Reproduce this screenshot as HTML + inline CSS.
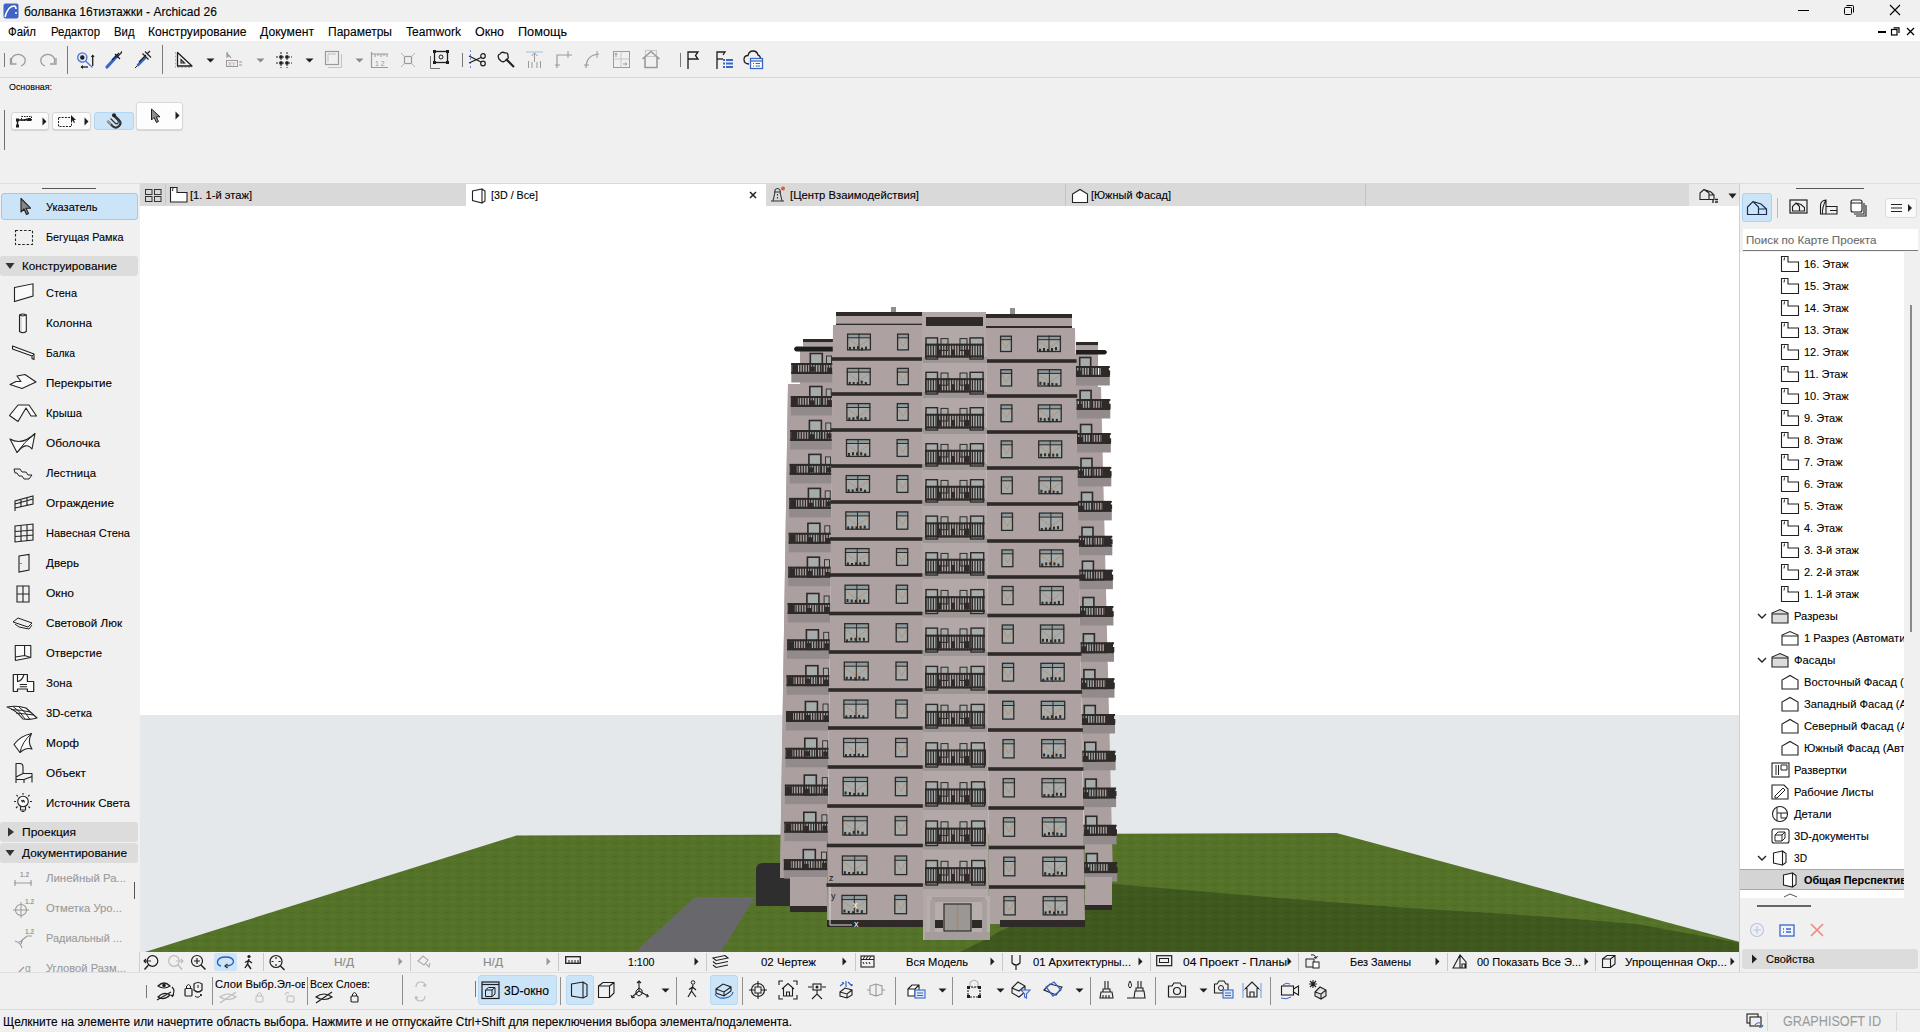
<!DOCTYPE html>
<html><head><meta charset="utf-8"><title>Archicad</title>
<style>
*{margin:0;padding:0;box-sizing:border-box}
html,body{width:1920px;height:1032px;overflow:hidden;background:#f0f0f0;font-family:"Liberation Sans",sans-serif;color:#000}
.a{position:absolute}
.t{position:absolute;white-space:nowrap;line-height:1;-webkit-text-stroke:0.1px currentColor}
svg{position:absolute;overflow:visible}
</style></head><body>
<div class="a" style="left:0px;top:0px;width:1920px;height:22px;background:#f0f0f0;"></div>
<svg class="a" style="left:3px;top:3px;" width="16" height="16" viewBox="0 0 16 16"><rect x="0.5" y="0.5" width="15" height="15" rx="2" fill="#3f63c6"/><path d="M2 14 Q5 3 11 3 Q13 3 13 6" stroke="#fff" stroke-width="1.6" fill="none"/><circle cx="13" cy="10" r="1" fill="#fff"/></svg>
<div class="t" style="left:24px;top:5.84px;font-size:12px;color:#000;">болванка 16тиэтажки - Archicad 26</div>
<div class="a" style="left:1798px;top:10px;width:11px;height:1px;background:#000;"></div>
<svg class="a" style="left:1843px;top:4px;" width="12" height="12" viewBox="0 0 12 12"><rect x="1.5" y="3.5" width="7" height="7" rx="1" fill="none" stroke="#000"/><path d="M3.5 1.5 H9.5 Q10.5 1.5 10.5 2.5 V8.5" fill="none" stroke="#000"/></svg>
<svg class="a" style="left:1889px;top:4px;" width="12" height="12" viewBox="0 0 12 12"><path d="M1 1 L11 11 M11 1 L1 11" stroke="#000" stroke-width="1.1"/></svg>
<div class="a" style="left:0px;top:22px;width:1920px;height:19px;background:#ffffff;"></div>
<div class="t" style="left:7.5px;top:26.34px;font-size:12px;color:#000;transform:scaleX(0.9491);transform-origin:0 0;">Файл</div>
<div class="t" style="left:50.5px;top:26.34px;font-size:12px;color:#000;transform:scaleX(0.9485);transform-origin:0 0;">Редактор</div>
<div class="t" style="left:114px;top:26.34px;font-size:12px;color:#000;transform:scaleX(0.9443);transform-origin:0 0;">Вид</div>
<div class="t" style="left:148px;top:26.34px;font-size:12px;color:#000;transform:scaleX(1.0124);transform-origin:0 0;">Конструирование</div>
<div class="t" style="left:260px;top:26.34px;font-size:12px;color:#000;transform:scaleX(1.0144);transform-origin:0 0;">Документ</div>
<div class="t" style="left:328px;top:26.34px;font-size:12px;color:#000;transform:scaleX(1.0005);transform-origin:0 0;">Параметры</div>
<div class="t" style="left:406px;top:26.34px;font-size:12px;color:#000;transform:scaleX(1.0058);transform-origin:0 0;">Teamwork</div>
<div class="t" style="left:475px;top:26.34px;font-size:12px;color:#000;transform:scaleX(1.0400);transform-origin:0 0;">Окно</div>
<div class="t" style="left:518px;top:26.34px;font-size:12px;color:#000;transform:scaleX(1.0572);transform-origin:0 0;">Помощь</div>
<div class="a" style="left:1878px;top:31px;width:8px;height:1.5px;background:#000;"></div>
<svg class="a" style="left:1891px;top:27px;" width="9" height="9" viewBox="0 0 9 9"><rect x="0.5" y="2.5" width="5.5" height="5.5" fill="none" stroke="#000" stroke-width="1.2"/><path d="M2.5 0.8 H8 V6" fill="none" stroke="#000" stroke-width="1.2"/></svg>
<svg class="a" style="left:1906px;top:27px;" width="9" height="9" viewBox="0 0 9 9"><path d="M1 1 L8 8 M8 1 L1 8" stroke="#000" stroke-width="1.3"/></svg>
<div class="a" style="left:0px;top:41px;width:1920px;height:36px;background:#f0f0f0;"></div>
<div class="a" style="left:0px;top:77px;width:1920px;height:1px;background:#d9d9d9;"></div>
<div class="a" style="left:4px;top:53px;width:1px;height:14px;background:#7a7a7a;"></div>
<svg class="a" style="left:9px;top:52px;" width="20" height="16" viewBox="0 0 20 16"><path d="M3 11 A7 6 0 1 1 12 14" stroke="#9a9a9a" stroke-width="1.3" fill="none"/><path d="M1.5 6 V12 H7.5" stroke="#9a9a9a" stroke-width="1.3" fill="none"/></svg>
<svg class="a" style="left:38px;top:52px;" width="20" height="16" viewBox="0 0 20 16"><path d="M16 11 A7 6 0 1 0 7 14" stroke="#9a9a9a" stroke-width="1.3" fill="none"/><path d="M18 6 V12 H12" stroke="#9a9a9a" stroke-width="1.3" fill="none"/></svg>
<div class="a" style="left:67px;top:46px;width:1px;height:28px;background:#7a7a7a;"></div>
<svg class="a" style="left:76px;top:50px;" width="20" height="20" viewBox="0 0 20 20"><circle cx="6.3" cy="7.5" r="4.6" stroke="#4d74d0" stroke-width="1.3" fill="#dfe7f7"/><circle cx="6.3" cy="7.5" r="2.2" fill="#1e1e1e"/><path d="M9.5 11 L16.5 17.5" stroke="#4d74d0" stroke-width="1.2"/><path d="M16.7 16 V5" stroke="#1e1e1e" stroke-width="1.3"/><path d="M14.8 7 L16.7 4.5 L18.6 7" fill="#1e1e1e"/><path d="M5 17 H12" stroke="#1e1e1e" stroke-width="1.3"/><path d="M7 15 L4.5 17 L7 19" fill="#1e1e1e"/></svg>
<svg class="a" style="left:104px;top:50px;" width="20" height="20" viewBox="0 0 20 20"><path d="M3 17 L13 6" stroke="#3a66c9" stroke-width="3.2" stroke-linecap="round"/><path d="M11 4 L16 9 M12.5 7.5 L17 3 Q18 2 17 1.5" stroke="#1e1e1e" stroke-width="1.2" fill="none"/><path d="M8 10 L15 3" stroke="#1e1e1e" stroke-width="1.1"/></svg>
<svg class="a" style="left:133px;top:50px;" width="20" height="20" viewBox="0 0 20 20"><path d="M2 18 L5 15" stroke="#1e1e1e" stroke-width="1"/><path d="M5 15 L12 8" stroke="#3a66c9" stroke-width="2.6" stroke-linecap="round"/><path d="M6 12 L13 5 M9.5 3.5 L15.5 9.5 M12 1.5 L18 7.5 M14 4 L17 1" stroke="#1e1e1e" stroke-width="1.1" fill="none"/></svg>
<div class="a" style="left:162px;top:45px;width:1px;height:29px;background:#7a7a7a;"></div>
<svg class="a" style="left:174px;top:50px;" width="20" height="20" viewBox="0 0 20 20"><path d="M1.5 2 V17.5 H18" stroke="#f0a060" stroke-width="1" stroke-dasharray="2 1.5" fill="none"/><path d="M3.5 2.5 V16 H18 Z" stroke="#1e1e1e" stroke-width="1.3" fill="none" stroke-linejoin="round"/><path d="M7 9.5 V13 H10.5 Z" stroke="#1e1e1e" stroke-width="1.1" fill="none"/></svg>
<svg class="a" style="left:206px;top:58px;" width="9" height="5" viewBox="0 0 9 5"><path d="M0.5 0.5 H8.5 L4.5 4.5 Z" fill="#1e1e1e"/></svg>
<svg class="a" style="left:225px;top:51px;" width="20" height="18" viewBox="0 0 20 18"><path d="M2 1 L2 6 L4 4.5 L6 7" stroke="#9a9a9a" stroke-width="1.2" fill="#9a9a9a"/><rect x="1.5" y="9.5" width="11" height="6" stroke="#9a9a9a" fill="none"/><text x="3" y="15" font-family="Liberation Sans" font-size="5.5" fill="#9a9a9a">XY</text><path d="M14 11 H17 M14 14 H17" stroke="#9a9a9a"/></svg>
<svg class="a" style="left:256px;top:58px;" width="9" height="5" viewBox="0 0 9 5"><path d="M0.5 0.5 H8.5 L4.5 4.5 Z" fill="#8a8a8a"/></svg>
<svg class="a" style="left:275px;top:51px;" width="20" height="18" viewBox="0 0 20 18"><path d="M6 1 V17 M12 1 V17 M1 6 H17 M1 12 H17" stroke="#1e1e1e" stroke-width="1" stroke-dasharray="2 1"/><rect x="4.5" y="4.5" width="3" height="3" fill="#1e1e1e"/><rect x="10.5" y="4.5" width="3" height="3" fill="#1e1e1e"/><rect x="4.5" y="10.5" width="3" height="3" fill="#1e1e1e"/><rect x="10.5" y="10.5" width="3" height="3" fill="#1e1e1e"/></svg>
<svg class="a" style="left:305px;top:58px;" width="9" height="5" viewBox="0 0 9 5"><path d="M0.5 0.5 H8.5 L4.5 4.5 Z" fill="#1e1e1e"/></svg>
<svg class="a" style="left:324px;top:50px;" width="20" height="20" viewBox="0 0 20 20"><rect x="1.5" y="1.5" width="13" height="13" stroke="#9a9a9a" fill="none" stroke-width="1.2"/><path d="M4 17.5 H17.5 V4" stroke="#b8c4d8" fill="none"/><path d="M4 12 V4 H12" stroke="#c0c0c0" fill="none"/></svg>
<svg class="a" style="left:355px;top:58px;" width="9" height="5" viewBox="0 0 9 5"><path d="M0.5 0.5 H8.5 L4.5 4.5 Z" fill="#8a8a8a"/></svg>
<svg class="a" style="left:370px;top:51px;" width="20" height="18" viewBox="0 0 20 18"><path d="M1.5 1 V16.5 H18" stroke="#9a9a9a" fill="none" stroke-width="1.2"/><path d="M1.5 3 H18 M5 3 V6 M8 3 V5 M11 3 V6 M14 3 V5 M17 3 V6" stroke="#9a9a9a" fill="none"/><text x="5" y="14.5" font-family="Liberation Sans" font-size="7" fill="#9a9a9a">1 2</text></svg>
<svg class="a" style="left:400px;top:51px;" width="16" height="18" viewBox="0 0 16 18"><rect x="4.5" y="5.5" width="7" height="7" stroke="#9a9a9a" fill="none" stroke-width="1.2"/><path d="M1 2 L5 6 M15 2 L11 6 M1 16 L5 12 M15 16 L11 12" stroke="#b5b5b5"/></svg>
<svg class="a" style="left:429px;top:50px;" width="20" height="20" viewBox="0 0 20 20"><path d="M1.5 6 V18.5 H11" stroke="#555" fill="none" stroke-width="0.8"/><rect x="5.5" y="1.5" width="13" height="11" stroke="#1e1e1e" stroke-width="1.3" fill="none"/><rect x="4" y="0" width="3" height="3" fill="#1e1e1e"/><rect x="17" y="0" width="3" height="3" fill="#1e1e1e"/><rect x="4" y="11" width="3" height="3" fill="#1e1e1e"/><rect x="17" y="11" width="3" height="3" fill="#1e1e1e"/><circle cx="12" cy="7" r="2" stroke="#1e1e1e" fill="none"/></svg>
<div class="a" style="left:462px;top:53px;width:1px;height:14px;background:#7a7a7a;"></div>
<svg class="a" style="left:466px;top:49px;" width="22" height="22" viewBox="0 0 22 22"><path d="M4.5 1 V20" stroke="#6a8fd8" stroke-dasharray="2 2"/><circle cx="17" cy="7" r="2.3" stroke="#1e1e1e" fill="none" stroke-width="1.2"/><circle cx="17" cy="14.5" r="2.3" stroke="#1e1e1e" fill="none" stroke-width="1.2"/><path d="M3 7 L15 13 M3 14 L15 8.5" stroke="#1e1e1e" stroke-width="1.2"/></svg>
<svg class="a" style="left:496px;top:50px;" width="20" height="20" viewBox="0 0 20 20"><path d="M10 9 L18 17" stroke="#1e1e1e" stroke-width="2"/><path d="M3 9 Q1 5 4 4 Q6 1 9 3 Q12 2 12 6 Q13 9 10 10 Q8 13 5 11 Z" stroke="#1e1e1e" stroke-width="1.3" fill="none"/></svg>
<svg class="a" style="left:525px;top:50px;" width="20" height="20" viewBox="0 0 20 20"><path d="M1 2 H18" stroke="#9fc0e8"/><path d="M9.5 3 V12 M6.5 6 L9.5 3 L12.5 6 M3.5 11 V18 M7 12 V18 M12 12 V18 M15.5 11 V18" stroke="#9a9a9a" fill="none"/></svg>
<svg class="a" style="left:554px;top:50px;" width="20" height="20" viewBox="0 0 20 20"><path d="M3 18 V5 H18" stroke="#9a9a9a" fill="none" stroke-width="1.2"/><path d="M14 1 V8 M1 15 H6" stroke="#9a9a9a" fill="none"/></svg>
<svg class="a" style="left:583px;top:50px;" width="20" height="20" viewBox="0 0 20 20"><path d="M3 18 Q3 5 16 4" stroke="#9a9a9a" fill="none" stroke-width="1.2"/><path d="M14 1 V8 M1 15 H6" stroke="#9a9a9a" fill="none"/></svg>
<svg class="a" style="left:612px;top:50px;" width="20" height="20" viewBox="0 0 20 20"><rect x="1.5" y="1.5" width="16" height="16" stroke="#9a9a9a" fill="none"/><path d="M9 1.5 V17.5 M1.5 9 H17.5" stroke="#c5c5c5"/><path d="M4 7 V3 M2.5 4.5 L4 3 L5.5 4.5 M11 14 H15 M13.5 12.5 L15 14 L13.5 15.5" stroke="#9a9a9a" fill="none"/></svg>
<svg class="a" style="left:641px;top:49px;" width="20" height="21" viewBox="0 0 20 21"><rect x="4.5" y="1.5" width="11" height="6" stroke="#c8c8c8" fill="none"/><path d="M1.5 10 L10 2.5 L18.5 10 M4 8 V18.5 H16 V8" stroke="#9a9a9a" stroke-width="1.6" fill="none"/></svg>
<div class="a" style="left:680px;top:53px;width:1px;height:14px;background:#7a7a7a;"></div>
<svg class="a" style="left:686px;top:50px;" width="16" height="20" viewBox="0 0 16 20"><path d="M2 19 V2 H12 L9.5 5.5 L12 9 H2" stroke="#1e1e1e" stroke-width="1.3" fill="none"/></svg>
<svg class="a" style="left:715px;top:50px;" width="20" height="20" viewBox="0 0 20 20"><path d="M2 19 V2 H10 L8 5" stroke="#1e1e1e" stroke-width="1.3" fill="none"/><path d="M2 9 H8" stroke="#1e1e1e" stroke-width="1.3"/><rect x="8" y="9" width="2" height="2" fill="#3a66c9"/><rect x="11" y="9" width="7" height="2" fill="#3a66c9"/><rect x="8" y="12.5" width="2" height="2" fill="#3a66c9"/><rect x="11" y="12.5" width="7" height="2" fill="#3a66c9"/><rect x="8" y="16" width="2" height="2" fill="#3a66c9"/><rect x="11" y="16" width="7" height="2" fill="#3a66c9"/></svg>
<svg class="a" style="left:742px;top:49px;" width="22" height="22" viewBox="0 0 22 22"><path d="M7 15 Q2 15 2 10.5 Q2 6.5 6 6.5 Q7 2 11 2 Q15 2 16 6 Q18 6.5 18.5 9" stroke="#1e1e1e" stroke-width="1.3" fill="none"/><rect x="8.5" y="9.5" width="12" height="10" fill="#fff" stroke="#3a66c9" stroke-width="1.3"/><path d="M8.5 12 H20.5" stroke="#3a66c9" stroke-width="1.3"/><path d="M11 14.5 H12 M13.5 14.5 H18 M11 17 H12 M13.5 17 H18" stroke="#3a66c9"/></svg>
<div class="t" style="left:9px;top:82.46px;font-size:9.5px;color:#000;transform:scaleX(0.9342);transform-origin:0 0;">Основная:</div>
<div class="a" style="left:4px;top:110px;width:1px;height:40px;background:#6e6e6e;"></div>
<div class="a" style="left:11px;top:112px;width:38px;height:18px;background:#fbfbfb;border:1px solid #d6d6d6;border-radius:3px;box-shadow:0 1px 1px rgba(0,0,0,0.12);"></div>
<svg class="a" style="left:16px;top:114px;" width="20" height="14" viewBox="0 0 20 14"><rect x="5.5" y="2.5" width="10" height="4" stroke="#1e1e1e" stroke-dasharray="1.5 1" fill="none"/><path d="M1.5 12 V6 H8 L12 5" stroke="#1e1e1e" stroke-width="1.4" fill="none"/><rect x="0" y="4.5" width="3" height="3" fill="#1e1e1e"/><rect x="0" y="10.5" width="3" height="3" fill="#1e1e1e"/><rect x="12" y="4" width="3" height="3" fill="#1e1e1e"/></svg>
<svg class="a" style="left:42px;top:117px;" width="5" height="9" viewBox="0 0 5 9"><path d="M0.5 0.5 V8.5 L4.5 4.5 Z" fill="#1e1e1e"/></svg>
<div class="a" style="left:52px;top:112px;width:39px;height:18px;background:#fbfbfb;border:1px solid #d6d6d6;border-radius:3px;box-shadow:0 1px 1px rgba(0,0,0,0.12);"></div>
<svg class="a" style="left:57px;top:114px;" width="22" height="14" viewBox="0 0 22 14"><rect x="1.5" y="3.5" width="13" height="9" stroke="#1e1e1e" stroke-dasharray="2 1.2" fill="none"/><path d="M14 1 L14 8 L15.6 6.5 L17 9 L18 8.5 L16.8 6 L19 6 Z" fill="#1e1e1e"/></svg>
<svg class="a" style="left:84px;top:117px;" width="5" height="9" viewBox="0 0 5 9"><path d="M0.5 0.5 V8.5 L4.5 4.5 Z" fill="#1e1e1e"/></svg>
<div class="a" style="left:94px;top:112px;width:40px;height:18px;background:#cce4f7;border:1px solid #b2d6f2;border-radius:3px;"></div>
<svg class="a" style="left:104px;top:112px;" width="20" height="19" viewBox="0 0 20 19"><path d="M3.5 9 L9 14.5 Q12 17 15 14 Q18 11 15 8 L10 3" stroke="#333" stroke-width="2.2" fill="none"/><path d="M3.5 9 L7 12.5" stroke="#999" stroke-width="2.4"/><path d="M6.5 6.5 L11 11 Q12.5 12.5 14 11 Q15 9.5 13.5 8 L9 3.5" stroke="#333" stroke-width="1.2" fill="none"/><circle cx="10" cy="3.2" r="2" fill="#222"/></svg>
<div class="a" style="left:136px;top:102px;width:47px;height:28px;background:#fdfdfd;border:1px solid #d9d9d9;border-radius:3px;box-shadow:0 1px 1px rgba(0,0,0,0.12);"></div>
<svg class="a" style="left:150px;top:108px;" width="14" height="16" viewBox="0 0 14 16"><path d="M1.5 1 V12 L4 9.5 L6.5 14.5 L8.5 13.5 L6.3 8.8 L10 8.8 Z" fill="#8d8d8d" stroke="#1e1e1e" stroke-width="1"/></svg>
<svg class="a" style="left:175px;top:111px;" width="5" height="9" viewBox="0 0 5 9"><path d="M0.5 0.5 V8.5 L4.5 4.5 Z" fill="#1e1e1e"/></svg>
<div class="a" style="left:0px;top:183px;width:1920px;height:1px;background:#dedede;"></div>
<div class="a" style="left:0px;top:184px;width:139px;height:788px;background:#f0f0f0;"></div>
<div class="a" style="left:42px;top:188px;width:54px;height:1px;background:#555;"></div>
<div class="a" style="left:1px;top:193px;width:137px;height:27px;background:#cce4f7;border:1px solid #9ccbee;border-radius:3px;"></div>
<svg class="a" style="left:13px;top:197px;" width="22" height="21" viewBox="0 0 22 21"><path d="M8 1.5 V15 L11 12 L13.5 17.5 L15.5 16.5 L13 11.2 L17.5 11.2 Z" fill="#888" stroke="#222" stroke-width="1.1" stroke-linejoin="round"/></svg>
<div class="t" style="left:46px;top:201.69px;font-size:11px;color:#000;transform:scaleX(1.0043);transform-origin:0 0;">Указатель</div>
<svg class="a" style="left:13px;top:227px;" width="22" height="21" viewBox="0 0 22 21"><rect x="2.5" y="3.5" width="17" height="14" fill="none" stroke="#222" stroke-dasharray="2.5 1.8" stroke-width="1.1"/></svg>
<div class="t" style="left:46px;top:231.69px;font-size:11px;color:#000;transform:scaleX(0.9828);transform-origin:0 0;">Бегущая Рамка</div>
<div class="a" style="left:0px;top:256px;width:138px;height:20px;background:#dcdcdc;border-radius:3px;"></div>
<svg class="a" style="left:5px;top:262px;" width="10" height="8" viewBox="0 0 10 8"><path d="M0.5 1 H9.5 L5 7 Z" fill="#333"/></svg>
<div class="t" style="left:22px;top:260.69px;font-size:11px;color:#000;transform:scaleX(1.0652);transform-origin:0 0;">Конструирование</div>
<svg class="a" style="left:12px;top:283px;" width="22" height="21" viewBox="0 0 22 21"><path d="M2.5 4.5 L21 0.8 V13 L2.5 18.5 Z" fill="#fafafa" stroke="#222" stroke-width="1.1"/></svg>
<div class="t" style="left:46px;top:287.69px;font-size:11px;color:#000;transform:scaleX(0.9946);transform-origin:0 0;">Стена</div>
<svg class="a" style="left:12px;top:313px;" width="22" height="21" viewBox="0 0 22 21"><path d="M7.5 2 Q11 0 14.3 2 V18.5 Q11 21 7.5 18.5 Z" fill="#fafafa" stroke="#222" stroke-width="1.1"/><path d="M7.5 2 Q11 4 14.3 2" fill="none" stroke="#222"/><path d="M9 3 V18" stroke="#bbb"/></svg>
<div class="t" style="left:46px;top:317.69px;font-size:11px;color:#000;transform:scaleX(1.0645);transform-origin:0 0;">Колонна</div>
<svg class="a" style="left:12px;top:343px;" width="22" height="21" viewBox="0 0 22 21"><path d="M0.5 3 L22 11 V16.5 L20 15.5 V13 L0.5 6 Z" fill="#fafafa" stroke="#222" stroke-width="1.1" stroke-linejoin="round"/><path d="M20 13 L22 11" stroke="#222"/></svg>
<div class="t" style="left:46px;top:347.69px;font-size:11px;color:#000;transform:scaleX(0.9377);transform-origin:0 0;">Балка</div>
<svg class="a" style="left:12px;top:373px;" width="22" height="21" viewBox="0 0 22 21"><path d="M5 3 L13 1.5 L24 9 L10 15.5 L-2 11.5 L4 8.5 H9 Z" fill="#fafafa" stroke="#222" stroke-width="1.1" stroke-linejoin="round"/></svg>
<div class="t" style="left:46px;top:377.69px;font-size:11px;color:#000;transform:scaleX(1.0577);transform-origin:0 0;">Перекрытие</div>
<svg class="a" style="left:12px;top:403px;" width="22" height="21" viewBox="0 0 22 21"><path d="M-2.5 12.5 L6 2 H17 L24.5 13 H19 L14 5 L6 18.5 Z M14 5 L6 18.5" fill="#fafafa" stroke="#222" stroke-width="1.1" stroke-linejoin="round"/></svg>
<div class="t" style="left:46px;top:407.69px;font-size:11px;color:#000;transform:scaleX(1.0177);transform-origin:0 0;">Крыша</div>
<svg class="a" style="left:12px;top:433px;" width="22" height="21" viewBox="0 0 22 21"><path d="M-2 6 Q10 13 23 0.5 L20 16 Q14 8 5 19.5 Z" fill="#fafafa" stroke="#222" stroke-width="1.1" stroke-linejoin="round"/><path d="M5 19.5 Q12 9 23 0.5" fill="none" stroke="#222"/></svg>
<div class="t" style="left:46px;top:437.69px;font-size:11px;color:#000;transform:scaleX(1.0788);transform-origin:0 0;">Оболочка</div>
<svg class="a" style="left:12px;top:463px;" width="22" height="21" viewBox="0 0 22 21"><path d="M2 6 H8 L10 9 H14 L16 12 H20 L17 16 H12 L10 13 H7 L5 10 H3 Z" fill="none" stroke="#222" stroke-width="1"/></svg>
<div class="t" style="left:46px;top:467.69px;font-size:11px;color:#000;transform:scaleX(1.0307);transform-origin:0 0;">Лестница</div>
<svg class="a" style="left:12px;top:493px;" width="22" height="21" viewBox="0 0 22 21"><path d="M3 18 V8 L21 3 V11 L3 15 M3 11 L21 6 M9 7 V14 M15 5 V12" fill="none" stroke="#222" stroke-width="1.1"/></svg>
<div class="t" style="left:46px;top:497.69px;font-size:11px;color:#000;transform:scaleX(1.0787);transform-origin:0 0;">Ограждение</div>
<svg class="a" style="left:12px;top:523px;" width="22" height="21" viewBox="0 0 22 21"><path d="M3 3 L21 1 V17 L3 19 Z M3 8.5 L21 7 M3 13.5 L21 12 M9 2.5 V18.5 M15 2 V18" fill="none" stroke="#222" stroke-width="1.1"/></svg>
<div class="t" style="left:46px;top:527.69px;font-size:11px;color:#000;transform:scaleX(1.0027);transform-origin:0 0;">Навесная Стена</div>
<svg class="a" style="left:12px;top:553px;" width="22" height="21" viewBox="0 0 22 21"><path d="M7 3 L17 1.5 V17 L7 19 Z" fill="none" stroke="#222" stroke-width="1.1"/><path d="M9 10 V11" stroke="#222"/></svg>
<div class="t" style="left:46px;top:557.69px;font-size:11px;color:#000;transform:scaleX(1.0598);transform-origin:0 0;">Дверь</div>
<svg class="a" style="left:12px;top:583px;" width="22" height="21" viewBox="0 0 22 21"><path d="M5 3 H17 V19 H5 Z M11 3 V19 M5 11 H17" fill="none" stroke="#222" stroke-width="1.1"/></svg>
<div class="t" style="left:46px;top:587.69px;font-size:11px;color:#000;transform:scaleX(1.0954);transform-origin:0 0;">Окно</div>
<svg class="a" style="left:12px;top:613px;" width="22" height="21" viewBox="0 0 22 21"><path d="M1 9 L6 5 L20 10 L16 14 Z M3 11 L7 14 L17 16 L20 12" fill="none" stroke="#222" stroke-width="1"/></svg>
<div class="t" style="left:46px;top:617.69px;font-size:11px;color:#000;transform:scaleX(1.0590);transform-origin:0 0;">Световой Люк</div>
<svg class="a" style="left:12px;top:643px;" width="22" height="21" viewBox="0 0 22 21"><path d="M3.2 2.5 H18.8 V14.5 L3.4 17.5 Z" fill="#fafafa" stroke="#222" stroke-width="1.1" stroke-linejoin="round"/><path d="M12.6 2.5 V12.5 M3.4 14 L12.6 12.5 L18.8 14.5" fill="none" stroke="#222" stroke-width="1.1"/></svg>
<div class="t" style="left:46px;top:647.69px;font-size:11px;color:#000;transform:scaleX(1.0303);transform-origin:0 0;">Отверстие</div>
<svg class="a" style="left:12px;top:673px;" width="22" height="21" viewBox="0 0 22 21"><path d="M1.3 1.5 H15.4 V8.5 H21.7 V18.5 H15.4 V16 H5.5 V18.5 H1.3 Z" fill="#fafafa" stroke="#222" stroke-width="1.2" stroke-linejoin="round"/><path d="M5.5 1.5 V8.5 Q10 8 12 1.5 M7.7 11.5 H15 M7.7 13.8 H15" fill="none" stroke="#222" stroke-width="1.1"/></svg>
<div class="t" style="left:46px;top:677.69px;font-size:11px;color:#000;transform:scaleX(1.0419);transform-origin:0 0;">Зона</div>
<svg class="a" style="left:12px;top:703px;" width="22" height="21" viewBox="0 0 22 21"><path d="M-5 4 Q5 2 14 5 L25 15 Q18 17 11 16 Q4 7 -5 4 Z" fill="#fafafa" stroke="#222" stroke-width="1.1" stroke-linejoin="round"/><path d="M1 3.5 Q8 8 13 16 M7 4 Q13 8 18 16.5 M-1 6.5 Q10 7 18 9 M4 10 Q14 11 21.5 12" fill="none" stroke="#222"/></svg>
<div class="t" style="left:46px;top:707.69px;font-size:11px;color:#000;transform:scaleX(1.0180);transform-origin:0 0;">3D-сетка</div>
<svg class="a" style="left:12px;top:733px;" width="22" height="21" viewBox="0 0 22 21"><path d="M19.5 0.5 Q8 3 2 11.5 L8 19.5 Q14 14 20 16 Q15 9 19.5 0.5 Z" fill="#fafafa" stroke="#222" stroke-width="1.1" stroke-linejoin="round"/><path d="M19.5 0.5 Q10 9 8 19.5" fill="none" stroke="#222"/></svg>
<div class="t" style="left:46px;top:737.69px;font-size:11px;color:#000;transform:scaleX(1.0794);transform-origin:0 0;">Морф</div>
<svg class="a" style="left:12px;top:763px;" width="22" height="21" viewBox="0 0 22 21"><path d="M4 20 V0.5 H8 Q11 0.5 11 4 V10.5 M4 14 L11 10.5 H20 V13.5 L12 16.5 H4 M20 13.5 V19.5 M12 16.5 V20 M11 10.5 L4 14" fill="none" stroke="#222" stroke-width="1.1" stroke-linejoin="round"/></svg>
<div class="t" style="left:46px;top:767.69px;font-size:11px;color:#000;transform:scaleX(1.0679);transform-origin:0 0;">Объект</div>
<svg class="a" style="left:12px;top:793px;" width="22" height="21" viewBox="0 0 22 21"><circle cx="11" cy="8.5" r="5.3" fill="#fafafa" stroke="#222" stroke-width="1.1"/><path d="M8.5 13.5 V17 H13.5 V13.5 M9.5 18.5 H12.5 M11 0 V1.8 M2 8.5 H4 M18 8.5 H20 M4.5 2 L5.8 3.3 M17.5 2 L16.2 3.3 M4 15 L5.5 13.5 M18 15 L16.5 13.5 M9.5 7 Q10.5 10 11 8 Q11.5 6 12.5 9.5" fill="none" stroke="#222" stroke-width="1.1"/></svg>
<div class="t" style="left:46px;top:797.69px;font-size:11px;color:#000;transform:scaleX(1.0439);transform-origin:0 0;">Источник Света</div>
<div class="a" style="left:0px;top:822px;width:138px;height:20px;background:#dcdcdc;border-radius:3px;"></div>
<svg class="a" style="left:7px;top:827px;" width="8" height="10" viewBox="0 0 8 10"><path d="M1 0.5 V9.5 L7 5 Z" fill="#333"/></svg>
<div class="t" style="left:22px;top:826.69px;font-size:11px;color:#000;transform:scaleX(1.0915);transform-origin:0 0;">Проекция</div>
<div class="a" style="left:0px;top:843px;width:138px;height:20px;background:#dcdcdc;border-radius:3px;"></div>
<svg class="a" style="left:5px;top:849px;" width="10" height="8" viewBox="0 0 10 8"><path d="M0.5 1 H9.5 L5 7 Z" fill="#333"/></svg>
<div class="t" style="left:22px;top:847.69px;font-size:11px;color:#000;transform:scaleX(1.0785);transform-origin:0 0;">Документирование</div>
<svg class="a" style="left:12px;top:868px;" width="22" height="21" viewBox="0 0 22 21"><path d="M2 15 H20 M3 12 V18 M19 12 V18" stroke="#999" fill="none" stroke-width="1.1"/><text x="8" y="9" font-family="Liberation Sans" font-size="6.5" fill="#999" font-weight="bold">1.2</text></svg>
<div class="t" style="left:46px;top:872.69px;font-size:11px;color:#9a9a9a;transform:scaleX(1.0371);transform-origin:0 0;">Линейный Ра...</div>
<svg class="a" style="left:12px;top:898px;" width="22" height="21" viewBox="0 0 22 21"><circle cx="9" cy="12" r="5.5" stroke="#999" fill="none" stroke-width="1.1"/><path d="M9 4 V20 M1 12 H17" stroke="#999"/><text x="13" y="6" font-family="Liberation Sans" font-size="6.5" fill="#999" font-weight="bold">1.2</text></svg>
<div class="t" style="left:46px;top:902.69px;font-size:11px;color:#9a9a9a;transform:scaleX(1.0260);transform-origin:0 0;">Отметка Уро...</div>
<svg class="a" style="left:12px;top:928px;" width="22" height="21" viewBox="0 0 22 21"><path d="M3 13 Q9 15 10 20 M9 13 L15 8 H20 M7 14 L10 13 L9 16" stroke="#999" fill="none" stroke-width="1.1"/><text x="13" y="6" font-family="Liberation Sans" font-size="6.5" fill="#999" font-weight="bold">1.2</text></svg>
<div class="t" style="left:46px;top:932.69px;font-size:11px;color:#9a9a9a;transform:scaleX(0.9965);transform-origin:0 0;">Радиальный ...</div>
<svg class="a" style="left:12px;top:958px;" width="22" height="21" viewBox="0 0 22 21"><path d="M1 20 L12 9 M5 16 Q8 16 9 20 M7 14 L9 15" stroke="#999" fill="none" stroke-width="1.1"/><text x="13" y="14" font-family="Liberation Sans" font-size="10" fill="#999">α</text></svg>
<div class="t" style="left:46px;top:962.69px;font-size:11px;color:#9a9a9a;transform:scaleX(1.0165);transform-origin:0 0;">Угловой Разм...</div>
<div class="a" style="left:134px;top:882px;width:1px;height:17px;background:#555;"></div>
<div class="a" style="left:139px;top:183px;width:1600px;height:23px;background:#d9d9d9;"></div>
<div class="a" style="left:139px;top:183px;width:1px;height:23px;background:#e8e8e8;"></div>
<svg class="a" style="left:144px;top:188px;" width="20" height="16" viewBox="0 0 20 16"><rect x="1.5" y="1.5" width="6.5" height="5" stroke="#333" fill="none"/><rect x="10.5" y="1.5" width="6.5" height="5" stroke="#333" fill="none"/><rect x="1.5" y="8.5" width="6.5" height="5" stroke="#333" fill="none"/><rect x="10.5" y="8.5" width="6.5" height="5" stroke="#333" fill="none"/></svg>
<div class="a" style="left:165px;top:184px;width:1px;height:21px;background:#c8c8c8;"></div>
<svg class="a" style="left:170px;top:187px;" width="20" height="16" viewBox="0 0 20 16"><path d="M0.5 0.5 H7 V5.5 H17 V15 H0.5 Z" fill="#fff" stroke="#222" stroke-width="1.1"/><path d="M3 1 L2.5 4" stroke="#222"/></svg>
<div class="t" style="left:190px;top:189.69px;font-size:11px;color:#000;transform:scaleX(1.0150);transform-origin:0 0;">[1. 1-й этаж]</div>
<div class="a" style="left:466px;top:184px;width:300px;height:22px;background:#ffffff;"></div>
<svg class="a" style="left:471px;top:188px;" width="20" height="16" viewBox="0 0 20 16"><path d="M1.5 3 L11 1 V15 L1.5 12.5 Z M11 1 L14 3 V13 L11 15" fill="#fff" stroke="#222" stroke-width="1.1"/></svg>
<div class="t" style="left:490.5px;top:189.69px;font-size:11px;color:#000;transform:scaleX(0.9731);transform-origin:0 0;">[3D / Все]</div>
<svg class="a" style="left:749px;top:191px;" width="8" height="8" viewBox="0 0 8 8"><path d="M1 1 L7 7 M7 1 L1 7" stroke="#222" stroke-width="1.5"/></svg>
<svg class="a" style="left:770px;top:186px;" width="20" height="16" viewBox="0 0 20 16"><path d="M5 4 Q7.5 1 10 4 V6 H5 Z M4 6 H11 M5 6 L3 15 M10 6 L12 15 M1 15 H14 M7.5 8 V9.5 M7.5 11 V12.5" fill="none" stroke="#333" stroke-width="1.1"/><circle cx="13" cy="2.5" r="2" fill="#e05a3a"/></svg>
<div class="t" style="left:790px;top:189.69px;font-size:11px;color:#000;transform:scaleX(1.0246);transform-origin:0 0;">[Центр Взаимодействия]</div>
<div class="a" style="left:1065px;top:184px;width:1px;height:22px;background:#c4c4c4;"></div>
<svg class="a" style="left:1071px;top:188px;" width="20" height="16" viewBox="0 0 20 16"><path d="M1.5 14.5 V6 L9 1.5 L16.5 6 V14.5 Z" fill="#fff" stroke="#222" stroke-width="1.1"/></svg>
<div class="t" style="left:1090.5px;top:189.69px;font-size:11px;color:#000;transform:scaleX(0.9965);transform-origin:0 0;">[Южный Фасад]</div>
<div class="a" style="left:1365px;top:184px;width:1px;height:22px;background:#c4c4c4;"></div>
<div class="a" style="left:1689px;top:184px;width:50px;height:22px;background:#e9e9e9;"></div>
<svg class="a" style="left:1699px;top:188px;" width="20" height="16" viewBox="0 0 20 16"><path d="M1 11.5 V5 L5 1.5 L10 5 V11.5 Z M5 1.5 L12 4 L15 7 V11.5 H10 M10 7 H15" fill="none" stroke="#222" stroke-width="1.1"/><path d="M14 11 V15 M16 11.5 H19 M16 14 H19" stroke="#222" stroke-width="1.3"/></svg>
<svg class="a" style="left:1728px;top:193px;" width="9" height="6" viewBox="0 0 9 6"><path d="M0.5 0.5 H8.5 L4.5 5.5 Z" fill="#222"/></svg>
<div class="a" style="left:140px;top:206px;width:1599px;height:746px;background:#ffffff;"></div>
<div class="a" style="left:140px;top:715px;width:1599px;height:237px;background:#e4e8eb;"></div>
<svg class="a" style="left:0;top:0" width="1920" height="1032" viewBox="0 0 1920 1032"><defs><pattern id="grass" width="12" height="7" patternUnits="userSpaceOnUse"><rect width="12" height="7" fill="#557229"/><rect x="0" y="2" width="6" height="1.5" fill="#4f6b25"/><rect x="6" y="5" width="6" height="1.5" fill="#59772c"/></pattern><pattern id="shadow" width="12" height="7" patternUnits="userSpaceOnUse"><rect width="12" height="7" fill="#3f581e"/><rect x="0" y="2" width="6" height="1.5" fill="#3a521b"/><rect x="6" y="5" width="6" height="1.5" fill="#435d21"/></pattern></defs><polygon points="145,952 516.5,835.5 1336.5,833 1740,942 1740,952" fill="url(#grass)"/><path d="M990 937 L1000 931 L1113 884 L1268 897 L1402 907.5 L1537 916 L1637 924 L1740 943 V952 H960 Z" fill="url(#shadow)"/><polygon points="695,897 755,897 721,952 635,952" fill="#68686c"/><path d="M756 870 Q756 863 763 863 H790 V906 H756 Z" fill="#2e2e2e"/><polygon points="800,351 833,351 833,384 788,384 788,384 780,878 827,878 827,384 833,384" fill="#ab9f9f"/><polygon points="788,384 833,384 827,878 780,878" fill="#ab9f9f"/><rect x="800.0" y="351.0" width="33.0" height="34.0" fill="#ab9f9f" /><rect x="803.0" y="339.0" width="30.0" height="3.5" fill="#2d2a28" /><rect x="803.0" y="342.5" width="30.0" height="4.0" fill="#aea1a1" /><path d="M796 346.5 H833 V351.5 H796 Q792 349 796 346.5 Z" fill="#1f1d1c"/><rect x="810.3" y="353.5" width="12.0" height="20.0" fill="#a6abac" stroke="#2d2a28" stroke-width="1.6"/><rect x="826.5" y="356.0" width="5.0" height="8.0" fill="#a9a9a9" stroke="#2d2a28" stroke-width="0.9"/><rect x="791.3" y="374.0" width="41.2" height="8.5" fill="#938b8b" /><rect x="791.3" y="363.0" width="41.2" height="2.0" fill="#2d2a28" /><rect x="791.3" y="371.8" width="41.2" height="2.2" fill="#2d2a28" /><rect x="791.3" y="363.0" width="1.2" height="11.0" fill="#2d2a28" /><rect x="793.9" y="363.0" width="1.2" height="11.0" fill="#2d2a28" /><rect x="796.5" y="363.0" width="1.2" height="11.0" fill="#2d2a28" /><rect x="799.1" y="363.0" width="1.2" height="11.0" fill="#2d2a28" /><rect x="801.7" y="363.0" width="1.2" height="11.0" fill="#2d2a28" /><rect x="804.3" y="363.0" width="1.2" height="11.0" fill="#2d2a28" /><rect x="806.9" y="363.0" width="1.2" height="11.0" fill="#2d2a28" /><rect x="809.5" y="363.0" width="1.2" height="11.0" fill="#2d2a28" /><rect x="812.1" y="363.0" width="1.2" height="11.0" fill="#2d2a28" /><rect x="814.7" y="363.0" width="1.2" height="11.0" fill="#2d2a28" /><rect x="817.3" y="363.0" width="1.2" height="11.0" fill="#2d2a28" /><rect x="819.9" y="363.0" width="1.2" height="11.0" fill="#2d2a28" /><rect x="822.5" y="363.0" width="1.2" height="11.0" fill="#2d2a28" /><rect x="825.1" y="363.0" width="1.2" height="11.0" fill="#2d2a28" /><rect x="827.7" y="363.0" width="1.2" height="11.0" fill="#2d2a28" /><rect x="830.3" y="363.0" width="1.2" height="11.0" fill="#2d2a28" /><rect x="792.6" y="367.0" width="5.0" height="5.0" fill="#2d2a28" /><rect x="809.9" y="366.6" width="5.0" height="5.0" fill="#2d2a28" /><rect x="827.2" y="367.6" width="5.0" height="5.0" fill="#2d2a28" /><rect x="792.3" y="365.0" width="6.0" height="7.0" fill="#2d2a28" /><rect x="809.8" y="386.5" width="12.0" height="20.0" fill="#a6abac" stroke="#2d2a28" stroke-width="1.6"/><rect x="826.2" y="389.0" width="5.0" height="8.0" fill="#a9a9a9" stroke="#2d2a28" stroke-width="0.9"/><rect x="790.8" y="407.0" width="41.4" height="8.5" fill="#938b8b" /><rect x="790.8" y="396.0" width="41.4" height="2.0" fill="#2d2a28" /><rect x="790.8" y="404.8" width="41.4" height="2.2" fill="#2d2a28" /><rect x="790.8" y="396.0" width="1.2" height="11.0" fill="#2d2a28" /><rect x="793.4" y="396.0" width="1.2" height="11.0" fill="#2d2a28" /><rect x="796.0" y="396.0" width="1.2" height="11.0" fill="#2d2a28" /><rect x="798.6" y="396.0" width="1.2" height="11.0" fill="#2d2a28" /><rect x="801.2" y="396.0" width="1.2" height="11.0" fill="#2d2a28" /><rect x="803.8" y="396.0" width="1.2" height="11.0" fill="#2d2a28" /><rect x="806.4" y="396.0" width="1.2" height="11.0" fill="#2d2a28" /><rect x="809.0" y="396.0" width="1.2" height="11.0" fill="#2d2a28" /><rect x="811.6" y="396.0" width="1.2" height="11.0" fill="#2d2a28" /><rect x="814.2" y="396.0" width="1.2" height="11.0" fill="#2d2a28" /><rect x="816.8" y="396.0" width="1.2" height="11.0" fill="#2d2a28" /><rect x="819.4" y="396.0" width="1.2" height="11.0" fill="#2d2a28" /><rect x="822.0" y="396.0" width="1.2" height="11.0" fill="#2d2a28" /><rect x="824.6" y="396.0" width="1.2" height="11.0" fill="#2d2a28" /><rect x="827.2" y="396.0" width="1.2" height="11.0" fill="#2d2a28" /><rect x="829.8" y="396.0" width="1.2" height="11.0" fill="#2d2a28" /><rect x="792.1" y="399.5" width="5.0" height="5.0" fill="#2d2a28" /><rect x="809.5" y="400.4" width="5.0" height="5.0" fill="#2d2a28" /><rect x="826.9" y="400.1" width="5.0" height="5.0" fill="#2d2a28" /><rect x="791.8" y="398.0" width="6.0" height="7.0" fill="#2d2a28" /><rect x="809.4" y="420.5" width="12.0" height="20.0" fill="#a6abac" stroke="#2d2a28" stroke-width="1.6"/><rect x="825.8" y="423.0" width="5.0" height="8.0" fill="#a9a9a9" stroke="#2d2a28" stroke-width="0.9"/><rect x="790.3" y="441.0" width="41.6" height="8.5" fill="#938b8b" /><rect x="790.3" y="430.0" width="41.6" height="2.0" fill="#2d2a28" /><rect x="790.3" y="438.8" width="41.6" height="2.2" fill="#2d2a28" /><rect x="790.3" y="430.0" width="1.2" height="11.0" fill="#2d2a28" /><rect x="792.9" y="430.0" width="1.2" height="11.0" fill="#2d2a28" /><rect x="795.5" y="430.0" width="1.2" height="11.0" fill="#2d2a28" /><rect x="798.1" y="430.0" width="1.2" height="11.0" fill="#2d2a28" /><rect x="800.7" y="430.0" width="1.2" height="11.0" fill="#2d2a28" /><rect x="803.3" y="430.0" width="1.2" height="11.0" fill="#2d2a28" /><rect x="805.9" y="430.0" width="1.2" height="11.0" fill="#2d2a28" /><rect x="808.5" y="430.0" width="1.2" height="11.0" fill="#2d2a28" /><rect x="811.1" y="430.0" width="1.2" height="11.0" fill="#2d2a28" /><rect x="813.7" y="430.0" width="1.2" height="11.0" fill="#2d2a28" /><rect x="816.3" y="430.0" width="1.2" height="11.0" fill="#2d2a28" /><rect x="818.9" y="430.0" width="1.2" height="11.0" fill="#2d2a28" /><rect x="821.5" y="430.0" width="1.2" height="11.0" fill="#2d2a28" /><rect x="824.1" y="430.0" width="1.2" height="11.0" fill="#2d2a28" /><rect x="826.7" y="430.0" width="1.2" height="11.0" fill="#2d2a28" /><rect x="829.3" y="430.0" width="1.2" height="11.0" fill="#2d2a28" /><rect x="791.6" y="433.4" width="5.0" height="5.0" fill="#2d2a28" /><rect x="809.0" y="434.3" width="5.0" height="5.0" fill="#2d2a28" /><rect x="826.5" y="433.4" width="5.0" height="5.0" fill="#2d2a28" /><rect x="791.3" y="432.0" width="6.0" height="7.0" fill="#2d2a28" /><rect x="808.9" y="454.4" width="12.0" height="20.0" fill="#a6abac" stroke="#2d2a28" stroke-width="1.6"/><rect x="825.5" y="456.9" width="5.0" height="8.0" fill="#a9a9a9" stroke="#2d2a28" stroke-width="0.9"/><rect x="789.7" y="474.9" width="41.8" height="8.5" fill="#938b8b" /><rect x="789.7" y="463.9" width="41.8" height="2.0" fill="#2d2a28" /><rect x="789.7" y="472.7" width="41.8" height="2.2" fill="#2d2a28" /><rect x="789.7" y="463.9" width="1.2" height="11.0" fill="#2d2a28" /><rect x="792.3" y="463.9" width="1.2" height="11.0" fill="#2d2a28" /><rect x="794.9" y="463.9" width="1.2" height="11.0" fill="#2d2a28" /><rect x="797.5" y="463.9" width="1.2" height="11.0" fill="#2d2a28" /><rect x="800.1" y="463.9" width="1.2" height="11.0" fill="#2d2a28" /><rect x="802.7" y="463.9" width="1.2" height="11.0" fill="#2d2a28" /><rect x="805.3" y="463.9" width="1.2" height="11.0" fill="#2d2a28" /><rect x="807.9" y="463.9" width="1.2" height="11.0" fill="#2d2a28" /><rect x="810.5" y="463.9" width="1.2" height="11.0" fill="#2d2a28" /><rect x="813.1" y="463.9" width="1.2" height="11.0" fill="#2d2a28" /><rect x="815.7" y="463.9" width="1.2" height="11.0" fill="#2d2a28" /><rect x="818.3" y="463.9" width="1.2" height="11.0" fill="#2d2a28" /><rect x="820.9" y="463.9" width="1.2" height="11.0" fill="#2d2a28" /><rect x="823.5" y="463.9" width="1.2" height="11.0" fill="#2d2a28" /><rect x="826.1" y="463.9" width="1.2" height="11.0" fill="#2d2a28" /><rect x="828.7" y="463.9" width="1.2" height="11.0" fill="#2d2a28" /><rect x="791.1" y="468.1" width="5.0" height="5.0" fill="#2d2a28" /><rect x="808.6" y="467.4" width="5.0" height="5.0" fill="#2d2a28" /><rect x="826.2" y="467.4" width="5.0" height="5.0" fill="#2d2a28" /><rect x="790.7" y="465.9" width="6.0" height="7.0" fill="#2d2a28" /><rect x="808.4" y="488.4" width="12.0" height="20.0" fill="#a6abac" stroke="#2d2a28" stroke-width="1.6"/><rect x="825.2" y="490.9" width="5.0" height="8.0" fill="#a9a9a9" stroke="#2d2a28" stroke-width="0.9"/><rect x="789.2" y="508.9" width="41.9" height="8.5" fill="#938b8b" /><rect x="789.2" y="497.9" width="41.9" height="2.0" fill="#2d2a28" /><rect x="789.2" y="506.7" width="41.9" height="2.2" fill="#2d2a28" /><rect x="789.2" y="497.9" width="1.2" height="11.0" fill="#2d2a28" /><rect x="791.8" y="497.9" width="1.2" height="11.0" fill="#2d2a28" /><rect x="794.4" y="497.9" width="1.2" height="11.0" fill="#2d2a28" /><rect x="797.0" y="497.9" width="1.2" height="11.0" fill="#2d2a28" /><rect x="799.6" y="497.9" width="1.2" height="11.0" fill="#2d2a28" /><rect x="802.2" y="497.9" width="1.2" height="11.0" fill="#2d2a28" /><rect x="804.8" y="497.9" width="1.2" height="11.0" fill="#2d2a28" /><rect x="807.4" y="497.9" width="1.2" height="11.0" fill="#2d2a28" /><rect x="810.0" y="497.9" width="1.2" height="11.0" fill="#2d2a28" /><rect x="812.6" y="497.9" width="1.2" height="11.0" fill="#2d2a28" /><rect x="815.2" y="497.9" width="1.2" height="11.0" fill="#2d2a28" /><rect x="817.8" y="497.9" width="1.2" height="11.0" fill="#2d2a28" /><rect x="820.4" y="497.9" width="1.2" height="11.0" fill="#2d2a28" /><rect x="823.0" y="497.9" width="1.2" height="11.0" fill="#2d2a28" /><rect x="825.6" y="497.9" width="1.2" height="11.0" fill="#2d2a28" /><rect x="828.2" y="497.9" width="1.2" height="11.0" fill="#2d2a28" /><rect x="790.6" y="502.0" width="5.0" height="5.0" fill="#2d2a28" /><rect x="808.2" y="502.8" width="5.0" height="5.0" fill="#2d2a28" /><rect x="825.8" y="501.4" width="5.0" height="5.0" fill="#2d2a28" /><rect x="790.2" y="499.9" width="6.0" height="7.0" fill="#2d2a28" /><rect x="807.9" y="523.3" width="12.0" height="20.0" fill="#a6abac" stroke="#2d2a28" stroke-width="1.6"/><rect x="824.8" y="525.8" width="5.0" height="8.0" fill="#a9a9a9" stroke="#2d2a28" stroke-width="0.9"/><rect x="788.7" y="543.8" width="42.1" height="8.5" fill="#938b8b" /><rect x="788.7" y="532.8" width="42.1" height="2.0" fill="#2d2a28" /><rect x="788.7" y="541.6" width="42.1" height="2.2" fill="#2d2a28" /><rect x="788.7" y="532.8" width="1.2" height="11.0" fill="#2d2a28" /><rect x="791.3" y="532.8" width="1.2" height="11.0" fill="#2d2a28" /><rect x="793.9" y="532.8" width="1.2" height="11.0" fill="#2d2a28" /><rect x="796.5" y="532.8" width="1.2" height="11.0" fill="#2d2a28" /><rect x="799.1" y="532.8" width="1.2" height="11.0" fill="#2d2a28" /><rect x="801.7" y="532.8" width="1.2" height="11.0" fill="#2d2a28" /><rect x="804.3" y="532.8" width="1.2" height="11.0" fill="#2d2a28" /><rect x="806.9" y="532.8" width="1.2" height="11.0" fill="#2d2a28" /><rect x="809.5" y="532.8" width="1.2" height="11.0" fill="#2d2a28" /><rect x="812.1" y="532.8" width="1.2" height="11.0" fill="#2d2a28" /><rect x="814.7" y="532.8" width="1.2" height="11.0" fill="#2d2a28" /><rect x="817.3" y="532.8" width="1.2" height="11.0" fill="#2d2a28" /><rect x="819.9" y="532.8" width="1.2" height="11.0" fill="#2d2a28" /><rect x="822.5" y="532.8" width="1.2" height="11.0" fill="#2d2a28" /><rect x="825.1" y="532.8" width="1.2" height="11.0" fill="#2d2a28" /><rect x="827.7" y="532.8" width="1.2" height="11.0" fill="#2d2a28" /><rect x="790.1" y="536.5" width="5.0" height="5.0" fill="#2d2a28" /><rect x="807.8" y="537.3" width="5.0" height="5.0" fill="#2d2a28" /><rect x="825.4" y="538.0" width="5.0" height="5.0" fill="#2d2a28" /><rect x="789.7" y="534.8" width="6.0" height="7.0" fill="#2d2a28" /><rect x="807.4" y="557.2" width="12.0" height="20.0" fill="#a6abac" stroke="#2d2a28" stroke-width="1.6"/><rect x="824.5" y="559.7" width="5.0" height="8.0" fill="#a9a9a9" stroke="#2d2a28" stroke-width="0.9"/><rect x="788.2" y="577.7" width="42.3" height="8.5" fill="#938b8b" /><rect x="788.2" y="566.7" width="42.3" height="2.0" fill="#2d2a28" /><rect x="788.2" y="575.5" width="42.3" height="2.2" fill="#2d2a28" /><rect x="788.2" y="566.7" width="1.2" height="11.0" fill="#2d2a28" /><rect x="790.8" y="566.7" width="1.2" height="11.0" fill="#2d2a28" /><rect x="793.4" y="566.7" width="1.2" height="11.0" fill="#2d2a28" /><rect x="796.0" y="566.7" width="1.2" height="11.0" fill="#2d2a28" /><rect x="798.6" y="566.7" width="1.2" height="11.0" fill="#2d2a28" /><rect x="801.2" y="566.7" width="1.2" height="11.0" fill="#2d2a28" /><rect x="803.8" y="566.7" width="1.2" height="11.0" fill="#2d2a28" /><rect x="806.4" y="566.7" width="1.2" height="11.0" fill="#2d2a28" /><rect x="809.0" y="566.7" width="1.2" height="11.0" fill="#2d2a28" /><rect x="811.6" y="566.7" width="1.2" height="11.0" fill="#2d2a28" /><rect x="814.2" y="566.7" width="1.2" height="11.0" fill="#2d2a28" /><rect x="816.8" y="566.7" width="1.2" height="11.0" fill="#2d2a28" /><rect x="819.4" y="566.7" width="1.2" height="11.0" fill="#2d2a28" /><rect x="822.0" y="566.7" width="1.2" height="11.0" fill="#2d2a28" /><rect x="824.6" y="566.7" width="1.2" height="11.0" fill="#2d2a28" /><rect x="827.2" y="566.7" width="1.2" height="11.0" fill="#2d2a28" /><rect x="829.8" y="566.7" width="1.2" height="11.0" fill="#2d2a28" /><rect x="789.6" y="571.2" width="5.0" height="5.0" fill="#2d2a28" /><rect x="807.3" y="570.8" width="5.0" height="5.0" fill="#2d2a28" /><rect x="825.1" y="572.0" width="5.0" height="5.0" fill="#2d2a28" /><rect x="789.2" y="568.7" width="6.0" height="7.0" fill="#2d2a28" /><rect x="806.9" y="593.5" width="12.0" height="20.0" fill="#a6abac" stroke="#2d2a28" stroke-width="1.6"/><rect x="824.1" y="596.0" width="5.0" height="8.0" fill="#a9a9a9" stroke="#2d2a28" stroke-width="0.9"/><rect x="787.7" y="614.0" width="42.4" height="8.5" fill="#938b8b" /><rect x="787.7" y="603.0" width="42.4" height="2.0" fill="#2d2a28" /><rect x="787.7" y="611.8" width="42.4" height="2.2" fill="#2d2a28" /><rect x="787.7" y="603.0" width="1.2" height="11.0" fill="#2d2a28" /><rect x="790.3" y="603.0" width="1.2" height="11.0" fill="#2d2a28" /><rect x="792.9" y="603.0" width="1.2" height="11.0" fill="#2d2a28" /><rect x="795.5" y="603.0" width="1.2" height="11.0" fill="#2d2a28" /><rect x="798.1" y="603.0" width="1.2" height="11.0" fill="#2d2a28" /><rect x="800.7" y="603.0" width="1.2" height="11.0" fill="#2d2a28" /><rect x="803.3" y="603.0" width="1.2" height="11.0" fill="#2d2a28" /><rect x="805.9" y="603.0" width="1.2" height="11.0" fill="#2d2a28" /><rect x="808.5" y="603.0" width="1.2" height="11.0" fill="#2d2a28" /><rect x="811.1" y="603.0" width="1.2" height="11.0" fill="#2d2a28" /><rect x="813.7" y="603.0" width="1.2" height="11.0" fill="#2d2a28" /><rect x="816.3" y="603.0" width="1.2" height="11.0" fill="#2d2a28" /><rect x="818.9" y="603.0" width="1.2" height="11.0" fill="#2d2a28" /><rect x="821.5" y="603.0" width="1.2" height="11.0" fill="#2d2a28" /><rect x="824.1" y="603.0" width="1.2" height="11.0" fill="#2d2a28" /><rect x="826.7" y="603.0" width="1.2" height="11.0" fill="#2d2a28" /><rect x="829.3" y="603.0" width="1.2" height="11.0" fill="#2d2a28" /><rect x="789.1" y="606.4" width="5.0" height="5.0" fill="#2d2a28" /><rect x="806.9" y="608.0" width="5.0" height="5.0" fill="#2d2a28" /><rect x="824.7" y="606.9" width="5.0" height="5.0" fill="#2d2a28" /><rect x="788.7" y="605.0" width="6.0" height="7.0" fill="#2d2a28" /><rect x="806.4" y="629.8" width="12.0" height="20.0" fill="#a6abac" stroke="#2d2a28" stroke-width="1.6"/><rect x="823.7" y="632.3" width="5.0" height="8.0" fill="#a9a9a9" stroke="#2d2a28" stroke-width="0.9"/><rect x="787.1" y="650.3" width="42.6" height="8.5" fill="#938b8b" /><rect x="787.1" y="639.3" width="42.6" height="2.0" fill="#2d2a28" /><rect x="787.1" y="648.1" width="42.6" height="2.2" fill="#2d2a28" /><rect x="787.1" y="639.3" width="1.2" height="11.0" fill="#2d2a28" /><rect x="789.7" y="639.3" width="1.2" height="11.0" fill="#2d2a28" /><rect x="792.3" y="639.3" width="1.2" height="11.0" fill="#2d2a28" /><rect x="794.9" y="639.3" width="1.2" height="11.0" fill="#2d2a28" /><rect x="797.5" y="639.3" width="1.2" height="11.0" fill="#2d2a28" /><rect x="800.1" y="639.3" width="1.2" height="11.0" fill="#2d2a28" /><rect x="802.7" y="639.3" width="1.2" height="11.0" fill="#2d2a28" /><rect x="805.3" y="639.3" width="1.2" height="11.0" fill="#2d2a28" /><rect x="807.9" y="639.3" width="1.2" height="11.0" fill="#2d2a28" /><rect x="810.5" y="639.3" width="1.2" height="11.0" fill="#2d2a28" /><rect x="813.1" y="639.3" width="1.2" height="11.0" fill="#2d2a28" /><rect x="815.7" y="639.3" width="1.2" height="11.0" fill="#2d2a28" /><rect x="818.3" y="639.3" width="1.2" height="11.0" fill="#2d2a28" /><rect x="820.9" y="639.3" width="1.2" height="11.0" fill="#2d2a28" /><rect x="823.5" y="639.3" width="1.2" height="11.0" fill="#2d2a28" /><rect x="826.1" y="639.3" width="1.2" height="11.0" fill="#2d2a28" /><rect x="828.7" y="639.3" width="1.2" height="11.0" fill="#2d2a28" /><rect x="788.5" y="642.9" width="5.0" height="5.0" fill="#2d2a28" /><rect x="806.4" y="642.9" width="5.0" height="5.0" fill="#2d2a28" /><rect x="824.3" y="643.3" width="5.0" height="5.0" fill="#2d2a28" /><rect x="788.1" y="641.3" width="6.0" height="7.0" fill="#2d2a28" /><rect x="805.9" y="665.7" width="12.0" height="20.0" fill="#a6abac" stroke="#2d2a28" stroke-width="1.6"/><rect x="823.4" y="668.2" width="5.0" height="8.0" fill="#a9a9a9" stroke="#2d2a28" stroke-width="0.9"/><rect x="786.6" y="686.2" width="42.8" height="8.5" fill="#938b8b" /><rect x="786.6" y="675.2" width="42.8" height="2.0" fill="#2d2a28" /><rect x="786.6" y="684.0" width="42.8" height="2.2" fill="#2d2a28" /><rect x="786.6" y="675.2" width="1.2" height="11.0" fill="#2d2a28" /><rect x="789.2" y="675.2" width="1.2" height="11.0" fill="#2d2a28" /><rect x="791.8" y="675.2" width="1.2" height="11.0" fill="#2d2a28" /><rect x="794.4" y="675.2" width="1.2" height="11.0" fill="#2d2a28" /><rect x="797.0" y="675.2" width="1.2" height="11.0" fill="#2d2a28" /><rect x="799.6" y="675.2" width="1.2" height="11.0" fill="#2d2a28" /><rect x="802.2" y="675.2" width="1.2" height="11.0" fill="#2d2a28" /><rect x="804.8" y="675.2" width="1.2" height="11.0" fill="#2d2a28" /><rect x="807.4" y="675.2" width="1.2" height="11.0" fill="#2d2a28" /><rect x="810.0" y="675.2" width="1.2" height="11.0" fill="#2d2a28" /><rect x="812.6" y="675.2" width="1.2" height="11.0" fill="#2d2a28" /><rect x="815.2" y="675.2" width="1.2" height="11.0" fill="#2d2a28" /><rect x="817.8" y="675.2" width="1.2" height="11.0" fill="#2d2a28" /><rect x="820.4" y="675.2" width="1.2" height="11.0" fill="#2d2a28" /><rect x="823.0" y="675.2" width="1.2" height="11.0" fill="#2d2a28" /><rect x="825.6" y="675.2" width="1.2" height="11.0" fill="#2d2a28" /><rect x="828.2" y="675.2" width="1.2" height="11.0" fill="#2d2a28" /><rect x="788.0" y="680.1" width="5.0" height="5.0" fill="#2d2a28" /><rect x="806.0" y="678.8" width="5.0" height="5.0" fill="#2d2a28" /><rect x="824.0" y="679.6" width="5.0" height="5.0" fill="#2d2a28" /><rect x="787.6" y="677.2" width="6.0" height="7.0" fill="#2d2a28" /><rect x="805.4" y="701.5" width="12.0" height="20.0" fill="#a6abac" stroke="#2d2a28" stroke-width="1.6"/><rect x="823.0" y="704.0" width="5.0" height="8.0" fill="#a9a9a9" stroke="#2d2a28" stroke-width="0.9"/><rect x="786.0" y="722.0" width="43.0" height="8.5" fill="#938b8b" /><rect x="786.0" y="711.0" width="43.0" height="2.0" fill="#2d2a28" /><rect x="786.0" y="719.8" width="43.0" height="2.2" fill="#2d2a28" /><rect x="786.0" y="711.0" width="1.2" height="11.0" fill="#2d2a28" /><rect x="788.6" y="711.0" width="1.2" height="11.0" fill="#2d2a28" /><rect x="791.2" y="711.0" width="1.2" height="11.0" fill="#2d2a28" /><rect x="793.8" y="711.0" width="1.2" height="11.0" fill="#2d2a28" /><rect x="796.4" y="711.0" width="1.2" height="11.0" fill="#2d2a28" /><rect x="799.0" y="711.0" width="1.2" height="11.0" fill="#2d2a28" /><rect x="801.6" y="711.0" width="1.2" height="11.0" fill="#2d2a28" /><rect x="804.2" y="711.0" width="1.2" height="11.0" fill="#2d2a28" /><rect x="806.8" y="711.0" width="1.2" height="11.0" fill="#2d2a28" /><rect x="809.4" y="711.0" width="1.2" height="11.0" fill="#2d2a28" /><rect x="812.0" y="711.0" width="1.2" height="11.0" fill="#2d2a28" /><rect x="814.6" y="711.0" width="1.2" height="11.0" fill="#2d2a28" /><rect x="817.2" y="711.0" width="1.2" height="11.0" fill="#2d2a28" /><rect x="819.8" y="711.0" width="1.2" height="11.0" fill="#2d2a28" /><rect x="822.4" y="711.0" width="1.2" height="11.0" fill="#2d2a28" /><rect x="825.0" y="711.0" width="1.2" height="11.0" fill="#2d2a28" /><rect x="827.6" y="711.0" width="1.2" height="11.0" fill="#2d2a28" /><rect x="787.5" y="715.6" width="5.0" height="5.0" fill="#2d2a28" /><rect x="805.5" y="715.0" width="5.0" height="5.0" fill="#2d2a28" /><rect x="823.6" y="715.4" width="5.0" height="5.0" fill="#2d2a28" /><rect x="787.0" y="713.0" width="6.0" height="7.0" fill="#2d2a28" /><rect x="804.8" y="738.3" width="12.0" height="20.0" fill="#a6abac" stroke="#2d2a28" stroke-width="1.6"/><rect x="822.7" y="740.8" width="5.0" height="8.0" fill="#a9a9a9" stroke="#2d2a28" stroke-width="0.9"/><rect x="785.5" y="758.8" width="43.2" height="8.5" fill="#938b8b" /><rect x="785.5" y="747.8" width="43.2" height="2.0" fill="#2d2a28" /><rect x="785.5" y="756.6" width="43.2" height="2.2" fill="#2d2a28" /><rect x="785.5" y="747.8" width="1.2" height="11.0" fill="#2d2a28" /><rect x="788.1" y="747.8" width="1.2" height="11.0" fill="#2d2a28" /><rect x="790.7" y="747.8" width="1.2" height="11.0" fill="#2d2a28" /><rect x="793.3" y="747.8" width="1.2" height="11.0" fill="#2d2a28" /><rect x="795.9" y="747.8" width="1.2" height="11.0" fill="#2d2a28" /><rect x="798.5" y="747.8" width="1.2" height="11.0" fill="#2d2a28" /><rect x="801.1" y="747.8" width="1.2" height="11.0" fill="#2d2a28" /><rect x="803.7" y="747.8" width="1.2" height="11.0" fill="#2d2a28" /><rect x="806.3" y="747.8" width="1.2" height="11.0" fill="#2d2a28" /><rect x="808.9" y="747.8" width="1.2" height="11.0" fill="#2d2a28" /><rect x="811.5" y="747.8" width="1.2" height="11.0" fill="#2d2a28" /><rect x="814.1" y="747.8" width="1.2" height="11.0" fill="#2d2a28" /><rect x="816.7" y="747.8" width="1.2" height="11.0" fill="#2d2a28" /><rect x="819.3" y="747.8" width="1.2" height="11.0" fill="#2d2a28" /><rect x="821.9" y="747.8" width="1.2" height="11.0" fill="#2d2a28" /><rect x="824.5" y="747.8" width="1.2" height="11.0" fill="#2d2a28" /><rect x="827.1" y="747.8" width="1.2" height="11.0" fill="#2d2a28" /><rect x="786.9" y="751.2" width="5.0" height="5.0" fill="#2d2a28" /><rect x="805.1" y="751.2" width="5.0" height="5.0" fill="#2d2a28" /><rect x="823.2" y="751.5" width="5.0" height="5.0" fill="#2d2a28" /><rect x="786.5" y="749.8" width="6.0" height="7.0" fill="#2d2a28" /><rect x="804.3" y="775.1" width="12.0" height="20.0" fill="#a6abac" stroke="#2d2a28" stroke-width="1.6"/><rect x="822.3" y="777.6" width="5.0" height="8.0" fill="#a9a9a9" stroke="#2d2a28" stroke-width="0.9"/><rect x="784.9" y="795.6" width="43.4" height="8.5" fill="#938b8b" /><rect x="784.9" y="784.6" width="43.4" height="2.0" fill="#2d2a28" /><rect x="784.9" y="793.4" width="43.4" height="2.2" fill="#2d2a28" /><rect x="784.9" y="784.6" width="1.2" height="11.0" fill="#2d2a28" /><rect x="787.5" y="784.6" width="1.2" height="11.0" fill="#2d2a28" /><rect x="790.1" y="784.6" width="1.2" height="11.0" fill="#2d2a28" /><rect x="792.7" y="784.6" width="1.2" height="11.0" fill="#2d2a28" /><rect x="795.3" y="784.6" width="1.2" height="11.0" fill="#2d2a28" /><rect x="797.9" y="784.6" width="1.2" height="11.0" fill="#2d2a28" /><rect x="800.5" y="784.6" width="1.2" height="11.0" fill="#2d2a28" /><rect x="803.1" y="784.6" width="1.2" height="11.0" fill="#2d2a28" /><rect x="805.7" y="784.6" width="1.2" height="11.0" fill="#2d2a28" /><rect x="808.3" y="784.6" width="1.2" height="11.0" fill="#2d2a28" /><rect x="810.9" y="784.6" width="1.2" height="11.0" fill="#2d2a28" /><rect x="813.5" y="784.6" width="1.2" height="11.0" fill="#2d2a28" /><rect x="816.1" y="784.6" width="1.2" height="11.0" fill="#2d2a28" /><rect x="818.7" y="784.6" width="1.2" height="11.0" fill="#2d2a28" /><rect x="821.3" y="784.6" width="1.2" height="11.0" fill="#2d2a28" /><rect x="823.9" y="784.6" width="1.2" height="11.0" fill="#2d2a28" /><rect x="826.5" y="784.6" width="1.2" height="11.0" fill="#2d2a28" /><rect x="786.4" y="789.2" width="5.0" height="5.0" fill="#2d2a28" /><rect x="804.6" y="788.7" width="5.0" height="5.0" fill="#2d2a28" /><rect x="822.8" y="788.5" width="5.0" height="5.0" fill="#2d2a28" /><rect x="785.9" y="786.6" width="6.0" height="7.0" fill="#2d2a28" /><rect x="803.8" y="812.3" width="12.0" height="20.0" fill="#a6abac" stroke="#2d2a28" stroke-width="1.6"/><rect x="821.9" y="814.8" width="5.0" height="8.0" fill="#a9a9a9" stroke="#2d2a28" stroke-width="0.9"/><rect x="784.4" y="832.8" width="43.5" height="8.5" fill="#938b8b" /><rect x="784.4" y="821.8" width="43.5" height="2.0" fill="#2d2a28" /><rect x="784.4" y="830.6" width="43.5" height="2.2" fill="#2d2a28" /><rect x="784.4" y="821.8" width="1.2" height="11.0" fill="#2d2a28" /><rect x="787.0" y="821.8" width="1.2" height="11.0" fill="#2d2a28" /><rect x="789.6" y="821.8" width="1.2" height="11.0" fill="#2d2a28" /><rect x="792.2" y="821.8" width="1.2" height="11.0" fill="#2d2a28" /><rect x="794.8" y="821.8" width="1.2" height="11.0" fill="#2d2a28" /><rect x="797.4" y="821.8" width="1.2" height="11.0" fill="#2d2a28" /><rect x="800.0" y="821.8" width="1.2" height="11.0" fill="#2d2a28" /><rect x="802.6" y="821.8" width="1.2" height="11.0" fill="#2d2a28" /><rect x="805.2" y="821.8" width="1.2" height="11.0" fill="#2d2a28" /><rect x="807.8" y="821.8" width="1.2" height="11.0" fill="#2d2a28" /><rect x="810.4" y="821.8" width="1.2" height="11.0" fill="#2d2a28" /><rect x="813.0" y="821.8" width="1.2" height="11.0" fill="#2d2a28" /><rect x="815.6" y="821.8" width="1.2" height="11.0" fill="#2d2a28" /><rect x="818.2" y="821.8" width="1.2" height="11.0" fill="#2d2a28" /><rect x="820.8" y="821.8" width="1.2" height="11.0" fill="#2d2a28" /><rect x="823.4" y="821.8" width="1.2" height="11.0" fill="#2d2a28" /><rect x="826.0" y="821.8" width="1.2" height="11.0" fill="#2d2a28" /><rect x="785.9" y="826.3" width="5.0" height="5.0" fill="#2d2a28" /><rect x="804.1" y="826.0" width="5.0" height="5.0" fill="#2d2a28" /><rect x="822.4" y="825.7" width="5.0" height="5.0" fill="#2d2a28" /><rect x="785.4" y="823.8" width="6.0" height="7.0" fill="#2d2a28" /><rect x="803.3" y="849.6" width="12.0" height="20.0" fill="#a6abac" stroke="#2d2a28" stroke-width="1.6"/><rect x="821.5" y="852.1" width="5.0" height="8.0" fill="#a9a9a9" stroke="#2d2a28" stroke-width="0.9"/><rect x="783.8" y="870.1" width="43.7" height="8.5" fill="#938b8b" /><rect x="783.8" y="859.1" width="43.7" height="2.0" fill="#2d2a28" /><rect x="783.8" y="867.9" width="43.7" height="2.2" fill="#2d2a28" /><rect x="783.8" y="859.1" width="1.2" height="11.0" fill="#2d2a28" /><rect x="786.4" y="859.1" width="1.2" height="11.0" fill="#2d2a28" /><rect x="789.0" y="859.1" width="1.2" height="11.0" fill="#2d2a28" /><rect x="791.6" y="859.1" width="1.2" height="11.0" fill="#2d2a28" /><rect x="794.2" y="859.1" width="1.2" height="11.0" fill="#2d2a28" /><rect x="796.8" y="859.1" width="1.2" height="11.0" fill="#2d2a28" /><rect x="799.4" y="859.1" width="1.2" height="11.0" fill="#2d2a28" /><rect x="802.0" y="859.1" width="1.2" height="11.0" fill="#2d2a28" /><rect x="804.6" y="859.1" width="1.2" height="11.0" fill="#2d2a28" /><rect x="807.2" y="859.1" width="1.2" height="11.0" fill="#2d2a28" /><rect x="809.8" y="859.1" width="1.2" height="11.0" fill="#2d2a28" /><rect x="812.4" y="859.1" width="1.2" height="11.0" fill="#2d2a28" /><rect x="815.0" y="859.1" width="1.2" height="11.0" fill="#2d2a28" /><rect x="817.6" y="859.1" width="1.2" height="11.0" fill="#2d2a28" /><rect x="820.2" y="859.1" width="1.2" height="11.0" fill="#2d2a28" /><rect x="822.8" y="859.1" width="1.2" height="11.0" fill="#2d2a28" /><rect x="825.4" y="859.1" width="1.2" height="11.0" fill="#2d2a28" /><rect x="785.3" y="863.9" width="5.0" height="5.0" fill="#2d2a28" /><rect x="803.7" y="863.8" width="5.0" height="5.0" fill="#2d2a28" /><rect x="822.0" y="862.8" width="5.0" height="5.0" fill="#2d2a28" /><rect x="784.8" y="861.1" width="6.0" height="7.0" fill="#2d2a28" /><rect x="790.0" y="877.0" width="37.0" height="30.0" fill="#aea1a1" /><rect x="790.0" y="906.0" width="37.0" height="6.0" fill="#2d2a28" /><rect x="1075.0" y="354.0" width="23.0" height="33.0" fill="#ab9f9f" /><polygon points="1075,387 1101,387 1113,878 1085,878" fill="#ab9f9f"/><rect x="1076.0" y="342.0" width="22.0" height="3.5" fill="#2d2a28" /><rect x="1076.0" y="345.5" width="22.0" height="4.5" fill="#aea1a1" /><path d="M1076 350 H1105 Q1109 352 1105 354.5 H1076 Z" fill="#1f1d1c"/><rect x="1079.7" y="357.5" width="11.0" height="19.0" fill="#a6abac" stroke="#2d2a28" stroke-width="1.6"/><rect x="1075.9" y="377.0" width="33.9" height="8.5" fill="#938b8b" /><rect x="1075.9" y="366.0" width="33.9" height="2.0" fill="#2d2a28" /><rect x="1075.9" y="374.8" width="33.9" height="2.2" fill="#2d2a28" /><rect x="1075.9" y="366.0" width="1.2" height="11.0" fill="#2d2a28" /><rect x="1078.5" y="366.0" width="1.2" height="11.0" fill="#2d2a28" /><rect x="1081.1" y="366.0" width="1.2" height="11.0" fill="#2d2a28" /><rect x="1083.7" y="366.0" width="1.2" height="11.0" fill="#2d2a28" /><rect x="1086.3" y="366.0" width="1.2" height="11.0" fill="#2d2a28" /><rect x="1088.9" y="366.0" width="1.2" height="11.0" fill="#2d2a28" /><rect x="1091.5" y="366.0" width="1.2" height="11.0" fill="#2d2a28" /><rect x="1094.1" y="366.0" width="1.2" height="11.0" fill="#2d2a28" /><rect x="1096.7" y="366.0" width="1.2" height="11.0" fill="#2d2a28" /><rect x="1099.3" y="366.0" width="1.2" height="11.0" fill="#2d2a28" /><rect x="1101.9" y="366.0" width="1.2" height="11.0" fill="#2d2a28" /><rect x="1104.5" y="366.0" width="1.2" height="11.0" fill="#2d2a28" /><rect x="1107.1" y="366.0" width="1.2" height="11.0" fill="#2d2a28" /><rect x="1076.6" y="370.5" width="5.0" height="5.0" fill="#2d2a28" /><rect x="1105.1" y="370.4" width="5.0" height="5.0" fill="#2d2a28" /><rect x="1100.8" y="367.0" width="8.0" height="9.0" fill="#2d2a28" /><rect x="1080.1" y="390.5" width="11.0" height="19.0" fill="#a6abac" stroke="#2d2a28" stroke-width="1.6"/><rect x="1076.4" y="410.0" width="33.9" height="8.5" fill="#938b8b" /><rect x="1076.4" y="399.0" width="33.9" height="2.0" fill="#2d2a28" /><rect x="1076.4" y="407.8" width="33.9" height="2.2" fill="#2d2a28" /><rect x="1076.4" y="399.0" width="1.2" height="11.0" fill="#2d2a28" /><rect x="1079.0" y="399.0" width="1.2" height="11.0" fill="#2d2a28" /><rect x="1081.6" y="399.0" width="1.2" height="11.0" fill="#2d2a28" /><rect x="1084.2" y="399.0" width="1.2" height="11.0" fill="#2d2a28" /><rect x="1086.8" y="399.0" width="1.2" height="11.0" fill="#2d2a28" /><rect x="1089.4" y="399.0" width="1.2" height="11.0" fill="#2d2a28" /><rect x="1092.0" y="399.0" width="1.2" height="11.0" fill="#2d2a28" /><rect x="1094.6" y="399.0" width="1.2" height="11.0" fill="#2d2a28" /><rect x="1097.2" y="399.0" width="1.2" height="11.0" fill="#2d2a28" /><rect x="1099.8" y="399.0" width="1.2" height="11.0" fill="#2d2a28" /><rect x="1102.4" y="399.0" width="1.2" height="11.0" fill="#2d2a28" /><rect x="1105.0" y="399.0" width="1.2" height="11.0" fill="#2d2a28" /><rect x="1107.6" y="399.0" width="1.2" height="11.0" fill="#2d2a28" /><rect x="1077.1" y="404.1" width="5.0" height="5.0" fill="#2d2a28" /><rect x="1105.6" y="403.8" width="5.0" height="5.0" fill="#2d2a28" /><rect x="1101.3" y="400.0" width="8.0" height="9.0" fill="#2d2a28" /><rect x="1080.6" y="424.5" width="11.0" height="19.0" fill="#a6abac" stroke="#2d2a28" stroke-width="1.6"/><rect x="1077.0" y="444.0" width="33.8" height="8.5" fill="#938b8b" /><rect x="1077.0" y="433.0" width="33.8" height="2.0" fill="#2d2a28" /><rect x="1077.0" y="441.8" width="33.8" height="2.2" fill="#2d2a28" /><rect x="1077.0" y="433.0" width="1.2" height="11.0" fill="#2d2a28" /><rect x="1079.6" y="433.0" width="1.2" height="11.0" fill="#2d2a28" /><rect x="1082.2" y="433.0" width="1.2" height="11.0" fill="#2d2a28" /><rect x="1084.8" y="433.0" width="1.2" height="11.0" fill="#2d2a28" /><rect x="1087.4" y="433.0" width="1.2" height="11.0" fill="#2d2a28" /><rect x="1090.0" y="433.0" width="1.2" height="11.0" fill="#2d2a28" /><rect x="1092.6" y="433.0" width="1.2" height="11.0" fill="#2d2a28" /><rect x="1095.2" y="433.0" width="1.2" height="11.0" fill="#2d2a28" /><rect x="1097.8" y="433.0" width="1.2" height="11.0" fill="#2d2a28" /><rect x="1100.4" y="433.0" width="1.2" height="11.0" fill="#2d2a28" /><rect x="1103.0" y="433.0" width="1.2" height="11.0" fill="#2d2a28" /><rect x="1105.6" y="433.0" width="1.2" height="11.0" fill="#2d2a28" /><rect x="1108.2" y="433.0" width="1.2" height="11.0" fill="#2d2a28" /><rect x="1077.7" y="436.9" width="5.0" height="5.0" fill="#2d2a28" /><rect x="1106.1" y="438.3" width="5.0" height="5.0" fill="#2d2a28" /><rect x="1101.8" y="434.0" width="8.0" height="9.0" fill="#2d2a28" /><rect x="1081.0" y="458.4" width="11.0" height="19.0" fill="#a6abac" stroke="#2d2a28" stroke-width="1.6"/><rect x="1077.6" y="477.9" width="33.7" height="8.5" fill="#938b8b" /><rect x="1077.6" y="466.9" width="33.7" height="2.0" fill="#2d2a28" /><rect x="1077.6" y="475.7" width="33.7" height="2.2" fill="#2d2a28" /><rect x="1077.6" y="466.9" width="1.2" height="11.0" fill="#2d2a28" /><rect x="1080.2" y="466.9" width="1.2" height="11.0" fill="#2d2a28" /><rect x="1082.8" y="466.9" width="1.2" height="11.0" fill="#2d2a28" /><rect x="1085.4" y="466.9" width="1.2" height="11.0" fill="#2d2a28" /><rect x="1088.0" y="466.9" width="1.2" height="11.0" fill="#2d2a28" /><rect x="1090.6" y="466.9" width="1.2" height="11.0" fill="#2d2a28" /><rect x="1093.2" y="466.9" width="1.2" height="11.0" fill="#2d2a28" /><rect x="1095.8" y="466.9" width="1.2" height="11.0" fill="#2d2a28" /><rect x="1098.4" y="466.9" width="1.2" height="11.0" fill="#2d2a28" /><rect x="1101.0" y="466.9" width="1.2" height="11.0" fill="#2d2a28" /><rect x="1103.6" y="466.9" width="1.2" height="11.0" fill="#2d2a28" /><rect x="1106.2" y="466.9" width="1.2" height="11.0" fill="#2d2a28" /><rect x="1108.8" y="466.9" width="1.2" height="11.0" fill="#2d2a28" /><rect x="1078.3" y="470.5" width="5.0" height="5.0" fill="#2d2a28" /><rect x="1106.6" y="471.1" width="5.0" height="5.0" fill="#2d2a28" /><rect x="1102.3" y="467.9" width="8.0" height="9.0" fill="#2d2a28" /><rect x="1081.5" y="492.4" width="11.0" height="19.0" fill="#a6abac" stroke="#2d2a28" stroke-width="1.6"/><rect x="1078.1" y="511.9" width="33.7" height="8.5" fill="#938b8b" /><rect x="1078.1" y="500.9" width="33.7" height="2.0" fill="#2d2a28" /><rect x="1078.1" y="509.7" width="33.7" height="2.2" fill="#2d2a28" /><rect x="1078.1" y="500.9" width="1.2" height="11.0" fill="#2d2a28" /><rect x="1080.7" y="500.9" width="1.2" height="11.0" fill="#2d2a28" /><rect x="1083.3" y="500.9" width="1.2" height="11.0" fill="#2d2a28" /><rect x="1085.9" y="500.9" width="1.2" height="11.0" fill="#2d2a28" /><rect x="1088.5" y="500.9" width="1.2" height="11.0" fill="#2d2a28" /><rect x="1091.1" y="500.9" width="1.2" height="11.0" fill="#2d2a28" /><rect x="1093.7" y="500.9" width="1.2" height="11.0" fill="#2d2a28" /><rect x="1096.3" y="500.9" width="1.2" height="11.0" fill="#2d2a28" /><rect x="1098.9" y="500.9" width="1.2" height="11.0" fill="#2d2a28" /><rect x="1101.5" y="500.9" width="1.2" height="11.0" fill="#2d2a28" /><rect x="1104.1" y="500.9" width="1.2" height="11.0" fill="#2d2a28" /><rect x="1106.7" y="500.9" width="1.2" height="11.0" fill="#2d2a28" /><rect x="1109.3" y="500.9" width="1.2" height="11.0" fill="#2d2a28" /><rect x="1078.8" y="505.7" width="5.0" height="5.0" fill="#2d2a28" /><rect x="1107.1" y="504.5" width="5.0" height="5.0" fill="#2d2a28" /><rect x="1102.8" y="501.9" width="8.0" height="9.0" fill="#2d2a28" /><rect x="1082.0" y="527.3" width="11.0" height="19.0" fill="#a6abac" stroke="#2d2a28" stroke-width="1.6"/><rect x="1078.7" y="546.8" width="33.6" height="8.5" fill="#938b8b" /><rect x="1078.7" y="535.8" width="33.6" height="2.0" fill="#2d2a28" /><rect x="1078.7" y="544.6" width="33.6" height="2.2" fill="#2d2a28" /><rect x="1078.7" y="535.8" width="1.2" height="11.0" fill="#2d2a28" /><rect x="1081.3" y="535.8" width="1.2" height="11.0" fill="#2d2a28" /><rect x="1083.9" y="535.8" width="1.2" height="11.0" fill="#2d2a28" /><rect x="1086.5" y="535.8" width="1.2" height="11.0" fill="#2d2a28" /><rect x="1089.1" y="535.8" width="1.2" height="11.0" fill="#2d2a28" /><rect x="1091.7" y="535.8" width="1.2" height="11.0" fill="#2d2a28" /><rect x="1094.3" y="535.8" width="1.2" height="11.0" fill="#2d2a28" /><rect x="1096.9" y="535.8" width="1.2" height="11.0" fill="#2d2a28" /><rect x="1099.5" y="535.8" width="1.2" height="11.0" fill="#2d2a28" /><rect x="1102.1" y="535.8" width="1.2" height="11.0" fill="#2d2a28" /><rect x="1104.7" y="535.8" width="1.2" height="11.0" fill="#2d2a28" /><rect x="1107.3" y="535.8" width="1.2" height="11.0" fill="#2d2a28" /><rect x="1109.9" y="535.8" width="1.2" height="11.0" fill="#2d2a28" /><rect x="1079.4" y="540.1" width="5.0" height="5.0" fill="#2d2a28" /><rect x="1107.6" y="539.2" width="5.0" height="5.0" fill="#2d2a28" /><rect x="1103.3" y="536.8" width="8.0" height="9.0" fill="#2d2a28" /><rect x="1082.4" y="561.2" width="11.0" height="19.0" fill="#a6abac" stroke="#2d2a28" stroke-width="1.6"/><rect x="1079.3" y="580.7" width="33.6" height="8.5" fill="#938b8b" /><rect x="1079.3" y="569.7" width="33.6" height="2.0" fill="#2d2a28" /><rect x="1079.3" y="578.5" width="33.6" height="2.2" fill="#2d2a28" /><rect x="1079.3" y="569.7" width="1.2" height="11.0" fill="#2d2a28" /><rect x="1081.9" y="569.7" width="1.2" height="11.0" fill="#2d2a28" /><rect x="1084.5" y="569.7" width="1.2" height="11.0" fill="#2d2a28" /><rect x="1087.1" y="569.7" width="1.2" height="11.0" fill="#2d2a28" /><rect x="1089.7" y="569.7" width="1.2" height="11.0" fill="#2d2a28" /><rect x="1092.3" y="569.7" width="1.2" height="11.0" fill="#2d2a28" /><rect x="1094.9" y="569.7" width="1.2" height="11.0" fill="#2d2a28" /><rect x="1097.5" y="569.7" width="1.2" height="11.0" fill="#2d2a28" /><rect x="1100.1" y="569.7" width="1.2" height="11.0" fill="#2d2a28" /><rect x="1102.7" y="569.7" width="1.2" height="11.0" fill="#2d2a28" /><rect x="1105.3" y="569.7" width="1.2" height="11.0" fill="#2d2a28" /><rect x="1107.9" y="569.7" width="1.2" height="11.0" fill="#2d2a28" /><rect x="1110.5" y="569.7" width="1.2" height="11.0" fill="#2d2a28" /><rect x="1080.0" y="574.4" width="5.0" height="5.0" fill="#2d2a28" /><rect x="1108.2" y="574.6" width="5.0" height="5.0" fill="#2d2a28" /><rect x="1103.8" y="570.7" width="8.0" height="9.0" fill="#2d2a28" /><rect x="1082.9" y="597.5" width="11.0" height="19.0" fill="#a6abac" stroke="#2d2a28" stroke-width="1.6"/><rect x="1079.9" y="617.0" width="33.5" height="8.5" fill="#938b8b" /><rect x="1079.9" y="606.0" width="33.5" height="2.0" fill="#2d2a28" /><rect x="1079.9" y="614.8" width="33.5" height="2.2" fill="#2d2a28" /><rect x="1079.9" y="606.0" width="1.2" height="11.0" fill="#2d2a28" /><rect x="1082.5" y="606.0" width="1.2" height="11.0" fill="#2d2a28" /><rect x="1085.1" y="606.0" width="1.2" height="11.0" fill="#2d2a28" /><rect x="1087.7" y="606.0" width="1.2" height="11.0" fill="#2d2a28" /><rect x="1090.3" y="606.0" width="1.2" height="11.0" fill="#2d2a28" /><rect x="1092.9" y="606.0" width="1.2" height="11.0" fill="#2d2a28" /><rect x="1095.5" y="606.0" width="1.2" height="11.0" fill="#2d2a28" /><rect x="1098.1" y="606.0" width="1.2" height="11.0" fill="#2d2a28" /><rect x="1100.7" y="606.0" width="1.2" height="11.0" fill="#2d2a28" /><rect x="1103.3" y="606.0" width="1.2" height="11.0" fill="#2d2a28" /><rect x="1105.9" y="606.0" width="1.2" height="11.0" fill="#2d2a28" /><rect x="1108.5" y="606.0" width="1.2" height="11.0" fill="#2d2a28" /><rect x="1111.1" y="606.0" width="1.2" height="11.0" fill="#2d2a28" /><rect x="1080.6" y="610.5" width="5.0" height="5.0" fill="#2d2a28" /><rect x="1108.7" y="611.1" width="5.0" height="5.0" fill="#2d2a28" /><rect x="1104.4" y="607.0" width="8.0" height="9.0" fill="#2d2a28" /><rect x="1083.4" y="633.8" width="11.0" height="19.0" fill="#a6abac" stroke="#2d2a28" stroke-width="1.6"/><rect x="1080.5" y="653.3" width="33.5" height="8.5" fill="#938b8b" /><rect x="1080.5" y="642.3" width="33.5" height="2.0" fill="#2d2a28" /><rect x="1080.5" y="651.1" width="33.5" height="2.2" fill="#2d2a28" /><rect x="1080.5" y="642.3" width="1.2" height="11.0" fill="#2d2a28" /><rect x="1083.1" y="642.3" width="1.2" height="11.0" fill="#2d2a28" /><rect x="1085.7" y="642.3" width="1.2" height="11.0" fill="#2d2a28" /><rect x="1088.3" y="642.3" width="1.2" height="11.0" fill="#2d2a28" /><rect x="1090.9" y="642.3" width="1.2" height="11.0" fill="#2d2a28" /><rect x="1093.5" y="642.3" width="1.2" height="11.0" fill="#2d2a28" /><rect x="1096.1" y="642.3" width="1.2" height="11.0" fill="#2d2a28" /><rect x="1098.7" y="642.3" width="1.2" height="11.0" fill="#2d2a28" /><rect x="1101.3" y="642.3" width="1.2" height="11.0" fill="#2d2a28" /><rect x="1103.9" y="642.3" width="1.2" height="11.0" fill="#2d2a28" /><rect x="1106.5" y="642.3" width="1.2" height="11.0" fill="#2d2a28" /><rect x="1109.1" y="642.3" width="1.2" height="11.0" fill="#2d2a28" /><rect x="1111.7" y="642.3" width="1.2" height="11.0" fill="#2d2a28" /><rect x="1081.2" y="646.3" width="5.0" height="5.0" fill="#2d2a28" /><rect x="1109.3" y="647.0" width="5.0" height="5.0" fill="#2d2a28" /><rect x="1104.9" y="643.3" width="8.0" height="9.0" fill="#2d2a28" /><rect x="1083.9" y="669.7" width="11.0" height="19.0" fill="#a6abac" stroke="#2d2a28" stroke-width="1.6"/><rect x="1081.1" y="689.2" width="33.4" height="8.5" fill="#938b8b" /><rect x="1081.1" y="678.2" width="33.4" height="2.0" fill="#2d2a28" /><rect x="1081.1" y="687.0" width="33.4" height="2.2" fill="#2d2a28" /><rect x="1081.1" y="678.2" width="1.2" height="11.0" fill="#2d2a28" /><rect x="1083.7" y="678.2" width="1.2" height="11.0" fill="#2d2a28" /><rect x="1086.3" y="678.2" width="1.2" height="11.0" fill="#2d2a28" /><rect x="1088.9" y="678.2" width="1.2" height="11.0" fill="#2d2a28" /><rect x="1091.5" y="678.2" width="1.2" height="11.0" fill="#2d2a28" /><rect x="1094.1" y="678.2" width="1.2" height="11.0" fill="#2d2a28" /><rect x="1096.7" y="678.2" width="1.2" height="11.0" fill="#2d2a28" /><rect x="1099.3" y="678.2" width="1.2" height="11.0" fill="#2d2a28" /><rect x="1101.9" y="678.2" width="1.2" height="11.0" fill="#2d2a28" /><rect x="1104.5" y="678.2" width="1.2" height="11.0" fill="#2d2a28" /><rect x="1107.1" y="678.2" width="1.2" height="11.0" fill="#2d2a28" /><rect x="1109.7" y="678.2" width="1.2" height="11.0" fill="#2d2a28" /><rect x="1112.3" y="678.2" width="1.2" height="11.0" fill="#2d2a28" /><rect x="1081.8" y="682.7" width="5.0" height="5.0" fill="#2d2a28" /><rect x="1109.8" y="682.6" width="5.0" height="5.0" fill="#2d2a28" /><rect x="1105.5" y="679.2" width="8.0" height="9.0" fill="#2d2a28" /><rect x="1084.3" y="705.5" width="11.0" height="19.0" fill="#a6abac" stroke="#2d2a28" stroke-width="1.6"/><rect x="1081.7" y="725.0" width="33.3" height="8.5" fill="#938b8b" /><rect x="1081.7" y="714.0" width="33.3" height="2.0" fill="#2d2a28" /><rect x="1081.7" y="722.8" width="33.3" height="2.2" fill="#2d2a28" /><rect x="1081.7" y="714.0" width="1.2" height="11.0" fill="#2d2a28" /><rect x="1084.3" y="714.0" width="1.2" height="11.0" fill="#2d2a28" /><rect x="1086.9" y="714.0" width="1.2" height="11.0" fill="#2d2a28" /><rect x="1089.5" y="714.0" width="1.2" height="11.0" fill="#2d2a28" /><rect x="1092.1" y="714.0" width="1.2" height="11.0" fill="#2d2a28" /><rect x="1094.7" y="714.0" width="1.2" height="11.0" fill="#2d2a28" /><rect x="1097.3" y="714.0" width="1.2" height="11.0" fill="#2d2a28" /><rect x="1099.9" y="714.0" width="1.2" height="11.0" fill="#2d2a28" /><rect x="1102.5" y="714.0" width="1.2" height="11.0" fill="#2d2a28" /><rect x="1105.1" y="714.0" width="1.2" height="11.0" fill="#2d2a28" /><rect x="1107.7" y="714.0" width="1.2" height="11.0" fill="#2d2a28" /><rect x="1110.3" y="714.0" width="1.2" height="11.0" fill="#2d2a28" /><rect x="1112.9" y="714.0" width="1.2" height="11.0" fill="#2d2a28" /><rect x="1082.3" y="718.2" width="5.0" height="5.0" fill="#2d2a28" /><rect x="1110.3" y="719.0" width="5.0" height="5.0" fill="#2d2a28" /><rect x="1106.0" y="715.0" width="8.0" height="9.0" fill="#2d2a28" /><rect x="1084.8" y="742.3" width="11.0" height="19.0" fill="#a6abac" stroke="#2d2a28" stroke-width="1.6"/><rect x="1082.3" y="761.8" width="33.3" height="8.5" fill="#938b8b" /><rect x="1082.3" y="750.8" width="33.3" height="2.0" fill="#2d2a28" /><rect x="1082.3" y="759.6" width="33.3" height="2.2" fill="#2d2a28" /><rect x="1082.3" y="750.8" width="1.2" height="11.0" fill="#2d2a28" /><rect x="1084.9" y="750.8" width="1.2" height="11.0" fill="#2d2a28" /><rect x="1087.5" y="750.8" width="1.2" height="11.0" fill="#2d2a28" /><rect x="1090.1" y="750.8" width="1.2" height="11.0" fill="#2d2a28" /><rect x="1092.7" y="750.8" width="1.2" height="11.0" fill="#2d2a28" /><rect x="1095.3" y="750.8" width="1.2" height="11.0" fill="#2d2a28" /><rect x="1097.9" y="750.8" width="1.2" height="11.0" fill="#2d2a28" /><rect x="1100.5" y="750.8" width="1.2" height="11.0" fill="#2d2a28" /><rect x="1103.1" y="750.8" width="1.2" height="11.0" fill="#2d2a28" /><rect x="1105.7" y="750.8" width="1.2" height="11.0" fill="#2d2a28" /><rect x="1108.3" y="750.8" width="1.2" height="11.0" fill="#2d2a28" /><rect x="1110.9" y="750.8" width="1.2" height="11.0" fill="#2d2a28" /><rect x="1113.5" y="750.8" width="1.2" height="11.0" fill="#2d2a28" /><rect x="1083.0" y="756.0" width="5.0" height="5.0" fill="#2d2a28" /><rect x="1110.9" y="755.0" width="5.0" height="5.0" fill="#2d2a28" /><rect x="1106.6" y="751.8" width="8.0" height="9.0" fill="#2d2a28" /><rect x="1085.3" y="779.1" width="11.0" height="19.0" fill="#a6abac" stroke="#2d2a28" stroke-width="1.6"/><rect x="1082.9" y="798.6" width="33.2" height="8.5" fill="#938b8b" /><rect x="1082.9" y="787.6" width="33.2" height="2.0" fill="#2d2a28" /><rect x="1082.9" y="796.4" width="33.2" height="2.2" fill="#2d2a28" /><rect x="1082.9" y="787.6" width="1.2" height="11.0" fill="#2d2a28" /><rect x="1085.5" y="787.6" width="1.2" height="11.0" fill="#2d2a28" /><rect x="1088.1" y="787.6" width="1.2" height="11.0" fill="#2d2a28" /><rect x="1090.7" y="787.6" width="1.2" height="11.0" fill="#2d2a28" /><rect x="1093.3" y="787.6" width="1.2" height="11.0" fill="#2d2a28" /><rect x="1095.9" y="787.6" width="1.2" height="11.0" fill="#2d2a28" /><rect x="1098.5" y="787.6" width="1.2" height="11.0" fill="#2d2a28" /><rect x="1101.1" y="787.6" width="1.2" height="11.0" fill="#2d2a28" /><rect x="1103.7" y="787.6" width="1.2" height="11.0" fill="#2d2a28" /><rect x="1106.3" y="787.6" width="1.2" height="11.0" fill="#2d2a28" /><rect x="1108.9" y="787.6" width="1.2" height="11.0" fill="#2d2a28" /><rect x="1111.5" y="787.6" width="1.2" height="11.0" fill="#2d2a28" /><rect x="1114.1" y="787.6" width="1.2" height="11.0" fill="#2d2a28" /><rect x="1083.6" y="792.2" width="5.0" height="5.0" fill="#2d2a28" /><rect x="1111.5" y="791.0" width="5.0" height="5.0" fill="#2d2a28" /><rect x="1107.1" y="788.6" width="8.0" height="9.0" fill="#2d2a28" /><rect x="1085.8" y="816.3" width="11.0" height="19.0" fill="#a6abac" stroke="#2d2a28" stroke-width="1.6"/><rect x="1083.5" y="835.8" width="33.1" height="8.5" fill="#938b8b" /><rect x="1083.5" y="824.8" width="33.1" height="2.0" fill="#2d2a28" /><rect x="1083.5" y="833.6" width="33.1" height="2.2" fill="#2d2a28" /><rect x="1083.5" y="824.8" width="1.2" height="11.0" fill="#2d2a28" /><rect x="1086.1" y="824.8" width="1.2" height="11.0" fill="#2d2a28" /><rect x="1088.7" y="824.8" width="1.2" height="11.0" fill="#2d2a28" /><rect x="1091.3" y="824.8" width="1.2" height="11.0" fill="#2d2a28" /><rect x="1093.9" y="824.8" width="1.2" height="11.0" fill="#2d2a28" /><rect x="1096.5" y="824.8" width="1.2" height="11.0" fill="#2d2a28" /><rect x="1099.1" y="824.8" width="1.2" height="11.0" fill="#2d2a28" /><rect x="1101.7" y="824.8" width="1.2" height="11.0" fill="#2d2a28" /><rect x="1104.3" y="824.8" width="1.2" height="11.0" fill="#2d2a28" /><rect x="1106.9" y="824.8" width="1.2" height="11.0" fill="#2d2a28" /><rect x="1109.5" y="824.8" width="1.2" height="11.0" fill="#2d2a28" /><rect x="1112.1" y="824.8" width="1.2" height="11.0" fill="#2d2a28" /><rect x="1114.7" y="824.8" width="1.2" height="11.0" fill="#2d2a28" /><rect x="1084.2" y="829.5" width="5.0" height="5.0" fill="#2d2a28" /><rect x="1112.0" y="829.4" width="5.0" height="5.0" fill="#2d2a28" /><rect x="1107.7" y="825.8" width="8.0" height="9.0" fill="#2d2a28" /><rect x="1086.3" y="853.6" width="11.0" height="19.0" fill="#a6abac" stroke="#2d2a28" stroke-width="1.6"/><rect x="1084.1" y="873.1" width="33.1" height="8.5" fill="#938b8b" /><rect x="1084.1" y="862.1" width="33.1" height="2.0" fill="#2d2a28" /><rect x="1084.1" y="870.9" width="33.1" height="2.2" fill="#2d2a28" /><rect x="1084.1" y="862.1" width="1.2" height="11.0" fill="#2d2a28" /><rect x="1086.7" y="862.1" width="1.2" height="11.0" fill="#2d2a28" /><rect x="1089.3" y="862.1" width="1.2" height="11.0" fill="#2d2a28" /><rect x="1091.9" y="862.1" width="1.2" height="11.0" fill="#2d2a28" /><rect x="1094.5" y="862.1" width="1.2" height="11.0" fill="#2d2a28" /><rect x="1097.1" y="862.1" width="1.2" height="11.0" fill="#2d2a28" /><rect x="1099.7" y="862.1" width="1.2" height="11.0" fill="#2d2a28" /><rect x="1102.3" y="862.1" width="1.2" height="11.0" fill="#2d2a28" /><rect x="1104.9" y="862.1" width="1.2" height="11.0" fill="#2d2a28" /><rect x="1107.5" y="862.1" width="1.2" height="11.0" fill="#2d2a28" /><rect x="1110.1" y="862.1" width="1.2" height="11.0" fill="#2d2a28" /><rect x="1112.7" y="862.1" width="1.2" height="11.0" fill="#2d2a28" /><rect x="1115.3" y="862.1" width="1.2" height="11.0" fill="#2d2a28" /><rect x="1084.8" y="867.3" width="5.0" height="5.0" fill="#2d2a28" /><rect x="1112.6" y="867.0" width="5.0" height="5.0" fill="#2d2a28" /><rect x="1108.2" y="863.1" width="8.0" height="9.0" fill="#2d2a28" /><rect x="1085.0" y="877.0" width="27.0" height="28.0" fill="#aea1a1" /><rect x="1085.0" y="905.0" width="27.0" height="5.0" fill="#2d2a28" /><rect x="836.0" y="312.0" width="87.0" height="4.0" fill="#2d2a28" /><rect x="836.0" y="316.0" width="87.0" height="7.5" fill="#aea1a1" /><rect x="836.0" y="323.5" width="87.0" height="2.0" fill="#2d2a28" /><polygon points="833,325 923,325 923,924 827,924" fill="#aea1a1"/><rect x="831.7" y="357.2" width="91.3" height="3.6" fill="#2d2a28" /><rect x="847.0" y="333.5" width="24.0" height="17.0" fill="#a6abac" /><path d="M849.0 339.4 L859.0 346.2 L869.0 339.4" stroke="#c8875a" stroke-width="1" fill="none" opacity="0.8"/><rect x="848.0" y="334.5" width="22.0" height="3.4" fill="#8f9a9c" /><rect x="847.6" y="334.1" width="22.8" height="15.8" fill="none" stroke="#2d2a28" stroke-width="1.3"/><path d="M847.0 337.8 H871.0" stroke="#2d2a28" stroke-width="1"/><path d="M859.0 333.5 V350.5" stroke="#2d2a28" stroke-width="1"/><rect x="849.0" y="346.9" width="2.0" height="3.0" fill="#2d2a28" /><rect x="853.0" y="346.7" width="2.0" height="3.0" fill="#2d2a28" /><rect x="857.0" y="346.2" width="2.0" height="3.0" fill="#2d2a28" /><rect x="861.0" y="347.5" width="2.0" height="3.0" fill="#2d2a28" /><rect x="865.0" y="346.6" width="2.0" height="3.0" fill="#2d2a28" /><rect x="897.0" y="333.5" width="12.0" height="17.0" fill="#a6abac" /><path d="M899.0 339.4 L903.0 346.2 L907.0 339.4" stroke="#c8875a" stroke-width="1" fill="none" opacity="0.8"/><rect x="898.0" y="334.5" width="10.0" height="3.4" fill="#8f9a9c" /><rect x="897.6" y="334.1" width="10.8" height="15.8" fill="none" stroke="#2d2a28" stroke-width="1.3"/><path d="M897.0 337.8 H909.0" stroke="#2d2a28" stroke-width="1"/><rect x="831.3" y="392.2" width="91.7" height="3.6" fill="#2d2a28" /><rect x="846.7" y="367.8" width="24.1" height="17.5" fill="#a6abac" /><path d="M848.7 373.9 L858.7 380.9 L868.8 373.9" stroke="#c8875a" stroke-width="1" fill="none" opacity="0.8"/><rect x="847.7" y="368.8" width="22.1" height="3.5" fill="#8f9a9c" /><rect x="847.3" y="368.4" width="22.9" height="16.3" fill="none" stroke="#2d2a28" stroke-width="1.3"/><path d="M846.7 372.1 H870.8" stroke="#2d2a28" stroke-width="1"/><path d="M858.7 367.8 V385.2" stroke="#2d2a28" stroke-width="1"/><rect x="848.7" y="381.9" width="2.0" height="3.0" fill="#2d2a28" /><rect x="852.7" y="382.0" width="2.0" height="3.0" fill="#2d2a28" /><rect x="856.7" y="382.1" width="2.0" height="3.0" fill="#2d2a28" /><rect x="860.7" y="380.7" width="2.0" height="3.0" fill="#2d2a28" /><rect x="864.8" y="382.0" width="2.0" height="3.0" fill="#2d2a28" /><rect x="896.8" y="367.8" width="12.1" height="17.5" fill="#a6abac" /><path d="M898.8 373.9 L902.9 380.9 L906.9 373.9" stroke="#c8875a" stroke-width="1" fill="none" opacity="0.8"/><rect x="897.8" y="368.8" width="10.1" height="3.5" fill="#8f9a9c" /><rect x="897.4" y="368.4" width="10.9" height="16.3" fill="none" stroke="#2d2a28" stroke-width="1.3"/><path d="M896.8 372.1 H908.9" stroke="#2d2a28" stroke-width="1"/><rect x="830.9" y="428.2" width="92.1" height="3.6" fill="#2d2a28" /><rect x="846.3" y="403.0" width="24.2" height="18.0" fill="#a6abac" /><path d="M848.3 409.3 L858.4 416.5 L868.5 409.3" stroke="#c8875a" stroke-width="1" fill="none" opacity="0.8"/><rect x="847.3" y="404.0" width="22.2" height="3.6" fill="#8f9a9c" /><rect x="846.9" y="403.6" width="23.0" height="16.8" fill="none" stroke="#2d2a28" stroke-width="1.3"/><path d="M846.3 407.5 H870.5" stroke="#2d2a28" stroke-width="1"/><path d="M858.4 403.0 V421.0" stroke="#2d2a28" stroke-width="1"/><rect x="848.3" y="417.5" width="2.0" height="3.0" fill="#2d2a28" /><rect x="852.4" y="417.2" width="2.0" height="3.0" fill="#2d2a28" /><rect x="856.4" y="416.3" width="2.0" height="3.0" fill="#2d2a28" /><rect x="860.4" y="417.8" width="2.0" height="3.0" fill="#2d2a28" /><rect x="864.5" y="417.1" width="2.0" height="3.0" fill="#2d2a28" /><rect x="896.7" y="403.0" width="12.1" height="18.0" fill="#a6abac" /><path d="M898.7 409.3 L902.7 416.5 L906.8 409.3" stroke="#c8875a" stroke-width="1" fill="none" opacity="0.8"/><rect x="897.7" y="404.0" width="10.1" height="3.6" fill="#8f9a9c" /><rect x="897.3" y="403.6" width="10.9" height="16.8" fill="none" stroke="#2d2a28" stroke-width="1.3"/><path d="M896.7 407.5 H908.8" stroke="#2d2a28" stroke-width="1"/><rect x="830.6" y="464.2" width="92.4" height="3.6" fill="#2d2a28" /><rect x="845.9" y="439.0" width="24.4" height="18.0" fill="#a6abac" /><path d="M847.9 445.3 L858.1 452.5 L868.3 445.3" stroke="#c8875a" stroke-width="1" fill="none" opacity="0.8"/><rect x="846.9" y="440.0" width="22.4" height="3.6" fill="#8f9a9c" /><rect x="846.5" y="439.6" width="23.2" height="16.8" fill="none" stroke="#2d2a28" stroke-width="1.3"/><path d="M845.9 443.5 H870.3" stroke="#2d2a28" stroke-width="1"/><path d="M858.1 439.0 V457.0" stroke="#2d2a28" stroke-width="1"/><rect x="847.9" y="452.9" width="2.0" height="3.0" fill="#2d2a28" /><rect x="852.0" y="452.2" width="2.0" height="3.0" fill="#2d2a28" /><rect x="856.1" y="452.4" width="2.0" height="3.0" fill="#2d2a28" /><rect x="860.2" y="452.3" width="2.0" height="3.0" fill="#2d2a28" /><rect x="864.2" y="453.4" width="2.0" height="3.0" fill="#2d2a28" /><rect x="896.5" y="439.0" width="12.2" height="18.0" fill="#a6abac" /><path d="M898.5 445.3 L902.6 452.5 L906.6 445.3" stroke="#c8875a" stroke-width="1" fill="none" opacity="0.8"/><rect x="897.5" y="440.0" width="10.2" height="3.6" fill="#8f9a9c" /><rect x="897.1" y="439.6" width="11.0" height="16.8" fill="none" stroke="#2d2a28" stroke-width="1.3"/><path d="M896.5 443.5 H908.6" stroke="#2d2a28" stroke-width="1"/><rect x="830.2" y="500.2" width="92.8" height="3.6" fill="#2d2a28" /><rect x="845.6" y="475.0" width="24.5" height="18.0" fill="#a6abac" /><path d="M847.6 481.3 L857.8 488.5 L868.1 481.3" stroke="#c8875a" stroke-width="1" fill="none" opacity="0.8"/><rect x="846.6" y="476.0" width="22.5" height="3.6" fill="#8f9a9c" /><rect x="846.2" y="475.6" width="23.3" height="16.8" fill="none" stroke="#2d2a28" stroke-width="1.3"/><path d="M845.6 479.5 H870.1" stroke="#2d2a28" stroke-width="1"/><path d="M857.8 475.0 V493.0" stroke="#2d2a28" stroke-width="1"/><rect x="847.6" y="489.2" width="2.0" height="3.0" fill="#2d2a28" /><rect x="851.7" y="489.3" width="2.0" height="3.0" fill="#2d2a28" /><rect x="855.8" y="488.2" width="2.0" height="3.0" fill="#2d2a28" /><rect x="859.9" y="488.1" width="2.0" height="3.0" fill="#2d2a28" /><rect x="864.0" y="489.7" width="2.0" height="3.0" fill="#2d2a28" /><rect x="896.3" y="475.0" width="12.2" height="18.0" fill="#a6abac" /><path d="M898.3 481.3 L902.4 488.5 L906.5 481.3" stroke="#c8875a" stroke-width="1" fill="none" opacity="0.8"/><rect x="897.3" y="476.0" width="10.2" height="3.6" fill="#8f9a9c" /><rect x="896.9" y="475.6" width="11.0" height="16.8" fill="none" stroke="#2d2a28" stroke-width="1.3"/><path d="M896.3 479.5 H908.5" stroke="#2d2a28" stroke-width="1"/><rect x="829.9" y="537.2" width="93.1" height="3.6" fill="#2d2a28" /><rect x="845.2" y="511.2" width="24.6" height="18.5" fill="#a6abac" /><path d="M847.2 517.7 L857.5 525.1 L867.8 517.7" stroke="#c8875a" stroke-width="1" fill="none" opacity="0.8"/><rect x="846.2" y="512.2" width="22.6" height="3.7" fill="#8f9a9c" /><rect x="845.8" y="511.9" width="23.4" height="17.3" fill="none" stroke="#2d2a28" stroke-width="1.3"/><path d="M845.2 515.9 H869.8" stroke="#2d2a28" stroke-width="1"/><path d="M857.5 511.2 V529.8" stroke="#2d2a28" stroke-width="1"/><rect x="847.2" y="526.4" width="2.0" height="3.0" fill="#2d2a28" /><rect x="851.3" y="526.3" width="2.0" height="3.0" fill="#2d2a28" /><rect x="855.5" y="526.3" width="2.0" height="3.0" fill="#2d2a28" /><rect x="859.6" y="525.8" width="2.0" height="3.0" fill="#2d2a28" /><rect x="863.7" y="525.6" width="2.0" height="3.0" fill="#2d2a28" /><rect x="896.1" y="511.2" width="12.3" height="18.5" fill="#a6abac" /><path d="M898.1 517.7 L902.3 525.1 L906.4 517.7" stroke="#c8875a" stroke-width="1" fill="none" opacity="0.8"/><rect x="897.1" y="512.2" width="10.3" height="3.7" fill="#8f9a9c" /><rect x="896.7" y="511.9" width="11.1" height="17.3" fill="none" stroke="#2d2a28" stroke-width="1.3"/><path d="M896.1 515.9 H908.4" stroke="#2d2a28" stroke-width="1"/><rect x="829.5" y="573.2" width="93.5" height="3.6" fill="#2d2a28" /><rect x="844.9" y="548.0" width="24.7" height="18.0" fill="#a6abac" /><path d="M846.9 554.3 L857.2 561.5 L867.6 554.3" stroke="#c8875a" stroke-width="1" fill="none" opacity="0.8"/><rect x="845.9" y="549.0" width="22.7" height="3.6" fill="#8f9a9c" /><rect x="845.5" y="548.6" width="23.5" height="16.8" fill="none" stroke="#2d2a28" stroke-width="1.3"/><path d="M844.9 552.5 H869.6" stroke="#2d2a28" stroke-width="1"/><path d="M857.2 548.0 V566.0" stroke="#2d2a28" stroke-width="1"/><rect x="846.9" y="562.5" width="2.0" height="3.0" fill="#2d2a28" /><rect x="851.0" y="563.0" width="2.0" height="3.0" fill="#2d2a28" /><rect x="855.1" y="562.2" width="2.0" height="3.0" fill="#2d2a28" /><rect x="859.3" y="562.3" width="2.0" height="3.0" fill="#2d2a28" /><rect x="863.4" y="561.9" width="2.0" height="3.0" fill="#2d2a28" /><rect x="895.9" y="548.0" width="12.4" height="18.0" fill="#a6abac" /><path d="M897.9 554.3 L902.1 561.5 L906.3 554.3" stroke="#c8875a" stroke-width="1" fill="none" opacity="0.8"/><rect x="896.9" y="549.0" width="10.4" height="3.6" fill="#8f9a9c" /><rect x="896.5" y="548.6" width="11.2" height="16.8" fill="none" stroke="#2d2a28" stroke-width="1.3"/><path d="M895.9 552.5 H908.3" stroke="#2d2a28" stroke-width="1"/><rect x="829.1" y="611.7" width="93.9" height="3.6" fill="#2d2a28" /><rect x="844.5" y="584.6" width="24.8" height="19.2" fill="#a6abac" /><path d="M846.5 591.4 L856.9 599.1 L867.3 591.4" stroke="#c8875a" stroke-width="1" fill="none" opacity="0.8"/><rect x="845.5" y="585.6" width="22.8" height="3.9" fill="#8f9a9c" /><rect x="845.1" y="585.2" width="23.6" height="18.1" fill="none" stroke="#2d2a28" stroke-width="1.3"/><path d="M844.5 589.4 H869.3" stroke="#2d2a28" stroke-width="1"/><path d="M856.9 584.6 V603.9" stroke="#2d2a28" stroke-width="1"/><rect x="846.5" y="599.0" width="2.0" height="3.0" fill="#2d2a28" /><rect x="850.7" y="599.5" width="2.0" height="3.0" fill="#2d2a28" /><rect x="854.8" y="599.8" width="2.0" height="3.0" fill="#2d2a28" /><rect x="859.0" y="599.6" width="2.0" height="3.0" fill="#2d2a28" /><rect x="863.2" y="599.5" width="2.0" height="3.0" fill="#2d2a28" /><rect x="895.7" y="584.6" width="12.4" height="19.2" fill="#a6abac" /><path d="M897.7 591.4 L902.0 599.1 L906.2 591.4" stroke="#c8875a" stroke-width="1" fill="none" opacity="0.8"/><rect x="896.7" y="585.6" width="10.4" height="3.9" fill="#8f9a9c" /><rect x="896.3" y="585.2" width="11.2" height="18.1" fill="none" stroke="#2d2a28" stroke-width="1.3"/><path d="M895.7 589.4 H908.2" stroke="#2d2a28" stroke-width="1"/><rect x="828.7" y="650.2" width="94.3" height="3.6" fill="#2d2a28" /><rect x="844.1" y="623.1" width="25.0" height="19.2" fill="#a6abac" /><path d="M846.1 629.9 L856.6 637.6 L867.1 629.9" stroke="#c8875a" stroke-width="1" fill="none" opacity="0.8"/><rect x="845.1" y="624.1" width="23.0" height="3.9" fill="#8f9a9c" /><rect x="844.7" y="623.7" width="23.8" height="18.1" fill="none" stroke="#2d2a28" stroke-width="1.3"/><path d="M844.1 627.9 H869.1" stroke="#2d2a28" stroke-width="1"/><path d="M856.6 623.1 V642.4" stroke="#2d2a28" stroke-width="1"/><rect x="846.1" y="639.3" width="2.0" height="3.0" fill="#2d2a28" /><rect x="850.3" y="637.6" width="2.0" height="3.0" fill="#2d2a28" /><rect x="854.5" y="637.8" width="2.0" height="3.0" fill="#2d2a28" /><rect x="858.7" y="637.6" width="2.0" height="3.0" fill="#2d2a28" /><rect x="862.9" y="637.8" width="2.0" height="3.0" fill="#2d2a28" /><rect x="895.6" y="623.1" width="12.5" height="19.2" fill="#a6abac" /><path d="M897.6 629.9 L901.8 637.6 L906.0 629.9" stroke="#c8875a" stroke-width="1" fill="none" opacity="0.8"/><rect x="896.6" y="624.1" width="10.5" height="3.9" fill="#8f9a9c" /><rect x="896.2" y="623.7" width="11.3" height="18.1" fill="none" stroke="#2d2a28" stroke-width="1.3"/><path d="M895.6 627.9 H908.0" stroke="#2d2a28" stroke-width="1"/><rect x="828.3" y="688.2" width="94.7" height="3.6" fill="#2d2a28" /><rect x="843.7" y="661.5" width="25.1" height="19.0" fill="#a6abac" /><path d="M845.7 668.1 L856.3 675.8 L866.8 668.1" stroke="#c8875a" stroke-width="1" fill="none" opacity="0.8"/><rect x="844.7" y="662.5" width="23.1" height="3.8" fill="#8f9a9c" /><rect x="844.3" y="662.1" width="23.9" height="17.8" fill="none" stroke="#2d2a28" stroke-width="1.3"/><path d="M843.7 666.2 H868.8" stroke="#2d2a28" stroke-width="1"/><path d="M856.3 661.5 V680.5" stroke="#2d2a28" stroke-width="1"/><rect x="845.7" y="676.7" width="2.0" height="3.0" fill="#2d2a28" /><rect x="849.9" y="676.7" width="2.0" height="3.0" fill="#2d2a28" /><rect x="854.2" y="677.3" width="2.0" height="3.0" fill="#2d2a28" /><rect x="858.4" y="676.2" width="2.0" height="3.0" fill="#2d2a28" /><rect x="862.6" y="677.4" width="2.0" height="3.0" fill="#2d2a28" /><rect x="895.4" y="661.5" width="12.5" height="19.0" fill="#a6abac" /><path d="M897.4 668.1 L901.6 675.8 L905.9 668.1" stroke="#c8875a" stroke-width="1" fill="none" opacity="0.8"/><rect x="896.4" y="662.5" width="10.5" height="3.8" fill="#8f9a9c" /><rect x="896.0" y="662.1" width="11.3" height="17.8" fill="none" stroke="#2d2a28" stroke-width="1.3"/><path d="M895.4 666.2 H907.9" stroke="#2d2a28" stroke-width="1"/><rect x="828.0" y="726.2" width="95.0" height="3.6" fill="#2d2a28" /><rect x="843.3" y="699.5" width="25.2" height="19.0" fill="#a6abac" /><path d="M845.3 706.1 L856.0 713.8 L866.6 706.1" stroke="#c8875a" stroke-width="1" fill="none" opacity="0.8"/><rect x="844.3" y="700.5" width="23.2" height="3.8" fill="#8f9a9c" /><rect x="843.9" y="700.1" width="24.0" height="17.8" fill="none" stroke="#2d2a28" stroke-width="1.3"/><path d="M843.3 704.2 H868.6" stroke="#2d2a28" stroke-width="1"/><path d="M856.0 699.5 V718.5" stroke="#2d2a28" stroke-width="1"/><rect x="845.3" y="715.4" width="2.0" height="3.0" fill="#2d2a28" /><rect x="849.6" y="715.1" width="2.0" height="3.0" fill="#2d2a28" /><rect x="853.8" y="715.2" width="2.0" height="3.0" fill="#2d2a28" /><rect x="858.1" y="714.8" width="2.0" height="3.0" fill="#2d2a28" /><rect x="862.3" y="715.4" width="2.0" height="3.0" fill="#2d2a28" /><rect x="895.2" y="699.5" width="12.6" height="19.0" fill="#a6abac" /><path d="M897.2 706.1 L901.5 713.8 L905.8 706.1" stroke="#c8875a" stroke-width="1" fill="none" opacity="0.8"/><rect x="896.2" y="700.5" width="10.6" height="3.8" fill="#8f9a9c" /><rect x="895.8" y="700.1" width="11.4" height="17.8" fill="none" stroke="#2d2a28" stroke-width="1.3"/><path d="M895.2 704.2 H907.8" stroke="#2d2a28" stroke-width="1"/><rect x="827.6" y="765.2" width="95.4" height="3.6" fill="#2d2a28" /><rect x="843.0" y="737.8" width="25.3" height="19.5" fill="#a6abac" /><path d="M845.0 744.6 L855.6 752.4 L866.3 744.6" stroke="#c8875a" stroke-width="1" fill="none" opacity="0.8"/><rect x="844.0" y="738.8" width="23.3" height="3.9" fill="#8f9a9c" /><rect x="843.6" y="738.4" width="24.1" height="18.3" fill="none" stroke="#2d2a28" stroke-width="1.3"/><path d="M843.0 742.6 H868.3" stroke="#2d2a28" stroke-width="1"/><path d="M855.6 737.8 V757.2" stroke="#2d2a28" stroke-width="1"/><rect x="845.0" y="754.2" width="2.0" height="3.0" fill="#2d2a28" /><rect x="849.2" y="753.9" width="2.0" height="3.0" fill="#2d2a28" /><rect x="853.5" y="754.0" width="2.0" height="3.0" fill="#2d2a28" /><rect x="857.8" y="753.5" width="2.0" height="3.0" fill="#2d2a28" /><rect x="862.0" y="754.2" width="2.0" height="3.0" fill="#2d2a28" /><rect x="895.0" y="737.8" width="12.7" height="19.5" fill="#a6abac" /><path d="M897.0 744.6 L901.3 752.4 L905.7 744.6" stroke="#c8875a" stroke-width="1" fill="none" opacity="0.8"/><rect x="896.0" y="738.8" width="10.7" height="3.9" fill="#8f9a9c" /><rect x="895.6" y="738.4" width="11.5" height="18.3" fill="none" stroke="#2d2a28" stroke-width="1.3"/><path d="M895.0 742.6 H907.7" stroke="#2d2a28" stroke-width="1"/><rect x="827.2" y="804.2" width="95.8" height="3.6" fill="#2d2a28" /><rect x="842.6" y="776.8" width="25.5" height="19.5" fill="#a6abac" /><path d="M844.6 783.6 L855.3 791.4 L866.0 783.6" stroke="#c8875a" stroke-width="1" fill="none" opacity="0.8"/><rect x="843.6" y="777.8" width="23.5" height="3.9" fill="#8f9a9c" /><rect x="843.2" y="777.4" width="24.3" height="18.3" fill="none" stroke="#2d2a28" stroke-width="1.3"/><path d="M842.6 781.6 H868.0" stroke="#2d2a28" stroke-width="1"/><path d="M855.3 776.8 V796.2" stroke="#2d2a28" stroke-width="1"/><rect x="844.6" y="791.5" width="2.0" height="3.0" fill="#2d2a28" /><rect x="848.9" y="792.0" width="2.0" height="3.0" fill="#2d2a28" /><rect x="853.2" y="793.0" width="2.0" height="3.0" fill="#2d2a28" /><rect x="857.5" y="792.7" width="2.0" height="3.0" fill="#2d2a28" /><rect x="861.8" y="792.6" width="2.0" height="3.0" fill="#2d2a28" /><rect x="894.8" y="776.8" width="12.7" height="19.5" fill="#a6abac" /><path d="M896.8 783.6 L901.2 791.4 L905.5 783.6" stroke="#c8875a" stroke-width="1" fill="none" opacity="0.8"/><rect x="895.8" y="777.8" width="10.7" height="3.9" fill="#8f9a9c" /><rect x="895.4" y="777.4" width="11.5" height="18.3" fill="none" stroke="#2d2a28" stroke-width="1.3"/><path d="M894.8 781.6 H907.5" stroke="#2d2a28" stroke-width="1"/><rect x="826.8" y="843.7" width="96.2" height="3.6" fill="#2d2a28" /><rect x="842.2" y="815.9" width="25.6" height="19.8" fill="#a6abac" /><path d="M844.2 822.8 L855.0 830.7 L865.8 822.8" stroke="#c8875a" stroke-width="1" fill="none" opacity="0.8"/><rect x="843.2" y="816.9" width="23.6" height="4.0" fill="#8f9a9c" /><rect x="842.8" y="816.5" width="24.4" height="18.6" fill="none" stroke="#2d2a28" stroke-width="1.3"/><path d="M842.2 820.8 H867.8" stroke="#2d2a28" stroke-width="1"/><path d="M855.0 815.9 V835.6" stroke="#2d2a28" stroke-width="1"/><rect x="844.2" y="831.9" width="2.0" height="3.0" fill="#2d2a28" /><rect x="848.5" y="832.4" width="2.0" height="3.0" fill="#2d2a28" /><rect x="852.8" y="830.9" width="2.0" height="3.0" fill="#2d2a28" /><rect x="857.1" y="830.6" width="2.0" height="3.0" fill="#2d2a28" /><rect x="861.5" y="831.7" width="2.0" height="3.0" fill="#2d2a28" /><rect x="894.6" y="815.9" width="12.8" height="19.8" fill="#a6abac" /><path d="M896.6 822.8 L901.0 830.7 L905.4 822.8" stroke="#c8875a" stroke-width="1" fill="none" opacity="0.8"/><rect x="895.6" y="816.9" width="10.8" height="4.0" fill="#8f9a9c" /><rect x="895.2" y="816.5" width="11.6" height="18.6" fill="none" stroke="#2d2a28" stroke-width="1.3"/><path d="M894.6 820.8 H907.4" stroke="#2d2a28" stroke-width="1"/><rect x="826.4" y="883.2" width="96.6" height="3.6" fill="#2d2a28" /><rect x="841.8" y="855.4" width="25.7" height="19.8" fill="#a6abac" /><path d="M843.8 862.3 L854.7 870.2 L865.5 862.3" stroke="#c8875a" stroke-width="1" fill="none" opacity="0.8"/><rect x="842.8" y="856.4" width="23.7" height="4.0" fill="#8f9a9c" /><rect x="842.4" y="856.0" width="24.5" height="18.6" fill="none" stroke="#2d2a28" stroke-width="1.3"/><path d="M841.8 860.3 H867.5" stroke="#2d2a28" stroke-width="1"/><path d="M854.7 855.4 V875.1" stroke="#2d2a28" stroke-width="1"/><rect x="843.8" y="871.2" width="2.0" height="3.0" fill="#2d2a28" /><rect x="848.1" y="872.0" width="2.0" height="3.0" fill="#2d2a28" /><rect x="852.5" y="871.9" width="2.0" height="3.0" fill="#2d2a28" /><rect x="856.8" y="871.4" width="2.0" height="3.0" fill="#2d2a28" /><rect x="861.2" y="871.6" width="2.0" height="3.0" fill="#2d2a28" /><rect x="894.4" y="855.4" width="12.9" height="19.8" fill="#a6abac" /><path d="M896.4 862.3 L900.8 870.2 L905.3 862.3" stroke="#c8875a" stroke-width="1" fill="none" opacity="0.8"/><rect x="895.4" y="856.4" width="10.9" height="4.0" fill="#8f9a9c" /><rect x="895.0" y="856.0" width="11.7" height="18.6" fill="none" stroke="#2d2a28" stroke-width="1.3"/><path d="M894.4 860.3 H907.3" stroke="#2d2a28" stroke-width="1"/><rect x="841.4" y="894.8" width="25.9" height="19.5" fill="#a6abac" /><path d="M843.4 901.6 L854.3 909.4 L865.3 901.6" stroke="#c8875a" stroke-width="1" fill="none" opacity="0.8"/><rect x="842.4" y="895.8" width="23.9" height="3.9" fill="#8f9a9c" /><rect x="842.0" y="895.4" width="24.7" height="18.3" fill="none" stroke="#2d2a28" stroke-width="1.3"/><path d="M841.4 899.6 H867.3" stroke="#2d2a28" stroke-width="1"/><path d="M854.3 894.8 V914.2" stroke="#2d2a28" stroke-width="1"/><rect x="843.4" y="909.6" width="2.0" height="3.0" fill="#2d2a28" /><rect x="847.8" y="910.9" width="2.0" height="3.0" fill="#2d2a28" /><rect x="852.1" y="911.2" width="2.0" height="3.0" fill="#2d2a28" /><rect x="856.5" y="909.3" width="2.0" height="3.0" fill="#2d2a28" /><rect x="860.9" y="910.2" width="2.0" height="3.0" fill="#2d2a28" /><rect x="894.2" y="894.8" width="12.9" height="19.5" fill="#a6abac" /><path d="M896.2 901.6 L900.7 909.4 L905.1 901.6" stroke="#c8875a" stroke-width="1" fill="none" opacity="0.8"/><rect x="895.2" y="895.8" width="10.9" height="3.9" fill="#8f9a9c" /><rect x="894.8" y="895.4" width="11.7" height="18.3" fill="none" stroke="#2d2a28" stroke-width="1.3"/><path d="M894.2 899.6 H907.1" stroke="#2d2a28" stroke-width="1"/><rect x="827.0" y="920.0" width="98.0" height="7.0" fill="#2d2a28" /><rect x="986.0" y="314.0" width="86.0" height="4.0" fill="#2d2a28" /><rect x="986.0" y="318.0" width="86.0" height="8.0" fill="#aea1a1" /><rect x="986.0" y="326.0" width="86.0" height="2.0" fill="#2d2a28" /><polygon points="986,328 1075,328 1085,924 989,924" fill="#aea1a1"/><rect x="987.0" y="359.2" width="89.6" height="3.6" fill="#2d2a28" /><rect x="1000.0" y="335.6" width="12.0" height="16.5" fill="#a6abac" /><path d="M1002.0 341.4 L1006.0 348.0 L1010.0 341.4" stroke="#c8875a" stroke-width="1" fill="none" opacity="0.8"/><rect x="1001.0" y="336.6" width="10.0" height="3.3" fill="#8f9a9c" /><rect x="1000.6" y="336.2" width="10.8" height="15.3" fill="none" stroke="#2d2a28" stroke-width="1.3"/><path d="M1000.0 339.7 H1012.0" stroke="#2d2a28" stroke-width="1"/><rect x="1037.0" y="335.6" width="24.0" height="16.5" fill="#a6abac" /><path d="M1039.0 341.4 L1049.0 348.0 L1059.0 341.4" stroke="#c8875a" stroke-width="1" fill="none" opacity="0.8"/><rect x="1038.0" y="336.6" width="22.0" height="3.3" fill="#8f9a9c" /><rect x="1037.6" y="336.2" width="22.8" height="15.3" fill="none" stroke="#2d2a28" stroke-width="1.3"/><path d="M1037.0 339.7 H1061.0" stroke="#2d2a28" stroke-width="1"/><path d="M1049.0 335.6 V352.1" stroke="#2d2a28" stroke-width="1"/><rect x="1039.0" y="348.8" width="2.0" height="3.0" fill="#2d2a28" /><rect x="1043.0" y="348.0" width="2.0" height="3.0" fill="#2d2a28" /><rect x="1047.0" y="349.0" width="2.0" height="3.0" fill="#2d2a28" /><rect x="1051.0" y="348.0" width="2.0" height="3.0" fill="#2d2a28" /><rect x="1055.0" y="347.1" width="2.0" height="3.0" fill="#2d2a28" /><rect x="987.0" y="394.2" width="90.2" height="3.6" fill="#2d2a28" /><rect x="1000.2" y="369.1" width="12.0" height="17.5" fill="#a6abac" /><path d="M1002.2 375.2 L1006.2 382.2 L1010.2 375.2" stroke="#c8875a" stroke-width="1" fill="none" opacity="0.8"/><rect x="1001.2" y="370.1" width="10.0" height="3.5" fill="#8f9a9c" /><rect x="1000.8" y="369.7" width="10.8" height="16.3" fill="none" stroke="#2d2a28" stroke-width="1.3"/><path d="M1000.2 373.4 H1012.2" stroke="#2d2a28" stroke-width="1"/><rect x="1037.4" y="369.1" width="24.1" height="17.5" fill="#a6abac" /><path d="M1039.4 375.2 L1049.4 382.2 L1059.4 375.2" stroke="#c8875a" stroke-width="1" fill="none" opacity="0.8"/><rect x="1038.4" y="370.1" width="22.1" height="3.5" fill="#8f9a9c" /><rect x="1038.0" y="369.7" width="22.9" height="16.3" fill="none" stroke="#2d2a28" stroke-width="1.3"/><path d="M1037.4 373.4 H1061.4" stroke="#2d2a28" stroke-width="1"/><path d="M1049.4 369.1 V386.6" stroke="#2d2a28" stroke-width="1"/><rect x="1039.4" y="381.8" width="2.0" height="3.0" fill="#2d2a28" /><rect x="1043.4" y="382.2" width="2.0" height="3.0" fill="#2d2a28" /><rect x="1047.4" y="383.0" width="2.0" height="3.0" fill="#2d2a28" /><rect x="1051.4" y="382.8" width="2.0" height="3.0" fill="#2d2a28" /><rect x="1055.4" y="383.2" width="2.0" height="3.0" fill="#2d2a28" /><rect x="987.0" y="430.2" width="90.8" height="3.6" fill="#2d2a28" /><rect x="1000.4" y="404.3" width="12.1" height="18.0" fill="#a6abac" /><path d="M1002.4 410.6 L1006.4 417.8 L1010.5 410.6" stroke="#c8875a" stroke-width="1" fill="none" opacity="0.8"/><rect x="1001.4" y="405.3" width="10.1" height="3.6" fill="#8f9a9c" /><rect x="1001.0" y="404.9" width="10.9" height="16.8" fill="none" stroke="#2d2a28" stroke-width="1.3"/><path d="M1000.4 408.8 H1012.5" stroke="#2d2a28" stroke-width="1"/><rect x="1037.7" y="404.3" width="24.1" height="18.0" fill="#a6abac" /><path d="M1039.7 410.6 L1049.8 417.8 L1059.8 410.6" stroke="#c8875a" stroke-width="1" fill="none" opacity="0.8"/><rect x="1038.7" y="405.3" width="22.1" height="3.6" fill="#8f9a9c" /><rect x="1038.3" y="404.9" width="22.9" height="16.8" fill="none" stroke="#2d2a28" stroke-width="1.3"/><path d="M1037.7 408.8 H1061.8" stroke="#2d2a28" stroke-width="1"/><path d="M1049.8 404.3 V422.3" stroke="#2d2a28" stroke-width="1"/><rect x="1039.7" y="417.7" width="2.0" height="3.0" fill="#2d2a28" /><rect x="1043.7" y="418.2" width="2.0" height="3.0" fill="#2d2a28" /><rect x="1047.8" y="417.7" width="2.0" height="3.0" fill="#2d2a28" /><rect x="1051.8" y="418.6" width="2.0" height="3.0" fill="#2d2a28" /><rect x="1055.8" y="418.8" width="2.0" height="3.0" fill="#2d2a28" /><rect x="987.0" y="466.2" width="91.4" height="3.6" fill="#2d2a28" /><rect x="1000.6" y="440.3" width="12.1" height="18.0" fill="#a6abac" /><path d="M1002.6 446.6 L1006.7 453.8 L1010.7 446.6" stroke="#c8875a" stroke-width="1" fill="none" opacity="0.8"/><rect x="1001.6" y="441.3" width="10.1" height="3.6" fill="#8f9a9c" /><rect x="1001.2" y="440.9" width="10.9" height="16.8" fill="none" stroke="#2d2a28" stroke-width="1.3"/><path d="M1000.6 444.8 H1012.7" stroke="#2d2a28" stroke-width="1"/><rect x="1038.1" y="440.3" width="24.2" height="18.0" fill="#a6abac" /><path d="M1040.1 446.6 L1050.2 453.8 L1060.3 446.6" stroke="#c8875a" stroke-width="1" fill="none" opacity="0.8"/><rect x="1039.1" y="441.3" width="22.2" height="3.6" fill="#8f9a9c" /><rect x="1038.7" y="440.9" width="23.0" height="16.8" fill="none" stroke="#2d2a28" stroke-width="1.3"/><path d="M1038.1 444.8 H1062.3" stroke="#2d2a28" stroke-width="1"/><path d="M1050.2 440.3 V458.3" stroke="#2d2a28" stroke-width="1"/><rect x="1040.1" y="453.7" width="2.0" height="3.0" fill="#2d2a28" /><rect x="1044.1" y="453.3" width="2.0" height="3.0" fill="#2d2a28" /><rect x="1048.1" y="453.6" width="2.0" height="3.0" fill="#2d2a28" /><rect x="1052.2" y="453.7" width="2.0" height="3.0" fill="#2d2a28" /><rect x="1056.2" y="453.6" width="2.0" height="3.0" fill="#2d2a28" /><rect x="987.0" y="502.2" width="92.0" height="3.6" fill="#2d2a28" /><rect x="1000.8" y="476.3" width="12.1" height="18.0" fill="#a6abac" /><path d="M1002.8 482.6 L1006.9 489.8 L1011.0 482.6" stroke="#c8875a" stroke-width="1" fill="none" opacity="0.8"/><rect x="1001.8" y="477.3" width="10.1" height="3.6" fill="#8f9a9c" /><rect x="1001.4" y="476.9" width="10.9" height="16.8" fill="none" stroke="#2d2a28" stroke-width="1.3"/><path d="M1000.8 480.8 H1013.0" stroke="#2d2a28" stroke-width="1"/><rect x="1038.4" y="476.3" width="24.2" height="18.0" fill="#a6abac" /><path d="M1040.4 482.6 L1050.6 489.8 L1060.7 482.6" stroke="#c8875a" stroke-width="1" fill="none" opacity="0.8"/><rect x="1039.4" y="477.3" width="22.2" height="3.6" fill="#8f9a9c" /><rect x="1039.0" y="476.9" width="23.0" height="16.8" fill="none" stroke="#2d2a28" stroke-width="1.3"/><path d="M1038.4 480.8 H1062.7" stroke="#2d2a28" stroke-width="1"/><path d="M1050.6 476.3 V494.3" stroke="#2d2a28" stroke-width="1"/><rect x="1040.4" y="489.8" width="2.0" height="3.0" fill="#2d2a28" /><rect x="1044.5" y="490.8" width="2.0" height="3.0" fill="#2d2a28" /><rect x="1048.5" y="490.2" width="2.0" height="3.0" fill="#2d2a28" /><rect x="1052.6" y="490.6" width="2.0" height="3.0" fill="#2d2a28" /><rect x="1056.6" y="491.2" width="2.0" height="3.0" fill="#2d2a28" /><rect x="987.0" y="539.2" width="92.6" height="3.6" fill="#2d2a28" /><rect x="1001.0" y="512.5" width="12.1" height="18.5" fill="#a6abac" /><path d="M1003.0 519.0 L1007.1 526.4 L1011.2 519.0" stroke="#c8875a" stroke-width="1" fill="none" opacity="0.8"/><rect x="1002.0" y="513.5" width="10.1" height="3.7" fill="#8f9a9c" /><rect x="1001.6" y="513.1" width="10.9" height="17.3" fill="none" stroke="#2d2a28" stroke-width="1.3"/><path d="M1001.0 517.1 H1013.2" stroke="#2d2a28" stroke-width="1"/><rect x="1038.8" y="512.5" width="24.3" height="18.5" fill="#a6abac" /><path d="M1040.8 519.0 L1050.9 526.4 L1061.1 519.0" stroke="#c8875a" stroke-width="1" fill="none" opacity="0.8"/><rect x="1039.8" y="513.5" width="22.3" height="3.7" fill="#8f9a9c" /><rect x="1039.4" y="513.1" width="23.1" height="17.3" fill="none" stroke="#2d2a28" stroke-width="1.3"/><path d="M1038.8 517.1 H1063.1" stroke="#2d2a28" stroke-width="1"/><path d="M1050.9 512.5 V531.0" stroke="#2d2a28" stroke-width="1"/><rect x="1040.8" y="528.0" width="2.0" height="3.0" fill="#2d2a28" /><rect x="1044.9" y="527.5" width="2.0" height="3.0" fill="#2d2a28" /><rect x="1048.9" y="527.5" width="2.0" height="3.0" fill="#2d2a28" /><rect x="1053.0" y="526.6" width="2.0" height="3.0" fill="#2d2a28" /><rect x="1057.0" y="526.1" width="2.0" height="3.0" fill="#2d2a28" /><rect x="987.0" y="575.2" width="93.2" height="3.6" fill="#2d2a28" /><rect x="1001.3" y="549.3" width="12.2" height="18.0" fill="#a6abac" /><path d="M1003.3 555.6 L1007.4 562.8 L1011.4 555.6" stroke="#c8875a" stroke-width="1" fill="none" opacity="0.8"/><rect x="1002.3" y="550.3" width="10.2" height="3.6" fill="#8f9a9c" /><rect x="1001.9" y="549.9" width="11.0" height="16.8" fill="none" stroke="#2d2a28" stroke-width="1.3"/><path d="M1001.3 553.8 H1013.4" stroke="#2d2a28" stroke-width="1"/><rect x="1039.2" y="549.3" width="24.4" height="18.0" fill="#a6abac" /><path d="M1041.2 555.6 L1051.3 562.8 L1061.5 555.6" stroke="#c8875a" stroke-width="1" fill="none" opacity="0.8"/><rect x="1040.2" y="550.3" width="22.4" height="3.6" fill="#8f9a9c" /><rect x="1039.8" y="549.9" width="23.2" height="16.8" fill="none" stroke="#2d2a28" stroke-width="1.3"/><path d="M1039.2 553.8 H1063.5" stroke="#2d2a28" stroke-width="1"/><path d="M1051.3 549.3 V567.3" stroke="#2d2a28" stroke-width="1"/><rect x="1041.2" y="563.4" width="2.0" height="3.0" fill="#2d2a28" /><rect x="1045.2" y="562.4" width="2.0" height="3.0" fill="#2d2a28" /><rect x="1049.3" y="562.3" width="2.0" height="3.0" fill="#2d2a28" /><rect x="1053.4" y="562.4" width="2.0" height="3.0" fill="#2d2a28" /><rect x="1057.5" y="563.6" width="2.0" height="3.0" fill="#2d2a28" /><rect x="987.0" y="613.7" width="93.8" height="3.6" fill="#2d2a28" /><rect x="1001.5" y="585.9" width="12.2" height="19.2" fill="#a6abac" /><path d="M1003.5 592.6 L1007.6 600.3 L1011.7 592.6" stroke="#c8875a" stroke-width="1" fill="none" opacity="0.8"/><rect x="1002.5" y="586.9" width="10.2" height="3.9" fill="#8f9a9c" /><rect x="1002.1" y="586.5" width="11.0" height="18.1" fill="none" stroke="#2d2a28" stroke-width="1.3"/><path d="M1001.5 590.7 H1013.7" stroke="#2d2a28" stroke-width="1"/><rect x="1039.5" y="585.9" width="24.4" height="19.2" fill="#a6abac" /><path d="M1041.5 592.6 L1051.7 600.3 L1061.9 592.6" stroke="#c8875a" stroke-width="1" fill="none" opacity="0.8"/><rect x="1040.5" y="586.9" width="22.4" height="3.9" fill="#8f9a9c" /><rect x="1040.1" y="586.5" width="23.2" height="18.1" fill="none" stroke="#2d2a28" stroke-width="1.3"/><path d="M1039.5 590.7 H1063.9" stroke="#2d2a28" stroke-width="1"/><path d="M1051.7 585.9 V605.1" stroke="#2d2a28" stroke-width="1"/><rect x="1041.5" y="601.7" width="2.0" height="3.0" fill="#2d2a28" /><rect x="1045.6" y="601.7" width="2.0" height="3.0" fill="#2d2a28" /><rect x="1049.7" y="601.7" width="2.0" height="3.0" fill="#2d2a28" /><rect x="1053.8" y="601.7" width="2.0" height="3.0" fill="#2d2a28" /><rect x="1057.9" y="600.9" width="2.0" height="3.0" fill="#2d2a28" /><rect x="987.0" y="652.2" width="94.5" height="3.6" fill="#2d2a28" /><rect x="1001.7" y="624.4" width="12.2" height="19.2" fill="#a6abac" /><path d="M1003.7 631.1 L1007.8 638.8 L1011.9 631.1" stroke="#c8875a" stroke-width="1" fill="none" opacity="0.8"/><rect x="1002.7" y="625.4" width="10.2" height="3.9" fill="#8f9a9c" /><rect x="1002.3" y="625.0" width="11.0" height="18.1" fill="none" stroke="#2d2a28" stroke-width="1.3"/><path d="M1001.7 629.2 H1013.9" stroke="#2d2a28" stroke-width="1"/><rect x="1039.9" y="624.4" width="24.5" height="19.2" fill="#a6abac" /><path d="M1041.9 631.1 L1052.2 638.8 L1062.4 631.1" stroke="#c8875a" stroke-width="1" fill="none" opacity="0.8"/><rect x="1040.9" y="625.4" width="22.5" height="3.9" fill="#8f9a9c" /><rect x="1040.5" y="625.0" width="23.3" height="18.1" fill="none" stroke="#2d2a28" stroke-width="1.3"/><path d="M1039.9 629.2 H1064.4" stroke="#2d2a28" stroke-width="1"/><path d="M1052.2 624.4 V643.6" stroke="#2d2a28" stroke-width="1"/><rect x="1041.9" y="638.8" width="2.0" height="3.0" fill="#2d2a28" /><rect x="1046.0" y="638.9" width="2.0" height="3.0" fill="#2d2a28" /><rect x="1050.1" y="639.6" width="2.0" height="3.0" fill="#2d2a28" /><rect x="1054.2" y="639.3" width="2.0" height="3.0" fill="#2d2a28" /><rect x="1058.3" y="639.0" width="2.0" height="3.0" fill="#2d2a28" /><rect x="987.0" y="690.2" width="95.1" height="3.6" fill="#2d2a28" /><rect x="1001.9" y="662.7" width="12.3" height="19.0" fill="#a6abac" /><path d="M1003.9 669.4 L1008.1 677.0 L1012.2 669.4" stroke="#c8875a" stroke-width="1" fill="none" opacity="0.8"/><rect x="1002.9" y="663.7" width="10.3" height="3.8" fill="#8f9a9c" /><rect x="1002.5" y="663.3" width="11.1" height="17.8" fill="none" stroke="#2d2a28" stroke-width="1.3"/><path d="M1001.9 667.5 H1014.2" stroke="#2d2a28" stroke-width="1"/><rect x="1040.3" y="662.7" width="24.5" height="19.0" fill="#a6abac" /><path d="M1042.3 669.4 L1052.6 677.0 L1062.8 669.4" stroke="#c8875a" stroke-width="1" fill="none" opacity="0.8"/><rect x="1041.3" y="663.7" width="22.5" height="3.8" fill="#8f9a9c" /><rect x="1040.9" y="663.3" width="23.3" height="17.8" fill="none" stroke="#2d2a28" stroke-width="1.3"/><path d="M1040.3 667.5 H1064.8" stroke="#2d2a28" stroke-width="1"/><path d="M1052.6 662.7 V681.7" stroke="#2d2a28" stroke-width="1"/><rect x="1042.3" y="678.6" width="2.0" height="3.0" fill="#2d2a28" /><rect x="1046.4" y="677.4" width="2.0" height="3.0" fill="#2d2a28" /><rect x="1050.5" y="676.9" width="2.0" height="3.0" fill="#2d2a28" /><rect x="1054.6" y="677.2" width="2.0" height="3.0" fill="#2d2a28" /><rect x="1058.7" y="677.2" width="2.0" height="3.0" fill="#2d2a28" /><rect x="987.0" y="728.2" width="95.8" height="3.6" fill="#2d2a28" /><rect x="1002.1" y="700.7" width="12.3" height="19.0" fill="#a6abac" /><path d="M1004.1 707.4 L1008.3 715.0 L1012.5 707.4" stroke="#c8875a" stroke-width="1" fill="none" opacity="0.8"/><rect x="1003.1" y="701.7" width="10.3" height="3.8" fill="#8f9a9c" /><rect x="1002.7" y="701.3" width="11.1" height="17.8" fill="none" stroke="#2d2a28" stroke-width="1.3"/><path d="M1002.1 705.5 H1014.5" stroke="#2d2a28" stroke-width="1"/><rect x="1040.7" y="700.7" width="24.6" height="19.0" fill="#a6abac" /><path d="M1042.7 707.4 L1053.0 715.0 L1063.3 707.4" stroke="#c8875a" stroke-width="1" fill="none" opacity="0.8"/><rect x="1041.7" y="701.7" width="22.6" height="3.8" fill="#8f9a9c" /><rect x="1041.3" y="701.3" width="23.4" height="17.8" fill="none" stroke="#2d2a28" stroke-width="1.3"/><path d="M1040.7 705.5 H1065.3" stroke="#2d2a28" stroke-width="1"/><path d="M1053.0 700.7 V719.7" stroke="#2d2a28" stroke-width="1"/><rect x="1042.7" y="715.8" width="2.0" height="3.0" fill="#2d2a28" /><rect x="1046.8" y="716.4" width="2.0" height="3.0" fill="#2d2a28" /><rect x="1050.9" y="715.2" width="2.0" height="3.0" fill="#2d2a28" /><rect x="1055.0" y="716.1" width="2.0" height="3.0" fill="#2d2a28" /><rect x="1059.2" y="715.1" width="2.0" height="3.0" fill="#2d2a28" /><rect x="987.0" y="767.2" width="96.4" height="3.6" fill="#2d2a28" /><rect x="1002.4" y="739.0" width="12.3" height="19.5" fill="#a6abac" /><path d="M1004.4 745.8 L1008.5 753.6 L1012.7 745.8" stroke="#c8875a" stroke-width="1" fill="none" opacity="0.8"/><rect x="1003.4" y="740.0" width="10.3" height="3.9" fill="#8f9a9c" /><rect x="1003.0" y="739.6" width="11.1" height="18.3" fill="none" stroke="#2d2a28" stroke-width="1.3"/><path d="M1002.4 743.8 H1014.7" stroke="#2d2a28" stroke-width="1"/><rect x="1041.1" y="739.0" width="24.7" height="19.5" fill="#a6abac" /><path d="M1043.1 745.8 L1053.4 753.6 L1063.7 745.8" stroke="#c8875a" stroke-width="1" fill="none" opacity="0.8"/><rect x="1042.1" y="740.0" width="22.7" height="3.9" fill="#8f9a9c" /><rect x="1041.7" y="739.6" width="23.5" height="18.3" fill="none" stroke="#2d2a28" stroke-width="1.3"/><path d="M1041.1 743.8 H1065.7" stroke="#2d2a28" stroke-width="1"/><path d="M1053.4 739.0 V758.5" stroke="#2d2a28" stroke-width="1"/><rect x="1043.1" y="753.5" width="2.0" height="3.0" fill="#2d2a28" /><rect x="1047.2" y="754.7" width="2.0" height="3.0" fill="#2d2a28" /><rect x="1051.3" y="754.7" width="2.0" height="3.0" fill="#2d2a28" /><rect x="1055.5" y="753.6" width="2.0" height="3.0" fill="#2d2a28" /><rect x="1059.6" y="754.0" width="2.0" height="3.0" fill="#2d2a28" /><rect x="987.0" y="806.2" width="97.1" height="3.6" fill="#2d2a28" /><rect x="1002.6" y="778.0" width="12.4" height="19.5" fill="#a6abac" /><path d="M1004.6 784.8 L1008.8 792.6 L1013.0 784.8" stroke="#c8875a" stroke-width="1" fill="none" opacity="0.8"/><rect x="1003.6" y="779.0" width="10.4" height="3.9" fill="#8f9a9c" /><rect x="1003.2" y="778.6" width="11.2" height="18.3" fill="none" stroke="#2d2a28" stroke-width="1.3"/><path d="M1002.6 782.8 H1015.0" stroke="#2d2a28" stroke-width="1"/><rect x="1041.4" y="778.0" width="24.7" height="19.5" fill="#a6abac" /><path d="M1043.4 784.8 L1053.8 792.6 L1064.2 784.8" stroke="#c8875a" stroke-width="1" fill="none" opacity="0.8"/><rect x="1042.4" y="779.0" width="22.7" height="3.9" fill="#8f9a9c" /><rect x="1042.0" y="778.6" width="23.5" height="18.3" fill="none" stroke="#2d2a28" stroke-width="1.3"/><path d="M1041.4 782.8 H1066.2" stroke="#2d2a28" stroke-width="1"/><path d="M1053.8 778.0 V797.5" stroke="#2d2a28" stroke-width="1"/><rect x="1043.4" y="794.1" width="2.0" height="3.0" fill="#2d2a28" /><rect x="1047.6" y="794.2" width="2.0" height="3.0" fill="#2d2a28" /><rect x="1051.7" y="794.2" width="2.0" height="3.0" fill="#2d2a28" /><rect x="1055.9" y="792.7" width="2.0" height="3.0" fill="#2d2a28" /><rect x="1060.0" y="792.9" width="2.0" height="3.0" fill="#2d2a28" /><rect x="987.0" y="845.7" width="97.7" height="3.6" fill="#2d2a28" /><rect x="1002.8" y="817.1" width="12.4" height="19.8" fill="#a6abac" /><path d="M1004.8 824.0 L1009.0 831.9 L1013.2 824.0" stroke="#c8875a" stroke-width="1" fill="none" opacity="0.8"/><rect x="1003.8" y="818.1" width="10.4" height="4.0" fill="#8f9a9c" /><rect x="1003.4" y="817.7" width="11.2" height="18.6" fill="none" stroke="#2d2a28" stroke-width="1.3"/><path d="M1002.8 822.0 H1015.2" stroke="#2d2a28" stroke-width="1"/><rect x="1041.8" y="817.1" width="24.8" height="19.8" fill="#a6abac" /><path d="M1043.8 824.0 L1054.2 831.9 L1064.6 824.0" stroke="#c8875a" stroke-width="1" fill="none" opacity="0.8"/><rect x="1042.8" y="818.1" width="22.8" height="4.0" fill="#8f9a9c" /><rect x="1042.4" y="817.7" width="23.6" height="18.6" fill="none" stroke="#2d2a28" stroke-width="1.3"/><path d="M1041.8 822.0 H1066.6" stroke="#2d2a28" stroke-width="1"/><path d="M1054.2 817.1 V836.8" stroke="#2d2a28" stroke-width="1"/><rect x="1043.8" y="833.5" width="2.0" height="3.0" fill="#2d2a28" /><rect x="1048.0" y="832.2" width="2.0" height="3.0" fill="#2d2a28" /><rect x="1052.2" y="831.9" width="2.0" height="3.0" fill="#2d2a28" /><rect x="1056.3" y="832.5" width="2.0" height="3.0" fill="#2d2a28" /><rect x="1060.5" y="833.1" width="2.0" height="3.0" fill="#2d2a28" /><rect x="987.0" y="885.2" width="98.4" height="3.6" fill="#2d2a28" /><rect x="1003.1" y="856.6" width="12.4" height="19.8" fill="#a6abac" /><path d="M1005.1 863.5 L1009.3 871.4 L1013.5 863.5" stroke="#c8875a" stroke-width="1" fill="none" opacity="0.8"/><rect x="1004.1" y="857.6" width="10.4" height="4.0" fill="#8f9a9c" /><rect x="1003.7" y="857.2" width="11.2" height="18.6" fill="none" stroke="#2d2a28" stroke-width="1.3"/><path d="M1003.1 861.5 H1015.5" stroke="#2d2a28" stroke-width="1"/><rect x="1042.2" y="856.6" width="24.9" height="19.8" fill="#a6abac" /><path d="M1044.2 863.5 L1054.7 871.4 L1065.1 863.5" stroke="#c8875a" stroke-width="1" fill="none" opacity="0.8"/><rect x="1043.2" y="857.6" width="22.9" height="4.0" fill="#8f9a9c" /><rect x="1042.8" y="857.2" width="23.7" height="18.6" fill="none" stroke="#2d2a28" stroke-width="1.3"/><path d="M1042.2 861.5 H1067.1" stroke="#2d2a28" stroke-width="1"/><path d="M1054.7 856.6 V876.3" stroke="#2d2a28" stroke-width="1"/><rect x="1044.2" y="872.2" width="2.0" height="3.0" fill="#2d2a28" /><rect x="1048.4" y="873.1" width="2.0" height="3.0" fill="#2d2a28" /><rect x="1052.6" y="873.3" width="2.0" height="3.0" fill="#2d2a28" /><rect x="1056.8" y="871.4" width="2.0" height="3.0" fill="#2d2a28" /><rect x="1060.9" y="872.0" width="2.0" height="3.0" fill="#2d2a28" /><rect x="1003.3" y="896.0" width="12.5" height="19.5" fill="#a6abac" /><path d="M1005.3 902.8 L1009.5 910.6 L1013.8 902.8" stroke="#c8875a" stroke-width="1" fill="none" opacity="0.8"/><rect x="1004.3" y="897.0" width="10.5" height="3.9" fill="#8f9a9c" /><rect x="1003.9" y="896.6" width="11.3" height="18.3" fill="none" stroke="#2d2a28" stroke-width="1.3"/><path d="M1003.3 900.8 H1015.8" stroke="#2d2a28" stroke-width="1"/><rect x="1042.6" y="896.0" width="24.9" height="19.5" fill="#a6abac" /><path d="M1044.6 902.8 L1055.1 910.6 L1065.6 902.8" stroke="#c8875a" stroke-width="1" fill="none" opacity="0.8"/><rect x="1043.6" y="897.0" width="22.9" height="3.9" fill="#8f9a9c" /><rect x="1043.2" y="896.6" width="23.7" height="18.3" fill="none" stroke="#2d2a28" stroke-width="1.3"/><path d="M1042.6 900.8 H1067.6" stroke="#2d2a28" stroke-width="1"/><path d="M1055.1 896.0 V915.5" stroke="#2d2a28" stroke-width="1"/><rect x="1044.6" y="911.4" width="2.0" height="3.0" fill="#2d2a28" /><rect x="1048.8" y="910.6" width="2.0" height="3.0" fill="#2d2a28" /><rect x="1053.0" y="911.6" width="2.0" height="3.0" fill="#2d2a28" /><rect x="1057.2" y="910.7" width="2.0" height="3.0" fill="#2d2a28" /><rect x="1061.4" y="910.8" width="2.0" height="3.0" fill="#2d2a28" /><rect x="1000.0" y="920.0" width="85.0" height="7.0" fill="#2d2a28" /><polygon points="922,312 986,312 989,940 923,940" fill="#b3a8a8"/><rect x="926.0" y="317.0" width="57.0" height="9.0" fill="#2d2a28" /><rect x="923.0" y="357.0" width="64.0" height="6.0" fill="#9d9494" /><rect x="926.0" y="337.9" width="11.5" height="21.1" fill="#a6abac" stroke="#2d2a28" stroke-width="1.4"/><rect x="970.0" y="337.9" width="13.0" height="21.1" fill="#a6abac" stroke="#2d2a28" stroke-width="1.4"/><rect x="941.0" y="338.6" width="7.0" height="11.9" fill="#a8aaa8" stroke="#2d2a28" stroke-width="1"/><rect x="960.0" y="338.6" width="7.0" height="11.9" fill="#a8aaa8" stroke="#2d2a28" stroke-width="1"/><rect x="925.0" y="343.7" width="59.0" height="2.0" fill="#2d2a28" /><rect x="925.0" y="355.4" width="59.0" height="2.2" fill="#2d2a28" /><rect x="925.0" y="343.7" width="1.2" height="13.9" fill="#2d2a28" /><rect x="927.6" y="343.7" width="1.2" height="13.9" fill="#2d2a28" /><rect x="930.2" y="343.7" width="1.2" height="13.9" fill="#2d2a28" /><rect x="932.8" y="343.7" width="1.2" height="13.9" fill="#2d2a28" /><rect x="935.4" y="343.7" width="1.2" height="13.9" fill="#2d2a28" /><rect x="938.0" y="343.7" width="1.2" height="13.9" fill="#2d2a28" /><rect x="940.6" y="343.7" width="1.2" height="13.9" fill="#2d2a28" /><rect x="943.2" y="343.7" width="1.2" height="13.9" fill="#2d2a28" /><rect x="945.8" y="343.7" width="1.2" height="13.9" fill="#2d2a28" /><rect x="948.4" y="343.7" width="1.2" height="13.9" fill="#2d2a28" /><rect x="951.0" y="343.7" width="1.2" height="13.9" fill="#2d2a28" /><rect x="953.6" y="343.7" width="1.2" height="13.9" fill="#2d2a28" /><rect x="956.2" y="343.7" width="1.2" height="13.9" fill="#2d2a28" /><rect x="958.8" y="343.7" width="1.2" height="13.9" fill="#2d2a28" /><rect x="961.4" y="343.7" width="1.2" height="13.9" fill="#2d2a28" /><rect x="964.0" y="343.7" width="1.2" height="13.9" fill="#2d2a28" /><rect x="966.6" y="343.7" width="1.2" height="13.9" fill="#2d2a28" /><rect x="969.2" y="343.7" width="1.2" height="13.9" fill="#2d2a28" /><rect x="971.8" y="343.7" width="1.2" height="13.9" fill="#2d2a28" /><rect x="974.4" y="343.7" width="1.2" height="13.9" fill="#2d2a28" /><rect x="977.0" y="343.7" width="1.2" height="13.9" fill="#2d2a28" /><rect x="979.6" y="343.7" width="1.2" height="13.9" fill="#2d2a28" /><rect x="982.2" y="343.7" width="1.2" height="13.9" fill="#2d2a28" /><rect x="937.0" y="349.5" width="4.0" height="6.1" fill="#2d2a28" /><rect x="951.0" y="349.5" width="4.0" height="6.1" fill="#2d2a28" /><rect x="965.0" y="349.5" width="4.0" height="6.1" fill="#2d2a28" /><rect x="923.0" y="392.0" width="64.0" height="6.0" fill="#9d9494" /><rect x="926.0" y="372.3" width="11.5" height="21.7" fill="#a6abac" stroke="#2d2a28" stroke-width="1.4"/><rect x="970.1" y="372.3" width="13.0" height="21.7" fill="#a6abac" stroke="#2d2a28" stroke-width="1.4"/><rect x="941.0" y="373.0" width="7.0" height="12.2" fill="#a8aaa8" stroke="#2d2a28" stroke-width="1"/><rect x="960.0" y="373.0" width="7.0" height="12.2" fill="#a8aaa8" stroke="#2d2a28" stroke-width="1"/><rect x="925.0" y="378.2" width="59.1" height="2.0" fill="#2d2a28" /><rect x="925.0" y="390.4" width="59.1" height="2.2" fill="#2d2a28" /><rect x="925.0" y="378.2" width="1.2" height="14.3" fill="#2d2a28" /><rect x="927.6" y="378.2" width="1.2" height="14.3" fill="#2d2a28" /><rect x="930.2" y="378.2" width="1.2" height="14.3" fill="#2d2a28" /><rect x="932.8" y="378.2" width="1.2" height="14.3" fill="#2d2a28" /><rect x="935.4" y="378.2" width="1.2" height="14.3" fill="#2d2a28" /><rect x="938.0" y="378.2" width="1.2" height="14.3" fill="#2d2a28" /><rect x="940.6" y="378.2" width="1.2" height="14.3" fill="#2d2a28" /><rect x="943.2" y="378.2" width="1.2" height="14.3" fill="#2d2a28" /><rect x="945.8" y="378.2" width="1.2" height="14.3" fill="#2d2a28" /><rect x="948.4" y="378.2" width="1.2" height="14.3" fill="#2d2a28" /><rect x="951.0" y="378.2" width="1.2" height="14.3" fill="#2d2a28" /><rect x="953.6" y="378.2" width="1.2" height="14.3" fill="#2d2a28" /><rect x="956.2" y="378.2" width="1.2" height="14.3" fill="#2d2a28" /><rect x="958.8" y="378.2" width="1.2" height="14.3" fill="#2d2a28" /><rect x="961.4" y="378.2" width="1.2" height="14.3" fill="#2d2a28" /><rect x="964.0" y="378.2" width="1.2" height="14.3" fill="#2d2a28" /><rect x="966.6" y="378.2" width="1.2" height="14.3" fill="#2d2a28" /><rect x="969.2" y="378.2" width="1.2" height="14.3" fill="#2d2a28" /><rect x="971.8" y="378.2" width="1.2" height="14.3" fill="#2d2a28" /><rect x="974.4" y="378.2" width="1.2" height="14.3" fill="#2d2a28" /><rect x="977.0" y="378.2" width="1.2" height="14.3" fill="#2d2a28" /><rect x="979.6" y="378.2" width="1.2" height="14.3" fill="#2d2a28" /><rect x="982.2" y="378.2" width="1.2" height="14.3" fill="#2d2a28" /><rect x="937.0" y="384.2" width="4.0" height="6.3" fill="#2d2a28" /><rect x="951.0" y="384.2" width="4.0" height="6.3" fill="#2d2a28" /><rect x="965.0" y="384.2" width="4.0" height="6.3" fill="#2d2a28" /><rect x="923.0" y="428.0" width="64.0" height="6.0" fill="#9d9494" /><rect x="926.0" y="407.7" width="11.5" height="22.3" fill="#a6abac" stroke="#2d2a28" stroke-width="1.4"/><rect x="970.2" y="407.7" width="13.0" height="22.3" fill="#a6abac" stroke="#2d2a28" stroke-width="1.4"/><rect x="941.0" y="408.4" width="7.0" height="12.6" fill="#a8aaa8" stroke="#2d2a28" stroke-width="1"/><rect x="960.0" y="408.4" width="7.0" height="12.6" fill="#a8aaa8" stroke="#2d2a28" stroke-width="1"/><rect x="925.0" y="413.8" width="59.2" height="2.0" fill="#2d2a28" /><rect x="925.0" y="426.4" width="59.2" height="2.2" fill="#2d2a28" /><rect x="925.0" y="413.8" width="1.2" height="14.8" fill="#2d2a28" /><rect x="927.6" y="413.8" width="1.2" height="14.8" fill="#2d2a28" /><rect x="930.2" y="413.8" width="1.2" height="14.8" fill="#2d2a28" /><rect x="932.8" y="413.8" width="1.2" height="14.8" fill="#2d2a28" /><rect x="935.4" y="413.8" width="1.2" height="14.8" fill="#2d2a28" /><rect x="938.0" y="413.8" width="1.2" height="14.8" fill="#2d2a28" /><rect x="940.6" y="413.8" width="1.2" height="14.8" fill="#2d2a28" /><rect x="943.2" y="413.8" width="1.2" height="14.8" fill="#2d2a28" /><rect x="945.8" y="413.8" width="1.2" height="14.8" fill="#2d2a28" /><rect x="948.4" y="413.8" width="1.2" height="14.8" fill="#2d2a28" /><rect x="951.0" y="413.8" width="1.2" height="14.8" fill="#2d2a28" /><rect x="953.6" y="413.8" width="1.2" height="14.8" fill="#2d2a28" /><rect x="956.2" y="413.8" width="1.2" height="14.8" fill="#2d2a28" /><rect x="958.8" y="413.8" width="1.2" height="14.8" fill="#2d2a28" /><rect x="961.4" y="413.8" width="1.2" height="14.8" fill="#2d2a28" /><rect x="964.0" y="413.8" width="1.2" height="14.8" fill="#2d2a28" /><rect x="966.6" y="413.8" width="1.2" height="14.8" fill="#2d2a28" /><rect x="969.2" y="413.8" width="1.2" height="14.8" fill="#2d2a28" /><rect x="971.8" y="413.8" width="1.2" height="14.8" fill="#2d2a28" /><rect x="974.4" y="413.8" width="1.2" height="14.8" fill="#2d2a28" /><rect x="977.0" y="413.8" width="1.2" height="14.8" fill="#2d2a28" /><rect x="979.6" y="413.8" width="1.2" height="14.8" fill="#2d2a28" /><rect x="982.2" y="413.8" width="1.2" height="14.8" fill="#2d2a28" /><rect x="937.0" y="419.9" width="4.0" height="6.5" fill="#2d2a28" /><rect x="951.0" y="419.9" width="4.0" height="6.5" fill="#2d2a28" /><rect x="965.0" y="419.9" width="4.0" height="6.5" fill="#2d2a28" /><rect x="923.0" y="464.0" width="64.0" height="6.0" fill="#9d9494" /><rect x="926.0" y="443.7" width="11.5" height="22.3" fill="#a6abac" stroke="#2d2a28" stroke-width="1.4"/><rect x="970.4" y="443.7" width="13.0" height="22.3" fill="#a6abac" stroke="#2d2a28" stroke-width="1.4"/><rect x="941.0" y="444.4" width="7.0" height="12.6" fill="#a8aaa8" stroke="#2d2a28" stroke-width="1"/><rect x="960.0" y="444.4" width="7.0" height="12.6" fill="#a8aaa8" stroke="#2d2a28" stroke-width="1"/><rect x="925.0" y="449.8" width="59.4" height="2.0" fill="#2d2a28" /><rect x="925.0" y="462.4" width="59.4" height="2.2" fill="#2d2a28" /><rect x="925.0" y="449.8" width="1.2" height="14.8" fill="#2d2a28" /><rect x="927.6" y="449.8" width="1.2" height="14.8" fill="#2d2a28" /><rect x="930.2" y="449.8" width="1.2" height="14.8" fill="#2d2a28" /><rect x="932.8" y="449.8" width="1.2" height="14.8" fill="#2d2a28" /><rect x="935.4" y="449.8" width="1.2" height="14.8" fill="#2d2a28" /><rect x="938.0" y="449.8" width="1.2" height="14.8" fill="#2d2a28" /><rect x="940.6" y="449.8" width="1.2" height="14.8" fill="#2d2a28" /><rect x="943.2" y="449.8" width="1.2" height="14.8" fill="#2d2a28" /><rect x="945.8" y="449.8" width="1.2" height="14.8" fill="#2d2a28" /><rect x="948.4" y="449.8" width="1.2" height="14.8" fill="#2d2a28" /><rect x="951.0" y="449.8" width="1.2" height="14.8" fill="#2d2a28" /><rect x="953.6" y="449.8" width="1.2" height="14.8" fill="#2d2a28" /><rect x="956.2" y="449.8" width="1.2" height="14.8" fill="#2d2a28" /><rect x="958.8" y="449.8" width="1.2" height="14.8" fill="#2d2a28" /><rect x="961.4" y="449.8" width="1.2" height="14.8" fill="#2d2a28" /><rect x="964.0" y="449.8" width="1.2" height="14.8" fill="#2d2a28" /><rect x="966.6" y="449.8" width="1.2" height="14.8" fill="#2d2a28" /><rect x="969.2" y="449.8" width="1.2" height="14.8" fill="#2d2a28" /><rect x="971.8" y="449.8" width="1.2" height="14.8" fill="#2d2a28" /><rect x="974.4" y="449.8" width="1.2" height="14.8" fill="#2d2a28" /><rect x="977.0" y="449.8" width="1.2" height="14.8" fill="#2d2a28" /><rect x="979.6" y="449.8" width="1.2" height="14.8" fill="#2d2a28" /><rect x="982.2" y="449.8" width="1.2" height="14.8" fill="#2d2a28" /><rect x="937.0" y="455.9" width="4.0" height="6.5" fill="#2d2a28" /><rect x="951.0" y="455.9" width="4.0" height="6.5" fill="#2d2a28" /><rect x="965.0" y="455.9" width="4.0" height="6.5" fill="#2d2a28" /><rect x="923.0" y="500.0" width="64.0" height="6.0" fill="#9d9494" /><rect x="926.0" y="479.7" width="11.5" height="22.3" fill="#a6abac" stroke="#2d2a28" stroke-width="1.4"/><rect x="970.5" y="479.7" width="13.0" height="22.3" fill="#a6abac" stroke="#2d2a28" stroke-width="1.4"/><rect x="941.0" y="480.4" width="7.0" height="12.6" fill="#a8aaa8" stroke="#2d2a28" stroke-width="1"/><rect x="960.0" y="480.4" width="7.0" height="12.6" fill="#a8aaa8" stroke="#2d2a28" stroke-width="1"/><rect x="925.0" y="485.8" width="59.5" height="2.0" fill="#2d2a28" /><rect x="925.0" y="498.4" width="59.5" height="2.2" fill="#2d2a28" /><rect x="925.0" y="485.8" width="1.2" height="14.8" fill="#2d2a28" /><rect x="927.6" y="485.8" width="1.2" height="14.8" fill="#2d2a28" /><rect x="930.2" y="485.8" width="1.2" height="14.8" fill="#2d2a28" /><rect x="932.8" y="485.8" width="1.2" height="14.8" fill="#2d2a28" /><rect x="935.4" y="485.8" width="1.2" height="14.8" fill="#2d2a28" /><rect x="938.0" y="485.8" width="1.2" height="14.8" fill="#2d2a28" /><rect x="940.6" y="485.8" width="1.2" height="14.8" fill="#2d2a28" /><rect x="943.2" y="485.8" width="1.2" height="14.8" fill="#2d2a28" /><rect x="945.8" y="485.8" width="1.2" height="14.8" fill="#2d2a28" /><rect x="948.4" y="485.8" width="1.2" height="14.8" fill="#2d2a28" /><rect x="951.0" y="485.8" width="1.2" height="14.8" fill="#2d2a28" /><rect x="953.6" y="485.8" width="1.2" height="14.8" fill="#2d2a28" /><rect x="956.2" y="485.8" width="1.2" height="14.8" fill="#2d2a28" /><rect x="958.8" y="485.8" width="1.2" height="14.8" fill="#2d2a28" /><rect x="961.4" y="485.8" width="1.2" height="14.8" fill="#2d2a28" /><rect x="964.0" y="485.8" width="1.2" height="14.8" fill="#2d2a28" /><rect x="966.6" y="485.8" width="1.2" height="14.8" fill="#2d2a28" /><rect x="969.2" y="485.8" width="1.2" height="14.8" fill="#2d2a28" /><rect x="971.8" y="485.8" width="1.2" height="14.8" fill="#2d2a28" /><rect x="974.4" y="485.8" width="1.2" height="14.8" fill="#2d2a28" /><rect x="977.0" y="485.8" width="1.2" height="14.8" fill="#2d2a28" /><rect x="979.6" y="485.8" width="1.2" height="14.8" fill="#2d2a28" /><rect x="982.2" y="485.8" width="1.2" height="14.8" fill="#2d2a28" /><rect x="937.0" y="491.9" width="4.0" height="6.5" fill="#2d2a28" /><rect x="951.0" y="491.9" width="4.0" height="6.5" fill="#2d2a28" /><rect x="965.0" y="491.9" width="4.0" height="6.5" fill="#2d2a28" /><rect x="923.0" y="537.0" width="64.0" height="6.0" fill="#9d9494" /><rect x="926.0" y="516.1" width="11.5" height="22.9" fill="#a6abac" stroke="#2d2a28" stroke-width="1.4"/><rect x="970.6" y="516.1" width="13.0" height="22.9" fill="#a6abac" stroke="#2d2a28" stroke-width="1.4"/><rect x="941.0" y="516.8" width="7.0" height="12.9" fill="#a8aaa8" stroke="#2d2a28" stroke-width="1"/><rect x="960.0" y="516.8" width="7.0" height="12.9" fill="#a8aaa8" stroke="#2d2a28" stroke-width="1"/><rect x="925.0" y="522.4" width="59.6" height="2.0" fill="#2d2a28" /><rect x="925.0" y="535.3" width="59.6" height="2.2" fill="#2d2a28" /><rect x="925.0" y="522.4" width="1.2" height="15.2" fill="#2d2a28" /><rect x="927.6" y="522.4" width="1.2" height="15.2" fill="#2d2a28" /><rect x="930.2" y="522.4" width="1.2" height="15.2" fill="#2d2a28" /><rect x="932.8" y="522.4" width="1.2" height="15.2" fill="#2d2a28" /><rect x="935.4" y="522.4" width="1.2" height="15.2" fill="#2d2a28" /><rect x="938.0" y="522.4" width="1.2" height="15.2" fill="#2d2a28" /><rect x="940.6" y="522.4" width="1.2" height="15.2" fill="#2d2a28" /><rect x="943.2" y="522.4" width="1.2" height="15.2" fill="#2d2a28" /><rect x="945.8" y="522.4" width="1.2" height="15.2" fill="#2d2a28" /><rect x="948.4" y="522.4" width="1.2" height="15.2" fill="#2d2a28" /><rect x="951.0" y="522.4" width="1.2" height="15.2" fill="#2d2a28" /><rect x="953.6" y="522.4" width="1.2" height="15.2" fill="#2d2a28" /><rect x="956.2" y="522.4" width="1.2" height="15.2" fill="#2d2a28" /><rect x="958.8" y="522.4" width="1.2" height="15.2" fill="#2d2a28" /><rect x="961.4" y="522.4" width="1.2" height="15.2" fill="#2d2a28" /><rect x="964.0" y="522.4" width="1.2" height="15.2" fill="#2d2a28" /><rect x="966.6" y="522.4" width="1.2" height="15.2" fill="#2d2a28" /><rect x="969.2" y="522.4" width="1.2" height="15.2" fill="#2d2a28" /><rect x="971.8" y="522.4" width="1.2" height="15.2" fill="#2d2a28" /><rect x="974.4" y="522.4" width="1.2" height="15.2" fill="#2d2a28" /><rect x="977.0" y="522.4" width="1.2" height="15.2" fill="#2d2a28" /><rect x="979.6" y="522.4" width="1.2" height="15.2" fill="#2d2a28" /><rect x="982.2" y="522.4" width="1.2" height="15.2" fill="#2d2a28" /><rect x="937.0" y="528.6" width="4.0" height="6.7" fill="#2d2a28" /><rect x="951.0" y="528.6" width="4.0" height="6.7" fill="#2d2a28" /><rect x="965.0" y="528.6" width="4.0" height="6.7" fill="#2d2a28" /><rect x="923.0" y="573.0" width="64.0" height="6.0" fill="#9d9494" /><rect x="926.0" y="552.7" width="11.5" height="22.3" fill="#a6abac" stroke="#2d2a28" stroke-width="1.4"/><rect x="970.7" y="552.7" width="13.0" height="22.3" fill="#a6abac" stroke="#2d2a28" stroke-width="1.4"/><rect x="941.0" y="553.4" width="7.0" height="12.6" fill="#a8aaa8" stroke="#2d2a28" stroke-width="1"/><rect x="960.0" y="553.4" width="7.0" height="12.6" fill="#a8aaa8" stroke="#2d2a28" stroke-width="1"/><rect x="925.0" y="558.8" width="59.7" height="2.0" fill="#2d2a28" /><rect x="925.0" y="571.4" width="59.7" height="2.2" fill="#2d2a28" /><rect x="925.0" y="558.8" width="1.2" height="14.8" fill="#2d2a28" /><rect x="927.6" y="558.8" width="1.2" height="14.8" fill="#2d2a28" /><rect x="930.2" y="558.8" width="1.2" height="14.8" fill="#2d2a28" /><rect x="932.8" y="558.8" width="1.2" height="14.8" fill="#2d2a28" /><rect x="935.4" y="558.8" width="1.2" height="14.8" fill="#2d2a28" /><rect x="938.0" y="558.8" width="1.2" height="14.8" fill="#2d2a28" /><rect x="940.6" y="558.8" width="1.2" height="14.8" fill="#2d2a28" /><rect x="943.2" y="558.8" width="1.2" height="14.8" fill="#2d2a28" /><rect x="945.8" y="558.8" width="1.2" height="14.8" fill="#2d2a28" /><rect x="948.4" y="558.8" width="1.2" height="14.8" fill="#2d2a28" /><rect x="951.0" y="558.8" width="1.2" height="14.8" fill="#2d2a28" /><rect x="953.6" y="558.8" width="1.2" height="14.8" fill="#2d2a28" /><rect x="956.2" y="558.8" width="1.2" height="14.8" fill="#2d2a28" /><rect x="958.8" y="558.8" width="1.2" height="14.8" fill="#2d2a28" /><rect x="961.4" y="558.8" width="1.2" height="14.8" fill="#2d2a28" /><rect x="964.0" y="558.8" width="1.2" height="14.8" fill="#2d2a28" /><rect x="966.6" y="558.8" width="1.2" height="14.8" fill="#2d2a28" /><rect x="969.2" y="558.8" width="1.2" height="14.8" fill="#2d2a28" /><rect x="971.8" y="558.8" width="1.2" height="14.8" fill="#2d2a28" /><rect x="974.4" y="558.8" width="1.2" height="14.8" fill="#2d2a28" /><rect x="977.0" y="558.8" width="1.2" height="14.8" fill="#2d2a28" /><rect x="979.6" y="558.8" width="1.2" height="14.8" fill="#2d2a28" /><rect x="982.2" y="558.8" width="1.2" height="14.8" fill="#2d2a28" /><rect x="937.0" y="564.9" width="4.0" height="6.5" fill="#2d2a28" /><rect x="951.0" y="564.9" width="4.0" height="6.5" fill="#2d2a28" /><rect x="965.0" y="564.9" width="4.0" height="6.5" fill="#2d2a28" /><rect x="923.0" y="611.5" width="64.0" height="6.0" fill="#9d9494" /><rect x="926.0" y="589.6" width="11.5" height="23.9" fill="#a6abac" stroke="#2d2a28" stroke-width="1.4"/><rect x="970.8" y="589.6" width="13.0" height="23.9" fill="#a6abac" stroke="#2d2a28" stroke-width="1.4"/><rect x="941.0" y="590.4" width="7.0" height="13.5" fill="#a8aaa8" stroke="#2d2a28" stroke-width="1"/><rect x="960.0" y="590.4" width="7.0" height="13.5" fill="#a8aaa8" stroke="#2d2a28" stroke-width="1"/><rect x="925.0" y="596.2" width="59.8" height="2.0" fill="#2d2a28" /><rect x="925.0" y="609.8" width="59.8" height="2.2" fill="#2d2a28" /><rect x="925.0" y="596.2" width="1.2" height="15.8" fill="#2d2a28" /><rect x="927.6" y="596.2" width="1.2" height="15.8" fill="#2d2a28" /><rect x="930.2" y="596.2" width="1.2" height="15.8" fill="#2d2a28" /><rect x="932.8" y="596.2" width="1.2" height="15.8" fill="#2d2a28" /><rect x="935.4" y="596.2" width="1.2" height="15.8" fill="#2d2a28" /><rect x="938.0" y="596.2" width="1.2" height="15.8" fill="#2d2a28" /><rect x="940.6" y="596.2" width="1.2" height="15.8" fill="#2d2a28" /><rect x="943.2" y="596.2" width="1.2" height="15.8" fill="#2d2a28" /><rect x="945.8" y="596.2" width="1.2" height="15.8" fill="#2d2a28" /><rect x="948.4" y="596.2" width="1.2" height="15.8" fill="#2d2a28" /><rect x="951.0" y="596.2" width="1.2" height="15.8" fill="#2d2a28" /><rect x="953.6" y="596.2" width="1.2" height="15.8" fill="#2d2a28" /><rect x="956.2" y="596.2" width="1.2" height="15.8" fill="#2d2a28" /><rect x="958.8" y="596.2" width="1.2" height="15.8" fill="#2d2a28" /><rect x="961.4" y="596.2" width="1.2" height="15.8" fill="#2d2a28" /><rect x="964.0" y="596.2" width="1.2" height="15.8" fill="#2d2a28" /><rect x="966.6" y="596.2" width="1.2" height="15.8" fill="#2d2a28" /><rect x="969.2" y="596.2" width="1.2" height="15.8" fill="#2d2a28" /><rect x="971.8" y="596.2" width="1.2" height="15.8" fill="#2d2a28" /><rect x="974.4" y="596.2" width="1.2" height="15.8" fill="#2d2a28" /><rect x="977.0" y="596.2" width="1.2" height="15.8" fill="#2d2a28" /><rect x="979.6" y="596.2" width="1.2" height="15.8" fill="#2d2a28" /><rect x="982.2" y="596.2" width="1.2" height="15.8" fill="#2d2a28" /><rect x="937.0" y="602.7" width="4.0" height="6.9" fill="#2d2a28" /><rect x="951.0" y="602.7" width="4.0" height="6.9" fill="#2d2a28" /><rect x="965.0" y="602.7" width="4.0" height="6.9" fill="#2d2a28" /><rect x="923.0" y="650.0" width="64.0" height="6.0" fill="#9d9494" /><rect x="926.0" y="628.1" width="11.5" height="23.9" fill="#a6abac" stroke="#2d2a28" stroke-width="1.4"/><rect x="971.0" y="628.1" width="13.0" height="23.9" fill="#a6abac" stroke="#2d2a28" stroke-width="1.4"/><rect x="941.0" y="628.9" width="7.0" height="13.5" fill="#a8aaa8" stroke="#2d2a28" stroke-width="1"/><rect x="960.0" y="628.9" width="7.0" height="13.5" fill="#a8aaa8" stroke="#2d2a28" stroke-width="1"/><rect x="925.0" y="634.7" width="60.0" height="2.0" fill="#2d2a28" /><rect x="925.0" y="648.3" width="60.0" height="2.2" fill="#2d2a28" /><rect x="925.0" y="634.7" width="1.2" height="15.8" fill="#2d2a28" /><rect x="927.6" y="634.7" width="1.2" height="15.8" fill="#2d2a28" /><rect x="930.2" y="634.7" width="1.2" height="15.8" fill="#2d2a28" /><rect x="932.8" y="634.7" width="1.2" height="15.8" fill="#2d2a28" /><rect x="935.4" y="634.7" width="1.2" height="15.8" fill="#2d2a28" /><rect x="938.0" y="634.7" width="1.2" height="15.8" fill="#2d2a28" /><rect x="940.6" y="634.7" width="1.2" height="15.8" fill="#2d2a28" /><rect x="943.2" y="634.7" width="1.2" height="15.8" fill="#2d2a28" /><rect x="945.8" y="634.7" width="1.2" height="15.8" fill="#2d2a28" /><rect x="948.4" y="634.7" width="1.2" height="15.8" fill="#2d2a28" /><rect x="951.0" y="634.7" width="1.2" height="15.8" fill="#2d2a28" /><rect x="953.6" y="634.7" width="1.2" height="15.8" fill="#2d2a28" /><rect x="956.2" y="634.7" width="1.2" height="15.8" fill="#2d2a28" /><rect x="958.8" y="634.7" width="1.2" height="15.8" fill="#2d2a28" /><rect x="961.4" y="634.7" width="1.2" height="15.8" fill="#2d2a28" /><rect x="964.0" y="634.7" width="1.2" height="15.8" fill="#2d2a28" /><rect x="966.6" y="634.7" width="1.2" height="15.8" fill="#2d2a28" /><rect x="969.2" y="634.7" width="1.2" height="15.8" fill="#2d2a28" /><rect x="971.8" y="634.7" width="1.2" height="15.8" fill="#2d2a28" /><rect x="974.4" y="634.7" width="1.2" height="15.8" fill="#2d2a28" /><rect x="977.0" y="634.7" width="1.2" height="15.8" fill="#2d2a28" /><rect x="979.6" y="634.7" width="1.2" height="15.8" fill="#2d2a28" /><rect x="982.2" y="634.7" width="1.2" height="15.8" fill="#2d2a28" /><rect x="937.0" y="641.2" width="4.0" height="6.9" fill="#2d2a28" /><rect x="951.0" y="641.2" width="4.0" height="6.9" fill="#2d2a28" /><rect x="965.0" y="641.2" width="4.0" height="6.9" fill="#2d2a28" /><rect x="923.0" y="688.0" width="64.0" height="6.0" fill="#9d9494" /><rect x="926.0" y="666.4" width="11.5" height="23.6" fill="#a6abac" stroke="#2d2a28" stroke-width="1.4"/><rect x="971.1" y="666.4" width="13.0" height="23.6" fill="#a6abac" stroke="#2d2a28" stroke-width="1.4"/><rect x="941.0" y="667.2" width="7.0" height="13.3" fill="#a8aaa8" stroke="#2d2a28" stroke-width="1"/><rect x="960.0" y="667.2" width="7.0" height="13.3" fill="#a8aaa8" stroke="#2d2a28" stroke-width="1"/><rect x="925.0" y="672.9" width="60.1" height="2.0" fill="#2d2a28" /><rect x="925.0" y="686.3" width="60.1" height="2.2" fill="#2d2a28" /><rect x="925.0" y="672.9" width="1.2" height="15.6" fill="#2d2a28" /><rect x="927.6" y="672.9" width="1.2" height="15.6" fill="#2d2a28" /><rect x="930.2" y="672.9" width="1.2" height="15.6" fill="#2d2a28" /><rect x="932.8" y="672.9" width="1.2" height="15.6" fill="#2d2a28" /><rect x="935.4" y="672.9" width="1.2" height="15.6" fill="#2d2a28" /><rect x="938.0" y="672.9" width="1.2" height="15.6" fill="#2d2a28" /><rect x="940.6" y="672.9" width="1.2" height="15.6" fill="#2d2a28" /><rect x="943.2" y="672.9" width="1.2" height="15.6" fill="#2d2a28" /><rect x="945.8" y="672.9" width="1.2" height="15.6" fill="#2d2a28" /><rect x="948.4" y="672.9" width="1.2" height="15.6" fill="#2d2a28" /><rect x="951.0" y="672.9" width="1.2" height="15.6" fill="#2d2a28" /><rect x="953.6" y="672.9" width="1.2" height="15.6" fill="#2d2a28" /><rect x="956.2" y="672.9" width="1.2" height="15.6" fill="#2d2a28" /><rect x="958.8" y="672.9" width="1.2" height="15.6" fill="#2d2a28" /><rect x="961.4" y="672.9" width="1.2" height="15.6" fill="#2d2a28" /><rect x="964.0" y="672.9" width="1.2" height="15.6" fill="#2d2a28" /><rect x="966.6" y="672.9" width="1.2" height="15.6" fill="#2d2a28" /><rect x="969.2" y="672.9" width="1.2" height="15.6" fill="#2d2a28" /><rect x="971.8" y="672.9" width="1.2" height="15.6" fill="#2d2a28" /><rect x="974.4" y="672.9" width="1.2" height="15.6" fill="#2d2a28" /><rect x="977.0" y="672.9" width="1.2" height="15.6" fill="#2d2a28" /><rect x="979.6" y="672.9" width="1.2" height="15.6" fill="#2d2a28" /><rect x="982.2" y="672.9" width="1.2" height="15.6" fill="#2d2a28" /><rect x="937.0" y="679.4" width="4.0" height="6.8" fill="#2d2a28" /><rect x="951.0" y="679.4" width="4.0" height="6.8" fill="#2d2a28" /><rect x="965.0" y="679.4" width="4.0" height="6.8" fill="#2d2a28" /><rect x="923.0" y="726.0" width="64.0" height="6.0" fill="#9d9494" /><rect x="926.0" y="704.4" width="11.5" height="23.6" fill="#a6abac" stroke="#2d2a28" stroke-width="1.4"/><rect x="971.2" y="704.4" width="13.0" height="23.6" fill="#a6abac" stroke="#2d2a28" stroke-width="1.4"/><rect x="941.0" y="705.2" width="7.0" height="13.3" fill="#a8aaa8" stroke="#2d2a28" stroke-width="1"/><rect x="960.0" y="705.2" width="7.0" height="13.3" fill="#a8aaa8" stroke="#2d2a28" stroke-width="1"/><rect x="925.0" y="710.9" width="60.2" height="2.0" fill="#2d2a28" /><rect x="925.0" y="724.3" width="60.2" height="2.2" fill="#2d2a28" /><rect x="925.0" y="710.9" width="1.2" height="15.6" fill="#2d2a28" /><rect x="927.6" y="710.9" width="1.2" height="15.6" fill="#2d2a28" /><rect x="930.2" y="710.9" width="1.2" height="15.6" fill="#2d2a28" /><rect x="932.8" y="710.9" width="1.2" height="15.6" fill="#2d2a28" /><rect x="935.4" y="710.9" width="1.2" height="15.6" fill="#2d2a28" /><rect x="938.0" y="710.9" width="1.2" height="15.6" fill="#2d2a28" /><rect x="940.6" y="710.9" width="1.2" height="15.6" fill="#2d2a28" /><rect x="943.2" y="710.9" width="1.2" height="15.6" fill="#2d2a28" /><rect x="945.8" y="710.9" width="1.2" height="15.6" fill="#2d2a28" /><rect x="948.4" y="710.9" width="1.2" height="15.6" fill="#2d2a28" /><rect x="951.0" y="710.9" width="1.2" height="15.6" fill="#2d2a28" /><rect x="953.6" y="710.9" width="1.2" height="15.6" fill="#2d2a28" /><rect x="956.2" y="710.9" width="1.2" height="15.6" fill="#2d2a28" /><rect x="958.8" y="710.9" width="1.2" height="15.6" fill="#2d2a28" /><rect x="961.4" y="710.9" width="1.2" height="15.6" fill="#2d2a28" /><rect x="964.0" y="710.9" width="1.2" height="15.6" fill="#2d2a28" /><rect x="966.6" y="710.9" width="1.2" height="15.6" fill="#2d2a28" /><rect x="969.2" y="710.9" width="1.2" height="15.6" fill="#2d2a28" /><rect x="971.8" y="710.9" width="1.2" height="15.6" fill="#2d2a28" /><rect x="974.4" y="710.9" width="1.2" height="15.6" fill="#2d2a28" /><rect x="977.0" y="710.9" width="1.2" height="15.6" fill="#2d2a28" /><rect x="979.6" y="710.9" width="1.2" height="15.6" fill="#2d2a28" /><rect x="982.2" y="710.9" width="1.2" height="15.6" fill="#2d2a28" /><rect x="937.0" y="717.4" width="4.0" height="6.8" fill="#2d2a28" /><rect x="951.0" y="717.4" width="4.0" height="6.8" fill="#2d2a28" /><rect x="965.0" y="717.4" width="4.0" height="6.8" fill="#2d2a28" /><rect x="923.0" y="765.0" width="64.0" height="6.0" fill="#9d9494" /><rect x="926.0" y="742.8" width="11.5" height="24.2" fill="#a6abac" stroke="#2d2a28" stroke-width="1.4"/><rect x="971.3" y="742.8" width="13.0" height="24.2" fill="#a6abac" stroke="#2d2a28" stroke-width="1.4"/><rect x="941.0" y="743.6" width="7.0" height="13.6" fill="#a8aaa8" stroke="#2d2a28" stroke-width="1"/><rect x="960.0" y="743.6" width="7.0" height="13.6" fill="#a8aaa8" stroke="#2d2a28" stroke-width="1"/><rect x="925.0" y="749.5" width="60.3" height="2.0" fill="#2d2a28" /><rect x="925.0" y="763.2" width="60.3" height="2.2" fill="#2d2a28" /><rect x="925.0" y="749.5" width="1.2" height="16.0" fill="#2d2a28" /><rect x="927.6" y="749.5" width="1.2" height="16.0" fill="#2d2a28" /><rect x="930.2" y="749.5" width="1.2" height="16.0" fill="#2d2a28" /><rect x="932.8" y="749.5" width="1.2" height="16.0" fill="#2d2a28" /><rect x="935.4" y="749.5" width="1.2" height="16.0" fill="#2d2a28" /><rect x="938.0" y="749.5" width="1.2" height="16.0" fill="#2d2a28" /><rect x="940.6" y="749.5" width="1.2" height="16.0" fill="#2d2a28" /><rect x="943.2" y="749.5" width="1.2" height="16.0" fill="#2d2a28" /><rect x="945.8" y="749.5" width="1.2" height="16.0" fill="#2d2a28" /><rect x="948.4" y="749.5" width="1.2" height="16.0" fill="#2d2a28" /><rect x="951.0" y="749.5" width="1.2" height="16.0" fill="#2d2a28" /><rect x="953.6" y="749.5" width="1.2" height="16.0" fill="#2d2a28" /><rect x="956.2" y="749.5" width="1.2" height="16.0" fill="#2d2a28" /><rect x="958.8" y="749.5" width="1.2" height="16.0" fill="#2d2a28" /><rect x="961.4" y="749.5" width="1.2" height="16.0" fill="#2d2a28" /><rect x="964.0" y="749.5" width="1.2" height="16.0" fill="#2d2a28" /><rect x="966.6" y="749.5" width="1.2" height="16.0" fill="#2d2a28" /><rect x="969.2" y="749.5" width="1.2" height="16.0" fill="#2d2a28" /><rect x="971.8" y="749.5" width="1.2" height="16.0" fill="#2d2a28" /><rect x="974.4" y="749.5" width="1.2" height="16.0" fill="#2d2a28" /><rect x="977.0" y="749.5" width="1.2" height="16.0" fill="#2d2a28" /><rect x="979.6" y="749.5" width="1.2" height="16.0" fill="#2d2a28" /><rect x="982.2" y="749.5" width="1.2" height="16.0" fill="#2d2a28" /><rect x="984.8" y="749.5" width="1.2" height="16.0" fill="#2d2a28" /><rect x="937.0" y="756.1" width="4.0" height="7.0" fill="#2d2a28" /><rect x="951.0" y="756.1" width="4.0" height="7.0" fill="#2d2a28" /><rect x="965.0" y="756.1" width="4.0" height="7.0" fill="#2d2a28" /><rect x="923.0" y="804.0" width="64.0" height="6.0" fill="#9d9494" /><rect x="926.0" y="781.8" width="11.5" height="24.2" fill="#a6abac" stroke="#2d2a28" stroke-width="1.4"/><rect x="971.5" y="781.8" width="13.0" height="24.2" fill="#a6abac" stroke="#2d2a28" stroke-width="1.4"/><rect x="941.0" y="782.6" width="7.0" height="13.6" fill="#a8aaa8" stroke="#2d2a28" stroke-width="1"/><rect x="960.0" y="782.6" width="7.0" height="13.6" fill="#a8aaa8" stroke="#2d2a28" stroke-width="1"/><rect x="925.0" y="788.5" width="60.5" height="2.0" fill="#2d2a28" /><rect x="925.0" y="802.2" width="60.5" height="2.2" fill="#2d2a28" /><rect x="925.0" y="788.5" width="1.2" height="16.0" fill="#2d2a28" /><rect x="927.6" y="788.5" width="1.2" height="16.0" fill="#2d2a28" /><rect x="930.2" y="788.5" width="1.2" height="16.0" fill="#2d2a28" /><rect x="932.8" y="788.5" width="1.2" height="16.0" fill="#2d2a28" /><rect x="935.4" y="788.5" width="1.2" height="16.0" fill="#2d2a28" /><rect x="938.0" y="788.5" width="1.2" height="16.0" fill="#2d2a28" /><rect x="940.6" y="788.5" width="1.2" height="16.0" fill="#2d2a28" /><rect x="943.2" y="788.5" width="1.2" height="16.0" fill="#2d2a28" /><rect x="945.8" y="788.5" width="1.2" height="16.0" fill="#2d2a28" /><rect x="948.4" y="788.5" width="1.2" height="16.0" fill="#2d2a28" /><rect x="951.0" y="788.5" width="1.2" height="16.0" fill="#2d2a28" /><rect x="953.6" y="788.5" width="1.2" height="16.0" fill="#2d2a28" /><rect x="956.2" y="788.5" width="1.2" height="16.0" fill="#2d2a28" /><rect x="958.8" y="788.5" width="1.2" height="16.0" fill="#2d2a28" /><rect x="961.4" y="788.5" width="1.2" height="16.0" fill="#2d2a28" /><rect x="964.0" y="788.5" width="1.2" height="16.0" fill="#2d2a28" /><rect x="966.6" y="788.5" width="1.2" height="16.0" fill="#2d2a28" /><rect x="969.2" y="788.5" width="1.2" height="16.0" fill="#2d2a28" /><rect x="971.8" y="788.5" width="1.2" height="16.0" fill="#2d2a28" /><rect x="974.4" y="788.5" width="1.2" height="16.0" fill="#2d2a28" /><rect x="977.0" y="788.5" width="1.2" height="16.0" fill="#2d2a28" /><rect x="979.6" y="788.5" width="1.2" height="16.0" fill="#2d2a28" /><rect x="982.2" y="788.5" width="1.2" height="16.0" fill="#2d2a28" /><rect x="984.8" y="788.5" width="1.2" height="16.0" fill="#2d2a28" /><rect x="937.0" y="795.1" width="4.0" height="7.0" fill="#2d2a28" /><rect x="951.0" y="795.1" width="4.0" height="7.0" fill="#2d2a28" /><rect x="965.0" y="795.1" width="4.0" height="7.0" fill="#2d2a28" /><rect x="923.0" y="843.5" width="64.0" height="6.0" fill="#9d9494" /><rect x="926.0" y="821.0" width="11.5" height="24.5" fill="#a6abac" stroke="#2d2a28" stroke-width="1.4"/><rect x="971.6" y="821.0" width="13.0" height="24.5" fill="#a6abac" stroke="#2d2a28" stroke-width="1.4"/><rect x="941.0" y="821.8" width="7.0" height="13.8" fill="#a8aaa8" stroke="#2d2a28" stroke-width="1"/><rect x="960.0" y="821.8" width="7.0" height="13.8" fill="#a8aaa8" stroke="#2d2a28" stroke-width="1"/><rect x="925.0" y="827.7" width="60.6" height="2.0" fill="#2d2a28" /><rect x="925.0" y="841.7" width="60.6" height="2.2" fill="#2d2a28" /><rect x="925.0" y="827.7" width="1.2" height="16.2" fill="#2d2a28" /><rect x="927.6" y="827.7" width="1.2" height="16.2" fill="#2d2a28" /><rect x="930.2" y="827.7" width="1.2" height="16.2" fill="#2d2a28" /><rect x="932.8" y="827.7" width="1.2" height="16.2" fill="#2d2a28" /><rect x="935.4" y="827.7" width="1.2" height="16.2" fill="#2d2a28" /><rect x="938.0" y="827.7" width="1.2" height="16.2" fill="#2d2a28" /><rect x="940.6" y="827.7" width="1.2" height="16.2" fill="#2d2a28" /><rect x="943.2" y="827.7" width="1.2" height="16.2" fill="#2d2a28" /><rect x="945.8" y="827.7" width="1.2" height="16.2" fill="#2d2a28" /><rect x="948.4" y="827.7" width="1.2" height="16.2" fill="#2d2a28" /><rect x="951.0" y="827.7" width="1.2" height="16.2" fill="#2d2a28" /><rect x="953.6" y="827.7" width="1.2" height="16.2" fill="#2d2a28" /><rect x="956.2" y="827.7" width="1.2" height="16.2" fill="#2d2a28" /><rect x="958.8" y="827.7" width="1.2" height="16.2" fill="#2d2a28" /><rect x="961.4" y="827.7" width="1.2" height="16.2" fill="#2d2a28" /><rect x="964.0" y="827.7" width="1.2" height="16.2" fill="#2d2a28" /><rect x="966.6" y="827.7" width="1.2" height="16.2" fill="#2d2a28" /><rect x="969.2" y="827.7" width="1.2" height="16.2" fill="#2d2a28" /><rect x="971.8" y="827.7" width="1.2" height="16.2" fill="#2d2a28" /><rect x="974.4" y="827.7" width="1.2" height="16.2" fill="#2d2a28" /><rect x="977.0" y="827.7" width="1.2" height="16.2" fill="#2d2a28" /><rect x="979.6" y="827.7" width="1.2" height="16.2" fill="#2d2a28" /><rect x="982.2" y="827.7" width="1.2" height="16.2" fill="#2d2a28" /><rect x="984.8" y="827.7" width="1.2" height="16.2" fill="#2d2a28" /><rect x="937.0" y="834.4" width="4.0" height="7.1" fill="#2d2a28" /><rect x="951.0" y="834.4" width="4.0" height="7.1" fill="#2d2a28" /><rect x="965.0" y="834.4" width="4.0" height="7.1" fill="#2d2a28" /><rect x="923.0" y="883.0" width="64.0" height="6.0" fill="#9d9494" /><rect x="926.0" y="860.5" width="11.5" height="24.5" fill="#a6abac" stroke="#2d2a28" stroke-width="1.4"/><rect x="971.7" y="860.5" width="13.0" height="24.5" fill="#a6abac" stroke="#2d2a28" stroke-width="1.4"/><rect x="941.0" y="861.3" width="7.0" height="13.8" fill="#a8aaa8" stroke="#2d2a28" stroke-width="1"/><rect x="960.0" y="861.3" width="7.0" height="13.8" fill="#a8aaa8" stroke="#2d2a28" stroke-width="1"/><rect x="925.0" y="867.2" width="60.7" height="2.0" fill="#2d2a28" /><rect x="925.0" y="881.2" width="60.7" height="2.2" fill="#2d2a28" /><rect x="925.0" y="867.2" width="1.2" height="16.2" fill="#2d2a28" /><rect x="927.6" y="867.2" width="1.2" height="16.2" fill="#2d2a28" /><rect x="930.2" y="867.2" width="1.2" height="16.2" fill="#2d2a28" /><rect x="932.8" y="867.2" width="1.2" height="16.2" fill="#2d2a28" /><rect x="935.4" y="867.2" width="1.2" height="16.2" fill="#2d2a28" /><rect x="938.0" y="867.2" width="1.2" height="16.2" fill="#2d2a28" /><rect x="940.6" y="867.2" width="1.2" height="16.2" fill="#2d2a28" /><rect x="943.2" y="867.2" width="1.2" height="16.2" fill="#2d2a28" /><rect x="945.8" y="867.2" width="1.2" height="16.2" fill="#2d2a28" /><rect x="948.4" y="867.2" width="1.2" height="16.2" fill="#2d2a28" /><rect x="951.0" y="867.2" width="1.2" height="16.2" fill="#2d2a28" /><rect x="953.6" y="867.2" width="1.2" height="16.2" fill="#2d2a28" /><rect x="956.2" y="867.2" width="1.2" height="16.2" fill="#2d2a28" /><rect x="958.8" y="867.2" width="1.2" height="16.2" fill="#2d2a28" /><rect x="961.4" y="867.2" width="1.2" height="16.2" fill="#2d2a28" /><rect x="964.0" y="867.2" width="1.2" height="16.2" fill="#2d2a28" /><rect x="966.6" y="867.2" width="1.2" height="16.2" fill="#2d2a28" /><rect x="969.2" y="867.2" width="1.2" height="16.2" fill="#2d2a28" /><rect x="971.8" y="867.2" width="1.2" height="16.2" fill="#2d2a28" /><rect x="974.4" y="867.2" width="1.2" height="16.2" fill="#2d2a28" /><rect x="977.0" y="867.2" width="1.2" height="16.2" fill="#2d2a28" /><rect x="979.6" y="867.2" width="1.2" height="16.2" fill="#2d2a28" /><rect x="982.2" y="867.2" width="1.2" height="16.2" fill="#2d2a28" /><rect x="984.8" y="867.2" width="1.2" height="16.2" fill="#2d2a28" /><rect x="937.0" y="873.9" width="4.0" height="7.1" fill="#2d2a28" /><rect x="951.0" y="873.9" width="4.0" height="7.1" fill="#2d2a28" /><rect x="965.0" y="873.9" width="4.0" height="7.1" fill="#2d2a28" /><rect x="927.0" y="896.0" width="63.0" height="42.0" fill="#b8adad" /><rect x="932.0" y="897.0" width="53.0" height="5.0" fill="#a39a9a" /><rect x="930.0" y="900.0" width="5.0" height="36.0" fill="#a89f9f" /><rect x="982.0" y="900.0" width="5.0" height="36.0" fill="#a89f9f" /><rect x="944.0" y="904.0" width="27.0" height="27.0" fill="#9a9795" stroke="#2d2a28" stroke-width="1.2"/><path d="M957.5 905 V930" stroke="#d27a3a" stroke-width="1.2"/><rect x="935.0" y="920.0" width="8.0" height="8.0" fill="#2d2a28" /><rect x="972.0" y="920.0" width="10.0" height="8.0" fill="#2d2a28" /><rect x="925.0" y="932.0" width="65.0" height="8.0" fill="#a59c9c" /><g font-family="Liberation Sans" font-size="9" fill="#111"><text x="829" y="881">z</text><text x="831" y="899">y</text><text x="853" y="908" fill="#fff">x</text><text x="854" y="927" fill="#fff">x</text></g><path d="M830 887 V925 H852" stroke="#d8d8d8" stroke-width="1" fill="none"/><rect x="891.0" y="307.0" width="5.0" height="5.0" fill="#8e8e8e" /><rect x="1010.0" y="308.0" width="5.0" height="6.0" fill="#8e8e8e" /></svg>
<div class="a" style="left:139px;top:952px;width:1600px;height:20px;background:#f0f0f0;"></div>
<div class="a" style="left:0px;top:972px;width:1920px;height:1px;background:#e0e0e0;"></div>
<div class="a" style="left:139px;top:952px;width:1px;height:20px;background:#cfcfcf;"></div>
<svg class="a" style="left:143px;top:954px;" width="18" height="17" viewBox="0 0 18 17"><circle cx="9.5" cy="7" r="5.3" stroke="#1e1e1e" stroke-width="1.2" fill="none"/><path d="M5.5 11 L1.5 15.5" stroke="#1e1e1e" stroke-width="1.4"/><path d="M1 7 H8 M3 5 L1 7 L3 9" stroke="#1e1e1e" fill="none" stroke-width="1.1"/></svg>
<svg class="a" style="left:166px;top:954px;" width="18" height="17" viewBox="0 0 18 17"><circle cx="8" cy="7" r="5.3" stroke="#bbb" stroke-width="1.2" fill="none"/><path d="M12 11 L16 15.5" stroke="#bbb" stroke-width="1.4"/><path d="M10 7 H17 M15 5 L17 7 L15 9" stroke="#bbb" fill="none" stroke-width="1.1"/></svg>
<svg class="a" style="left:189px;top:954px;" width="18" height="17" viewBox="0 0 18 17"><circle cx="8" cy="7" r="5.5" stroke="#1e1e1e" stroke-width="1.2" fill="none"/><path d="M12 11 L16.5 15.5" stroke="#1e1e1e" stroke-width="1.5"/><path d="M5 7 H11 M8 4 V10" stroke="#1e1e1e" stroke-width="1.2"/></svg>
<div class="a" style="left:214px;top:953px;width:23px;height:18px;background:#cce4f7;border-radius:2px;"></div>
<svg class="a" style="left:216px;top:955px;" width="19" height="14" viewBox="0 0 19 14"><path d="M5 11 Q1 10 1.5 6.5 Q2.5 2 9.5 2 Q17 2 17.5 6.5 Q17.5 10 11 11" stroke="#2a5cc4" stroke-width="1.3" fill="none"/><path d="M11.5 9 L9 11 L11.5 13" stroke="#1e1e1e" stroke-width="1.2" fill="none"/></svg>
<svg class="a" style="left:242px;top:954px;" width="14" height="17" viewBox="0 0 14 17"><circle cx="7" cy="2.5" r="1.6" fill="#1e1e1e"/><path d="M7 5 L5.5 10 L3 14 M5.5 10 L9 15 M6.5 6.5 L3 8.5 M6.5 6.5 L10 9" stroke="#1e1e1e" stroke-width="1.4" fill="none"/></svg>
<div class="a" style="left:263px;top:953px;width:1px;height:18px;background:#c8c8c8;"></div>
<svg class="a" style="left:268px;top:954px;" width="18" height="17" viewBox="0 0 18 17"><circle cx="8" cy="7.5" r="6" stroke="#1e1e1e" stroke-width="1.2" fill="none"/><path d="M12.5 12 L16.5 16" stroke="#1e1e1e" stroke-width="1.4"/><path d="M8 3 V5 M8 10 V12 M3.5 7.5 H5.5 M10.5 7.5 H12.5" stroke="#1e1e1e" stroke-width="1.2"/></svg>
<div class="t" style="left:334px;top:957.27px;font-size:11.5px;color:#888;transform:scaleX(1.0369);transform-origin:0 0;">Н/Д</div>
<svg class="a" style="left:398px;top:957px;" width="5" height="9" viewBox="0 0 5 9"><path d="M0.5 0.5 V8.5 L4.5 4.5 Z" fill="#999"/></svg>
<div class="a" style="left:410px;top:953px;width:1px;height:18px;background:#c8c8c8;"></div>
<svg class="a" style="left:416px;top:954px;" width="16" height="16" viewBox="0 0 16 16"><path d="M2 7 L7 2 L12 6 L8 11 Z M10 10 L13 13 L14 9" stroke="#aaa" fill="none" stroke-width="1.1"/></svg>
<div class="t" style="left:483px;top:957.27px;font-size:11.5px;color:#888;transform:scaleX(1.0369);transform-origin:0 0;">Н/Д</div>
<svg class="a" style="left:546px;top:957px;" width="5" height="9" viewBox="0 0 5 9"><path d="M0.5 0.5 V8.5 L4.5 4.5 Z" fill="#999"/></svg>
<div class="a" style="left:558px;top:953px;width:1px;height:18px;background:#c8c8c8;"></div>
<svg class="a" style="left:565px;top:956px;" width="16" height="9" viewBox="0 0 16 9"><rect x="0.7" y="0.7" width="14.6" height="6.6" stroke="#1e1e1e" stroke-width="1.3" fill="none"/><path d="M4 4 V7 M7 4 V7 M10 4 V7 M13 4 V7" stroke="#1e1e1e"/></svg>
<div class="t" style="left:627.5px;top:957.27px;font-size:11.5px;color:#000;transform:scaleX(0.9208);transform-origin:0 0;">1:100</div>
<svg class="a" style="left:694px;top:957px;" width="5" height="9" viewBox="0 0 5 9"><path d="M0.5 0.5 V8.5 L4.5 4.5 Z" fill="#1e1e1e"/></svg>
<div class="a" style="left:706px;top:953px;width:1px;height:18px;background:#c8c8c8;"></div>
<svg class="a" style="left:711px;top:954px;" width="18" height="16" viewBox="0 0 18 16"><path d="M2 4 L14 1.5 L17 4 L5 6.5 Z M2 7.5 L5 10 L17 7.5 M2 11 L5 13.5 L17 11" stroke="#1e1e1e" stroke-width="1.1" fill="none"/></svg>
<div class="t" style="left:760.7px;top:957.27px;font-size:11.5px;color:#000;transform:scaleX(0.9948);transform-origin:0 0;">02 Чертеж</div>
<svg class="a" style="left:842px;top:957px;" width="5" height="9" viewBox="0 0 5 9"><path d="M0.5 0.5 V8.5 L4.5 4.5 Z" fill="#1e1e1e"/></svg>
<div class="a" style="left:855px;top:953px;width:1px;height:18px;background:#c8c8c8;"></div>
<svg class="a" style="left:860px;top:955px;" width="16" height="14" viewBox="0 0 16 14"><rect x="1" y="1" width="13" height="11" stroke="#1e1e1e" stroke-width="1.1" fill="none"/><path d="M1 4.5 H14 M3 4.5 L5 1 M6 4.5 L8 1 M9 4.5 L11 1 M3 7 L4 9 M6 7 L7 9 M9 7 L10 9" stroke="#1e1e1e"/></svg>
<div class="t" style="left:906px;top:957.27px;font-size:11.5px;color:#000;transform:scaleX(0.9669);transform-origin:0 0;">Вся Модель</div>
<svg class="a" style="left:990px;top:957px;" width="5" height="9" viewBox="0 0 5 9"><path d="M0.5 0.5 V8.5 L4.5 4.5 Z" fill="#1e1e1e"/></svg>
<div class="a" style="left:1002px;top:953px;width:1px;height:18px;background:#c8c8c8;"></div>
<svg class="a" style="left:1009px;top:954px;" width="14" height="17" viewBox="0 0 14 17"><path d="M3 1 V9 Q7 13 11 9 V1 M7 11 V16" stroke="#1e1e1e" stroke-width="1.2" fill="none"/></svg>
<div class="t" style="left:1033px;top:957.27px;font-size:11.5px;color:#000;transform:scaleX(0.9760);transform-origin:0 0;">01 Архитектурны...</div>
<svg class="a" style="left:1138px;top:957px;" width="5" height="9" viewBox="0 0 5 9"><path d="M0.5 0.5 V8.5 L4.5 4.5 Z" fill="#1e1e1e"/></svg>
<div class="a" style="left:1150px;top:953px;width:1px;height:18px;background:#c8c8c8;"></div>
<svg class="a" style="left:1156px;top:955px;" width="17" height="12" viewBox="0 0 17 12"><rect x="0.7" y="0.7" width="15" height="10" stroke="#1e1e1e" stroke-width="1.2" fill="none"/><rect x="3.5" y="3.5" width="9" height="4" stroke="#1e1e1e" fill="none"/></svg>
<div class="t" style="left:1183px;top:957.27px;font-size:11.5px;color:#000;transform:scaleX(1.0392);transform-origin:0 0;">04 Проект - Планы</div>
<svg class="a" style="left:1287px;top:957px;" width="5" height="9" viewBox="0 0 5 9"><path d="M0.5 0.5 V8.5 L4.5 4.5 Z" fill="#1e1e1e"/></svg>
<div class="a" style="left:1298px;top:953px;width:1px;height:18px;background:#c8c8c8;"></div>
<svg class="a" style="left:1305px;top:954px;" width="16" height="16" viewBox="0 0 16 16"><rect x="1" y="5" width="8" height="8" stroke="#1e1e1e" fill="none"/><rect x="8" y="8" width="6" height="6" stroke="#1e1e1e" fill="#fff"/><path d="M6 1 Q10 0 11 4 M9 3 L11 4.5 L12.5 2" stroke="#1e1e1e" fill="none"/></svg>
<div class="t" style="left:1350px;top:957.27px;font-size:11.5px;color:#000;transform:scaleX(0.9469);transform-origin:0 0;">Без Замены</div>
<svg class="a" style="left:1435px;top:957px;" width="5" height="9" viewBox="0 0 5 9"><path d="M0.5 0.5 V8.5 L4.5 4.5 Z" fill="#1e1e1e"/></svg>
<div class="a" style="left:1447px;top:953px;width:1px;height:18px;background:#c8c8c8;"></div>
<svg class="a" style="left:1452px;top:953px;" width="17" height="17" viewBox="0 0 17 17"><path d="M1 15 L8 2 L14 9 V15 Z M8 2 V15 M10 15 V11 H13 V15" stroke="#1e1e1e" fill="none" stroke-width="1.1"/></svg>
<div class="t" style="left:1477px;top:957.27px;font-size:11.5px;color:#000;transform:scaleX(0.9547);transform-origin:0 0;">00 Показать Все Э...</div>
<svg class="a" style="left:1584px;top:957px;" width="5" height="9" viewBox="0 0 5 9"><path d="M0.5 0.5 V8.5 L4.5 4.5 Z" fill="#1e1e1e"/></svg>
<div class="a" style="left:1595px;top:953px;width:1px;height:18px;background:#c8c8c8;"></div>
<svg class="a" style="left:1601px;top:954px;" width="16" height="16" viewBox="0 0 16 16"><path d="M1.5 5 L6 1.5 H14 V10 L9.5 13.5 H1.5 Z M1.5 5 H9.5 V13.5 M9.5 5 L14 1.5" stroke="#1e1e1e" fill="none" stroke-width="1.1"/></svg>
<div class="t" style="left:1625px;top:957.27px;font-size:11.5px;color:#000;transform:scaleX(1.0199);transform-origin:0 0;">Упрощенная Окр...</div>
<svg class="a" style="left:1730px;top:957px;" width="5" height="9" viewBox="0 0 5 9"><path d="M0.5 0.5 V8.5 L4.5 4.5 Z" fill="#1e1e1e"/></svg>
<div class="a" style="left:0px;top:973px;width:1920px;height:36px;background:#f0f0f0;"></div>
<div class="a" style="left:0px;top:1009px;width:1920px;height:1px;background:#dadada;"></div>
<div class="a" style="left:146px;top:985px;width:1px;height:13px;background:#777;"></div>
<svg class="a" style="left:155px;top:979px;" width="21" height="22" viewBox="0 0 21 22"><path d="M3 7 Q9 1 15 7 Q9 11 3 7 Z" stroke="#1e1e1e" stroke-width="1.2" fill="none"/><circle cx="9" cy="6.5" r="1.8" fill="#1e1e1e"/><path d="M3 18 Q9 12 15 16 Q9 22 3 18 Z M2 21 L16 13" stroke="#1e1e1e" stroke-width="1.2" fill="none"/><path d="M17 8 Q21 12 17 17 M16 16 L17.5 17.5 L19 15.5" stroke="#1e1e1e" fill="none" stroke-width="1.1"/></svg>
<svg class="a" style="left:184px;top:979px;" width="22" height="22" viewBox="0 0 22 22"><rect x="1" y="9.5" width="7" height="7.5" rx="1" stroke="#1e1e1e" stroke-width="1.2" fill="none"/><path d="M2.5 9.5 V7 Q4.5 4 6.5 7 V9.5" stroke="#1e1e1e" fill="none"/><path d="M10 5 Q14 2 18 5 V11 Q14 15 10 11 Z" stroke="#1e1e1e" stroke-width="1.2" fill="none"/><path d="M14 6 V9 M11 17 Q14 20 17 16 M16 16 L17 15 L17.5 17" stroke="#1e1e1e" fill="none"/></svg>
<div class="a" style="left:212px;top:977px;width:1px;height:28px;background:#8f8f8f;"></div>
<div class="a" style="left:0;top:0;width:1920px;height:1032px;clip-path:inset(975px 1615px 41px 213px);pointer-events:none"><div class="t" style="left:215px;top:978.69px;font-size:11px;color:#000;transform:scaleX(1.0210);transform-origin:0 0;">Слои Выбр.Эл-ов</div></div>
<svg class="a" style="left:219px;top:991px;" width="18" height="13" viewBox="0 0 18 13"><path d="M1 6 Q9 0 17 6 Q9 11 1 6 Z M1 12 L17 1" stroke="#bbb" fill="none" stroke-width="1.1"/></svg>
<svg class="a" style="left:255px;top:991px;" width="10" height="12" viewBox="0 0 10 12"><rect x="1" y="5" width="7" height="6" rx="1" stroke="#bbb" fill="none"/><path d="M2.5 5 V3 Q4.5 0 6.5 3 V5" stroke="#bbb" fill="none"/></svg>
<svg class="a" style="left:284px;top:991px;" width="12" height="12" viewBox="0 0 12 12"><rect x="3" y="5" width="7" height="6" rx="1" stroke="#bbb" fill="none"/><path d="M1 4 Q2 0 5 2" stroke="#bbb" fill="none"/></svg>
<div class="a" style="left:307px;top:977px;width:1px;height:28px;background:#8f8f8f;"></div>
<div class="t" style="left:310px;top:978.69px;font-size:11px;color:#000;transform:scaleX(0.9540);transform-origin:0 0;">Всех Слоев:</div>
<svg class="a" style="left:315px;top:991px;" width="18" height="13" viewBox="0 0 18 13"><path d="M1 6 Q9 0 17 6 Q9 11 1 6 Z M1 12 L17 1" stroke="#1e1e1e" fill="none" stroke-width="1.2"/></svg>
<svg class="a" style="left:350px;top:991px;" width="10" height="12" viewBox="0 0 10 12"><rect x="1" y="5" width="7" height="6" rx="1" stroke="#1e1e1e" fill="none" stroke-width="1.1"/><path d="M2.5 5 V3 Q4.5 0 6.5 3 V5" stroke="#1e1e1e" fill="none"/></svg>
<div class="a" style="left:402px;top:975px;width:1px;height:30px;background:#8f8f8f;"></div>
<svg class="a" style="left:413px;top:977px;" width="14" height="28" viewBox="0 0 14 28"><path d="M3 10 Q3 5 8 5 Q12 5 12 9 M10 8 L12 9.5 L13 7 M12 19 Q12 24 7 24 Q3 24 3 20 M5 21 L3 19.5 L2 22" stroke="#bbb" fill="none" stroke-width="1.1"/></svg>
<div class="a" style="left:475px;top:981px;width:1px;height:16px;background:#777;"></div>
<div class="a" style="left:478px;top:975px;width:79px;height:30px;background:#cce4f7;border:1px solid #b6d8f2;border-radius:3px;"></div>
<svg class="a" style="left:481px;top:981px;" width="20" height="19" viewBox="0 0 20 19"><rect x="1" y="1" width="17" height="16.5" stroke="#1e1e1e" stroke-width="1.2" fill="none"/><path d="M1 3.5 H18" stroke="#1e1e1e" stroke-width="1.2"/><path d="M4.5 9 L7.5 6.5 H14 V13 L11 15.5 H4.5 Z M4.5 9 H11 V15.5 M11 9 L14 6.5" stroke="#1e1e1e" fill="none"/></svg>
<div class="t" style="left:504px;top:984.84px;font-size:12px;color:#000;transform:scaleX(1.0098);transform-origin:0 0;">3D-окно</div>
<div class="a" style="left:560px;top:977px;width:1px;height:28px;background:#8f8f8f;"></div>
<div class="a" style="left:566px;top:975px;width:28px;height:30px;background:#cce4f7;border:1px solid #b6d8f2;border-radius:3px;"></div>
<svg class="a" style="left:570px;top:981px;" width="19" height="18" viewBox="0 0 19 18"><path d="M1.5 3 L13 1 L17 3.5 V15 L13 17 L1.5 15 Z M13 1 V17" stroke="#1e1e1e" stroke-width="1.1" fill="none"/></svg>
<svg class="a" style="left:597px;top:981px;" width="19" height="18" viewBox="0 0 19 18"><path d="M1.5 5 L6 1.5 H17 V12 L12.5 16.5 H1.5 Z M1.5 5 H12.5 V16.5 M12.5 5 L17 1.5" stroke="#1e1e1e" stroke-width="1.1" fill="none"/></svg>
<svg class="a" style="left:629px;top:979px;" width="22" height="22" viewBox="0 0 22 22"><path d="M10 2 V12 L3 18 M10 12 L19 17 M8 4 L10 2 L12 4" stroke="#1e1e1e" stroke-width="1.1" fill="none"/><path d="M7 12 L10 9 L13 11 V15 L10 17 L7 15 Z" stroke="#1e1e1e" fill="none"/><path d="M2 16 L3 19 L6 18 M17 18 L19.5 17.5 L18 15" stroke="#1e1e1e" fill="none"/></svg>
<svg class="a" style="left:661px;top:988px;" width="9" height="5" viewBox="0 0 9 5"><path d="M0.5 0.5 H8.5 L4.5 4.5 Z" fill="#1e1e1e"/></svg>
<div class="a" style="left:676px;top:977px;width:1px;height:28px;background:#8f8f8f;"></div>
<svg class="a" style="left:685px;top:980px;" width="16" height="20" viewBox="0 0 16 20"><circle cx="8" cy="2.5" r="1.8" stroke="#1e1e1e" fill="none"/><path d="M8 5 L6.5 11 L3 17 M6.5 11 L11 17 M7.5 7 L4 9.5 M7.5 7 L11 10" stroke="#1e1e1e" stroke-width="1.2" fill="none"/></svg>
<div class="a" style="left:710px;top:975px;width:28px;height:30px;background:#cce4f7;border:1px solid #b6d8f2;border-radius:3px;"></div>
<svg class="a" style="left:713px;top:982px;" width="22" height="17" viewBox="0 0 22 17"><path d="M3 7 L10 2 L18 5 V9 L11 14 L3 11 Z M3 7 L11 10 L18 5 M11 10 V14" stroke="#1e1e1e" stroke-width="1.1" fill="none"/><path d="M2 12 Q5 17 12 16 Q19 15 20 10" stroke="#2a5cc4" stroke-width="1.2" fill="none"/></svg>
<div class="a" style="left:742px;top:977px;width:1px;height:28px;background:#8f8f8f;"></div>
<svg class="a" style="left:748px;top:980px;" width="20" height="20" viewBox="0 0 20 20"><circle cx="10" cy="10" r="6.5" stroke="#1e1e1e" stroke-width="1.2" fill="none"/><path d="M10 1 V19 M1 10 H19" stroke="#1e1e1e" stroke-width="1.1"/><rect x="7" y="7" width="6" height="6" stroke="#1e1e1e" fill="#f0f0f0"/></svg>
<svg class="a" style="left:778px;top:980px;" width="20" height="20" viewBox="0 0 20 20"><path d="M1 5 V1 H5 M15 1 H19 V5 M19 15 V19 H15 M5 19 H1 V15" stroke="#1e1e1e" fill="none" stroke-width="1.1"/><path d="M4 9 L10 3.5 L16 9 M5.5 8 V16 H14.5 V8 M8.5 16 V12 H11.5 V16" stroke="#1e1e1e" fill="none" stroke-width="1.1"/></svg>
<svg class="a" style="left:807px;top:980px;" width="20" height="20" viewBox="0 0 20 20"><rect x="6" y="4" width="8" height="6" stroke="#1e1e1e" fill="none" stroke-width="1.1"/><circle cx="10" cy="7" r="1.5" fill="#1e1e1e"/><path d="M10 10 V14 M5 19 L10 14 L15 19 M1 7 H5 M15 7 H19" stroke="#1e1e1e" fill="none" stroke-width="1.1"/></svg>
<svg class="a" style="left:836px;top:980px;" width="20" height="20" viewBox="0 0 20 20"><path d="M4 12 L9 8 L16 10 V15 L11 18 L4 16 Z M4 12 L11 14 L16 10 M11 14 V18" stroke="#1e1e1e" fill="none" stroke-width="1.1"/><path d="M4 6 L8 3 M8 3 L6 2.5 M12 2 L16 6 M16 6 L16 4 M10 1 V7" stroke="#2a5cc4" fill="none" stroke-width="1.1"/></svg>
<svg class="a" style="left:866px;top:980px;" width="20" height="20" viewBox="0 0 20 20"><path d="M4 6 L10 4 L16 6 V14 L10 16 L4 14 Z M10 4 V16" stroke="#999" fill="none" stroke-width="1.1"/><path d="M1 10 H4 M16 10 H19" stroke="#999"/></svg>
<div class="a" style="left:895px;top:977px;width:1px;height:28px;background:#8f8f8f;"></div>
<svg class="a" style="left:906px;top:980px;" width="20" height="20" viewBox="0 0 20 20"><path d="M2 9 L6 5 H13 V12 L9 16 H2 Z M2 9 H9 V16 M9 9 L13 5" stroke="#1e1e1e" fill="#fff" stroke-width="1.1"/><rect x="9" y="10" width="10" height="8" fill="#dce8fa" stroke="#3a66c9" stroke-width="1.1"/><path d="M11 13 H17 M11 15.5 H17" stroke="#3a66c9"/></svg>
<svg class="a" style="left:938px;top:988px;" width="9" height="5" viewBox="0 0 9 5"><path d="M0.5 0.5 H8.5 L4.5 4.5 Z" fill="#1e1e1e"/></svg>
<div class="a" style="left:952px;top:977px;width:1px;height:28px;background:#8f8f8f;"></div>
<svg class="a" style="left:964px;top:979px;" width="21" height="22" viewBox="0 0 21 22"><path d="M6 3 L10 1 L14 3 V7 L10 9 L6 7 Z" stroke="#aaa" fill="none"/><rect x="4" y="8" width="12" height="10" stroke="#1e1e1e" stroke-width="1.1" fill="none" stroke-dasharray="2 1"/><rect x="3" y="7" width="3" height="3" fill="#1e1e1e"/><rect x="14" y="7" width="3" height="3" fill="#1e1e1e"/><rect x="3" y="16" width="3" height="3" fill="#1e1e1e"/><rect x="14" y="16" width="3" height="3" fill="#1e1e1e"/></svg>
<svg class="a" style="left:996px;top:988px;" width="9" height="5" viewBox="0 0 9 5"><path d="M0.5 0.5 H8.5 L4.5 4.5 Z" fill="#1e1e1e"/></svg>
<svg class="a" style="left:1010px;top:979px;" width="21" height="22" viewBox="0 0 21 22"><path d="M2 9 L8 3 L15 7 V13 L9 18 L2 14 Z M2 9 L9 12 L15 7" stroke="#1e1e1e" fill="none" stroke-width="1.1"/><path d="M11 11 H20 L16.5 15 V19 L14.5 18 V15 Z" fill="#dce8fa" stroke="#3a66c9" stroke-width="1.1"/></svg>
<svg class="a" style="left:1042px;top:979px;" width="22" height="22" viewBox="0 0 22 22"><path d="M2 11 L8 5 L20 8 L14 16 Z" stroke="#1e1e1e" fill="none" stroke-width="1.1"/><path d="M4 8 L12 3 L19 11 L11 17 Z" stroke="#3a66c9" fill="none" stroke-width="1.3"/></svg>
<svg class="a" style="left:1075px;top:988px;" width="9" height="5" viewBox="0 0 9 5"><path d="M0.5 0.5 H8.5 L4.5 4.5 Z" fill="#1e1e1e"/></svg>
<div class="a" style="left:1090px;top:977px;width:1px;height:28px;background:#8f8f8f;"></div>
<svg class="a" style="left:1097px;top:979px;" width="20" height="22" viewBox="0 0 20 22"><path d="M8 2 V10 M11 2 V10 M6 10 H13 V13 H6 Z M4 13 H15 L16 19 H3 Z M6 16 V19 M9 16 V19 M12 16 V19" stroke="#1e1e1e" fill="none" stroke-width="1.1"/></svg>
<svg class="a" style="left:1126px;top:979px;" width="20" height="22" viewBox="0 0 20 22"><path d="M4 2 Q1 7 4 9 Q7 7 4 2 Z" stroke="#1e1e1e" fill="none"/><path d="M12 2 V9 M15 2 V9 M10 9 H17 V12 H10 Z M9 12 H18 L19 19 H8 Z M1 19 H8" stroke="#1e1e1e" fill="none" stroke-width="1.1"/></svg>
<div class="a" style="left:1155px;top:977px;width:1px;height:28px;background:#8f8f8f;"></div>
<svg class="a" style="left:1167px;top:980px;" width="20" height="20" viewBox="0 0 20 20"><path d="M1.5 6 H5 L7 3 H13 L15 6 H18.5 V17 H1.5 Z" stroke="#1e1e1e" fill="none" stroke-width="1.2"/><circle cx="10" cy="11" r="3.5" stroke="#1e1e1e" fill="none" stroke-width="1.2"/></svg>
<svg class="a" style="left:1199px;top:988px;" width="9" height="5" viewBox="0 0 9 5"><path d="M0.5 0.5 H8.5 L4.5 4.5 Z" fill="#1e1e1e"/></svg>
<svg class="a" style="left:1213px;top:979px;" width="22" height="22" viewBox="0 0 22 22"><path d="M1.5 5 H4 L6 2 H11 L13 5 H15 V14 H1.5 Z" stroke="#1e1e1e" fill="none" stroke-width="1.1"/><circle cx="8" cy="9" r="2.5" stroke="#1e1e1e" fill="none"/><rect x="10" y="11" width="10" height="8" fill="#dce8fa" stroke="#3a66c9" stroke-width="1.1"/><path d="M12 14 H18 M12 16.5 H18" stroke="#3a66c9"/></svg>
<svg class="a" style="left:1242px;top:979px;" width="20" height="22" viewBox="0 0 20 22"><path d="M3 10 L10 3 L17 10 M5 9 V18 H15 V9 M8 18 V13 H12 V18" stroke="#1e1e1e" fill="none" stroke-width="1.1"/><path d="M1 4 V19 M19 4 V19 M1 12 L3 10 M19 12 L17 10" stroke="#6a9be0" fill="none"/></svg>
<div class="a" style="left:1270px;top:977px;width:1px;height:28px;background:#8f8f8f;"></div>
<svg class="a" style="left:1280px;top:981px;" width="20" height="18" viewBox="0 0 20 18"><rect x="1.5" y="5" width="12" height="9" stroke="#1e1e1e" fill="none" stroke-width="1.1"/><path d="M13.5 8 L18.5 5 V14 L13.5 11" stroke="#1e1e1e" fill="none" stroke-width="1.1"/><path d="M1 17 Q6 19 11 16" stroke="#3a66c9" fill="none"/><path d="M3 4 Q6 1 10 3" stroke="#3a66c9" fill="none"/></svg>
<svg class="a" style="left:1308px;top:979px;" width="22" height="22" viewBox="0 0 22 22"><path d="M5 1 V9 M1 5 H9 M2 2 L8 8 M8 2 L2 8" stroke="#1e1e1e" stroke-width="1.1"/><path d="M7 13 L12 8 L18 11 V17 L13 20 L7 17 Z M7 13 L13 15 L18 11 M13 15 V20" stroke="#1e1e1e" fill="#ddd" stroke-width="1.1"/></svg>
<div class="a" style="left:0px;top:1010px;width:1920px;height:22px;background:#f0f0f0;"></div>
<div class="t" style="left:3px;top:1016.34px;font-size:12px;color:#000;transform:scaleX(0.9921);transform-origin:0 0;">Щелкните на элементе или начертите область выбора. Нажмите и не отпускайте Ctrl+Shift для переключения выбора элемента/подэлемента.</div>
<svg class="a" style="left:1746px;top:1013px;" width="18" height="17" viewBox="0 0 18 17"><rect x="1" y="1" width="11" height="9" stroke="#1e1e1e" fill="none" stroke-width="1.1"/><rect x="4" y="4" width="11" height="9" stroke="#1e1e1e" fill="#f0f0f0" stroke-width="1.1"/><path d="M9 12 Q11 9 14 10 M13 14 Q16 15 17 12" stroke="#3a66c9" fill="none" stroke-width="1.1"/></svg>
<div class="a" style="left:1767px;top:1012px;width:1px;height:19px;background:#d8d8d8;"></div>
<div class="t" style="left:1783px;top:1014.43px;font-size:14.5px;color:#9c9c9c;transform:scaleX(0.8709);transform-origin:0 0;">GRAPHISOFT ID</div>
<div class="a" style="left:1896px;top:1012px;width:1px;height:19px;background:#d8d8d8;"></div>
<div class="a" style="left:1739px;top:184px;width:1px;height:788px;background:#d0d0d0;"></div>
<div class="a" style="left:1740px;top:184px;width:180px;height:788px;background:#f0f0f0;"></div>
<div class="a" style="left:1796px;top:188px;width:68px;height:1px;background:#555;"></div>
<div class="a" style="left:1742px;top:193px;width:30px;height:29px;background:#cce4f7;border:1px solid #a9d3f2;border-radius:3px;"></div>
<svg class="a" style="left:1746px;top:200px;" width="22" height="16" viewBox="0 0 22 16"><path d="M1.5 14.5 V7 L7 1.5 L12.5 7 V14.5 Z M7 1.5 L15 4 L20.5 9 V14.5 H12.5 M12.5 9 H20.5" stroke="#1a2d4d" fill="none" stroke-width="1.2"/></svg>
<svg class="a" style="left:1789px;top:199px;" width="20" height="16" viewBox="0 0 20 16"><rect x="1" y="1" width="17" height="13" stroke="#1e1e1e" fill="none" stroke-width="1.2"/><path d="M3.5 12 V7.5 L7 4 L10.5 7.5 V12 Z M7 4 L12 5.5 L15.5 8.5 V12 H10.5" stroke="#1e1e1e" fill="none" stroke-width="1.1"/></svg>
<svg class="a" style="left:1819px;top:199px;" width="20" height="17" viewBox="0 0 20 17"><path d="M1.5 15 V6 Q2 1.5 7 1 V15 Z M7 1 Q3 8 3.5 15 M7 7.5 H18 V15 H1.5 M11 11.5 H18" stroke="#1e1e1e" fill="none" stroke-width="1.1"/></svg>
<svg class="a" style="left:1850px;top:199px;" width="19" height="19" viewBox="0 0 19 19"><rect x="1" y="1" width="11" height="12" rx="2" stroke="#1e1e1e" fill="#fff" stroke-width="1.1"/><path d="M1 4 H12" stroke="#1e1e1e"/><path d="M14 4 V15 H4 M16 6 V17 H6" stroke="#1e1e1e" fill="none" stroke-width="1.1"/></svg>
<div class="a" style="left:1777px;top:198px;width:1px;height:20px;background:#bbb;"></div>
<div class="a" style="left:1885px;top:198px;width:32px;height:20px;background:#fafafa;border:1px solid #dcdcdc;border-radius:3px;"></div>
<svg class="a" style="left:1890px;top:202px;" width="24" height="12" viewBox="0 0 24 12"><path d="M1 2.5 H12 M1 6 H12 M1 9.5 H12" stroke="#222" stroke-width="1.2"/><path d="M18 2 V10 L22 6 Z" fill="#222"/></svg>
<div class="a" style="left:1743px;top:229px;width:175px;height:22px;background:#ffffff;border-bottom:1px solid #7a7a7a;"></div>
<div class="t" style="left:1746px;top:234.69px;font-size:11px;color:#6b6b6b;transform:scaleX(1.0577);transform-origin:0 0;">Поиск по Карте Проекта</div>
<div class="a" style="left:1740px;top:252px;width:164px;height:646px;background:#ffffff;"></div>
<div class="a" style="left:1904px;top:252px;width:16px;height:646px;background:#f0f0f0;"></div>
<div class="a" style="left:1910px;top:305px;width:2px;height:327px;background:#8a8a8a;"></div>
<div class="a" style="left:0;top:0;width:1920px;height:1032px;clip-path:inset(252px 16px 134px 1740px);pointer-events:none"><svg class="a" style="left:1781px;top:256px;" width="19" height="17" viewBox="0 0 19 17"><path d="M0.5 0.5 H7 V6 H17.5 V15.5 H0.5 Z" fill="#fff" stroke="#222" stroke-width="1.1"/><path d="M3.5 1.5 L3 4.5" stroke="#222"/></svg><div class="t" style="left:1804px;top:258.69px;font-size:11px;color:#000;transform:scaleX(1.0000);transform-origin:0 0;">16. Этаж</div><svg class="a" style="left:1781px;top:278px;" width="19" height="17" viewBox="0 0 19 17"><path d="M0.5 0.5 H7 V6 H17.5 V15.5 H0.5 Z" fill="#fff" stroke="#222" stroke-width="1.1"/><path d="M3.5 1.5 L3 4.5" stroke="#222"/></svg><div class="t" style="left:1804px;top:280.69px;font-size:11px;color:#000;transform:scaleX(1.0000);transform-origin:0 0;">15. Этаж</div><svg class="a" style="left:1781px;top:300px;" width="19" height="17" viewBox="0 0 19 17"><path d="M0.5 0.5 H7 V6 H17.5 V15.5 H0.5 Z" fill="#fff" stroke="#222" stroke-width="1.1"/><path d="M3.5 1.5 L3 4.5" stroke="#222"/></svg><div class="t" style="left:1804px;top:302.69px;font-size:11px;color:#000;transform:scaleX(1.0000);transform-origin:0 0;">14. Этаж</div><svg class="a" style="left:1781px;top:322px;" width="19" height="17" viewBox="0 0 19 17"><path d="M0.5 0.5 H7 V6 H17.5 V15.5 H0.5 Z" fill="#fff" stroke="#222" stroke-width="1.1"/><path d="M3.5 1.5 L3 4.5" stroke="#222"/></svg><div class="t" style="left:1804px;top:324.69px;font-size:11px;color:#000;transform:scaleX(1.0000);transform-origin:0 0;">13. Этаж</div><svg class="a" style="left:1781px;top:344px;" width="19" height="17" viewBox="0 0 19 17"><path d="M0.5 0.5 H7 V6 H17.5 V15.5 H0.5 Z" fill="#fff" stroke="#222" stroke-width="1.1"/><path d="M3.5 1.5 L3 4.5" stroke="#222"/></svg><div class="t" style="left:1804px;top:346.69px;font-size:11px;color:#000;transform:scaleX(1.0000);transform-origin:0 0;">12. Этаж</div><svg class="a" style="left:1781px;top:366px;" width="19" height="17" viewBox="0 0 19 17"><path d="M0.5 0.5 H7 V6 H17.5 V15.5 H0.5 Z" fill="#fff" stroke="#222" stroke-width="1.1"/><path d="M3.5 1.5 L3 4.5" stroke="#222"/></svg><div class="t" style="left:1804px;top:368.69px;font-size:11px;color:#000;transform:scaleX(1.0000);transform-origin:0 0;">11. Этаж</div><svg class="a" style="left:1781px;top:388px;" width="19" height="17" viewBox="0 0 19 17"><path d="M0.5 0.5 H7 V6 H17.5 V15.5 H0.5 Z" fill="#fff" stroke="#222" stroke-width="1.1"/><path d="M3.5 1.5 L3 4.5" stroke="#222"/></svg><div class="t" style="left:1804px;top:390.69px;font-size:11px;color:#000;transform:scaleX(1.0000);transform-origin:0 0;">10. Этаж</div><svg class="a" style="left:1781px;top:410px;" width="19" height="17" viewBox="0 0 19 17"><path d="M0.5 0.5 H7 V6 H17.5 V15.5 H0.5 Z" fill="#fff" stroke="#222" stroke-width="1.1"/><path d="M3.5 1.5 L3 4.5" stroke="#222"/></svg><div class="t" style="left:1804px;top:412.69px;font-size:11px;color:#000;transform:scaleX(1.0000);transform-origin:0 0;">9. Этаж</div><svg class="a" style="left:1781px;top:432px;" width="19" height="17" viewBox="0 0 19 17"><path d="M0.5 0.5 H7 V6 H17.5 V15.5 H0.5 Z" fill="#fff" stroke="#222" stroke-width="1.1"/><path d="M3.5 1.5 L3 4.5" stroke="#222"/></svg><div class="t" style="left:1804px;top:434.69px;font-size:11px;color:#000;transform:scaleX(1.0000);transform-origin:0 0;">8. Этаж</div><svg class="a" style="left:1781px;top:454px;" width="19" height="17" viewBox="0 0 19 17"><path d="M0.5 0.5 H7 V6 H17.5 V15.5 H0.5 Z" fill="#fff" stroke="#222" stroke-width="1.1"/><path d="M3.5 1.5 L3 4.5" stroke="#222"/></svg><div class="t" style="left:1804px;top:456.69px;font-size:11px;color:#000;transform:scaleX(1.0000);transform-origin:0 0;">7. Этаж</div><svg class="a" style="left:1781px;top:476px;" width="19" height="17" viewBox="0 0 19 17"><path d="M0.5 0.5 H7 V6 H17.5 V15.5 H0.5 Z" fill="#fff" stroke="#222" stroke-width="1.1"/><path d="M3.5 1.5 L3 4.5" stroke="#222"/></svg><div class="t" style="left:1804px;top:478.69px;font-size:11px;color:#000;transform:scaleX(1.0000);transform-origin:0 0;">6. Этаж</div><svg class="a" style="left:1781px;top:498px;" width="19" height="17" viewBox="0 0 19 17"><path d="M0.5 0.5 H7 V6 H17.5 V15.5 H0.5 Z" fill="#fff" stroke="#222" stroke-width="1.1"/><path d="M3.5 1.5 L3 4.5" stroke="#222"/></svg><div class="t" style="left:1804px;top:500.69px;font-size:11px;color:#000;transform:scaleX(1.0000);transform-origin:0 0;">5. Этаж</div><svg class="a" style="left:1781px;top:520px;" width="19" height="17" viewBox="0 0 19 17"><path d="M0.5 0.5 H7 V6 H17.5 V15.5 H0.5 Z" fill="#fff" stroke="#222" stroke-width="1.1"/><path d="M3.5 1.5 L3 4.5" stroke="#222"/></svg><div class="t" style="left:1804px;top:522.69px;font-size:11px;color:#000;transform:scaleX(1.0000);transform-origin:0 0;">4. Этаж</div><svg class="a" style="left:1781px;top:542px;" width="19" height="17" viewBox="0 0 19 17"><path d="M0.5 0.5 H7 V6 H17.5 V15.5 H0.5 Z" fill="#fff" stroke="#222" stroke-width="1.1"/><path d="M3.5 1.5 L3 4.5" stroke="#222"/></svg><div class="t" style="left:1804px;top:544.69px;font-size:11px;color:#000;transform:scaleX(1.0000);transform-origin:0 0;">3. 3-й этаж</div><svg class="a" style="left:1781px;top:564px;" width="19" height="17" viewBox="0 0 19 17"><path d="M0.5 0.5 H7 V6 H17.5 V15.5 H0.5 Z" fill="#fff" stroke="#222" stroke-width="1.1"/><path d="M3.5 1.5 L3 4.5" stroke="#222"/></svg><div class="t" style="left:1804px;top:566.69px;font-size:11px;color:#000;transform:scaleX(1.0000);transform-origin:0 0;">2. 2-й этаж</div><svg class="a" style="left:1781px;top:586px;" width="19" height="17" viewBox="0 0 19 17"><path d="M0.5 0.5 H7 V6 H17.5 V15.5 H0.5 Z" fill="#fff" stroke="#222" stroke-width="1.1"/><path d="M3.5 1.5 L3 4.5" stroke="#222"/></svg><div class="t" style="left:1804px;top:588.69px;font-size:11px;color:#000;transform:scaleX(1.0000);transform-origin:0 0;">1. 1-й этаж</div><svg class="a" style="left:1757px;top:613px;" width="10" height="7" viewBox="0 0 10 7"><path d="M1 1 L5 5 L9 1" stroke="#222" stroke-width="1.4" fill="none"/></svg><svg class="a" style="left:1771px;top:608px;" width="19" height="17" viewBox="0 0 19 17"><path d="M1 15 V5 L9 1.5 L17 5 V15 Z" fill="#dcdcdc" stroke="#222" stroke-width="1.1"/><path d="M1 6 H17" stroke="#222"/></svg><div class="t" style="left:1794px;top:610.69px;font-size:11px;color:#000;transform:scaleX(1.0200);transform-origin:0 0;">Разрезы</div><svg class="a" style="left:1781px;top:630px;" width="19" height="17" viewBox="0 0 19 17"><path d="M1 15 V5 L9 1.5 L17 5 V15 Z" fill="#fff" stroke="#222" stroke-width="1.1"/><path d="M1 6 H17" stroke="#222"/></svg><div class="t" style="left:1804px;top:632.69px;font-size:11px;color:#000;transform:scaleX(1.0200);transform-origin:0 0;">1 Разрез (Автомати</div><svg class="a" style="left:1757px;top:657px;" width="10" height="7" viewBox="0 0 10 7"><path d="M1 1 L5 5 L9 1" stroke="#222" stroke-width="1.4" fill="none"/></svg><svg class="a" style="left:1771px;top:652px;" width="19" height="17" viewBox="0 0 19 17"><path d="M1 15 V5 L9 1.5 L17 5 V15 Z" fill="#dcdcdc" stroke="#222" stroke-width="1.1"/><path d="M1 6 H17" stroke="#222"/></svg><div class="t" style="left:1794px;top:654.69px;font-size:11px;color:#000;transform:scaleX(1.0200);transform-origin:0 0;">Фасады</div><svg class="a" style="left:1781px;top:674px;" width="19" height="17" viewBox="0 0 19 17"><path d="M1 15 V6 L9 1.5 L17 6 V15 Z" fill="#fff" stroke="#222" stroke-width="1.1"/></svg><div class="t" style="left:1804px;top:676.69px;font-size:11px;color:#000;transform:scaleX(1.0200);transform-origin:0 0;">Восточный Фасад (</div><svg class="a" style="left:1781px;top:696px;" width="19" height="17" viewBox="0 0 19 17"><path d="M1 15 V6 L9 1.5 L17 6 V15 Z" fill="#fff" stroke="#222" stroke-width="1.1"/></svg><div class="t" style="left:1804px;top:698.69px;font-size:11px;color:#000;transform:scaleX(1.0200);transform-origin:0 0;">Западный Фасад (А</div><svg class="a" style="left:1781px;top:718px;" width="19" height="17" viewBox="0 0 19 17"><path d="M1 15 V6 L9 1.5 L17 6 V15 Z" fill="#fff" stroke="#222" stroke-width="1.1"/></svg><div class="t" style="left:1804px;top:720.69px;font-size:11px;color:#000;transform:scaleX(1.0200);transform-origin:0 0;">Северный Фасад (А</div><svg class="a" style="left:1781px;top:740px;" width="19" height="17" viewBox="0 0 19 17"><path d="M1 15 V6 L9 1.5 L17 6 V15 Z" fill="#fff" stroke="#222" stroke-width="1.1"/></svg><div class="t" style="left:1804px;top:742.69px;font-size:11px;color:#000;transform:scaleX(1.0200);transform-origin:0 0;">Южный Фасад (Авт</div><svg class="a" style="left:1771px;top:762px;" width="19" height="17" viewBox="0 0 19 17"><rect x="1" y="1" width="17" height="14" fill="#fff" stroke="#222" stroke-width="1.1"/><path d="M5 3 V13 M7.5 3 V13 M10 3 H16 V8 H10 Z" stroke="#222" fill="none"/></svg><div class="t" style="left:1794px;top:764.69px;font-size:11px;color:#000;transform:scaleX(1.0200);transform-origin:0 0;">Развертки</div><svg class="a" style="left:1771px;top:784px;" width="19" height="17" viewBox="0 0 19 17"><path d="M1 1 H13 L17 5 V15 H1 Z" fill="#fff" stroke="#222" stroke-width="1.1"/><path d="M4 12 L12 4 L14 6 L6 14 H4 Z" stroke="#222" fill="none"/></svg><div class="t" style="left:1794px;top:786.69px;font-size:11px;color:#000;transform:scaleX(1.0200);transform-origin:0 0;">Рабочие Листы</div><svg class="a" style="left:1771px;top:806px;" width="19" height="17" viewBox="0 0 19 17"><circle cx="9" cy="8" r="7.5" fill="#fff" stroke="#222" stroke-width="1.1"/><path d="M6 1 V15 M6 7 H16 M10 7 V12 H16" stroke="#222" fill="none"/></svg><div class="t" style="left:1794px;top:808.69px;font-size:11px;color:#000;transform:scaleX(1.0200);transform-origin:0 0;">Детали</div><svg class="a" style="left:1771px;top:828px;" width="19" height="17" viewBox="0 0 19 17"><rect x="1" y="1" width="17" height="14" rx="2" fill="#fff" stroke="#222" stroke-width="1.1"/><path d="M4 7 L7 4 H14 V10 L11 13 H4 Z M4 7 H11 V13 M11 7 L14 4" stroke="#222" fill="none"/></svg><div class="t" style="left:1794px;top:830.69px;font-size:11px;color:#000;transform:scaleX(1.0200);transform-origin:0 0;">3D-документы</div><svg class="a" style="left:1757px;top:855px;" width="10" height="7" viewBox="0 0 10 7"><path d="M1 1 L5 5 L9 1" stroke="#222" stroke-width="1.4" fill="none"/></svg><svg class="a" style="left:1772px;top:850px;" width="19" height="17" viewBox="0 0 19 17"><path d="M1.5 3 L10.5 1 V15 L1.5 13 Z M10.5 1 L14 3.5 V12.5 L10.5 15" fill="#fff" stroke="#222" stroke-width="1.1"/></svg><div class="t" style="left:1794px;top:852.69px;font-size:11px;color:#000;transform:scaleX(0.9245);transform-origin:0 0;">3D</div><div class="a" style="left:1740px;top:869px;width:164px;height:21px;background:#d4d4d4;border-top:1px solid #a8a8a8;border-bottom:1px solid #a8a8a8;"></div><svg class="a" style="left:1782px;top:872px;" width="19" height="17" viewBox="0 0 19 17"><path d="M1.5 3 L10.5 1 V15 L1.5 13 Z M10.5 1 L14 3.5 V12.5 L10.5 15" fill="#fff" stroke="#222" stroke-width="1.1"/></svg><div class="t" style="left:1804px;top:874.69px;font-size:11px;color:#000;font-weight:bold;transform:scaleX(0.9850);transform-origin:0 0;">Общая Перспектива</div><div class="a" style="left:1740px;top:890px;width:164px;height:8px;background:#ffffff;"></div><svg class="a" style="left:1783px;top:893px;" width="16" height="5" viewBox="0 0 16 5"><path d="M1 4 L7 1 L14 4" stroke="#555" fill="none"/></svg></div>
<div class="a" style="left:1757px;top:905px;width:54px;height:1.5px;background:#666;"></div>
<svg class="a" style="left:1749px;top:922px;" width="16" height="16" viewBox="0 0 16 16"><circle cx="8" cy="8" r="6.5" stroke="#b6c6e6" fill="none" stroke-width="1.1"/><path d="M8 4 V12 M4 8 H12" stroke="#b6c6e6" stroke-width="1.1"/></svg>
<svg class="a" style="left:1779px;top:924px;" width="16" height="13" viewBox="0 0 16 13"><rect x="1" y="1" width="14" height="11" stroke="#3a66c9" fill="#eef3fc" stroke-width="1.3"/><path d="M4 5 H5 M7 5 H12 M4 8 H5 M7 8 H12" stroke="#3a66c9" stroke-width="1.3"/></svg>
<svg class="a" style="left:1809px;top:922px;" width="16" height="16" viewBox="0 0 16 16"><path d="M2 2 L14 14 M14 2 L2 14" stroke="#f08878" stroke-width="1.6"/></svg>
<div class="a" style="left:1742px;top:949px;width:176px;height:20px;background:#dcdcdc;border-radius:3px;"></div>
<svg class="a" style="left:1751px;top:954px;" width="7" height="10" viewBox="0 0 7 10"><path d="M1 0.5 V9.5 L6 5 Z" fill="#222"/></svg>
<div class="t" style="left:1766px;top:953.69px;font-size:11px;color:#000;transform:scaleX(1.0041);transform-origin:0 0;">Свойства</div>
<div class="a" style="left:1740px;top:972px;width:180px;height:1px;background:#e0e0e0;"></div>
</body></html>
